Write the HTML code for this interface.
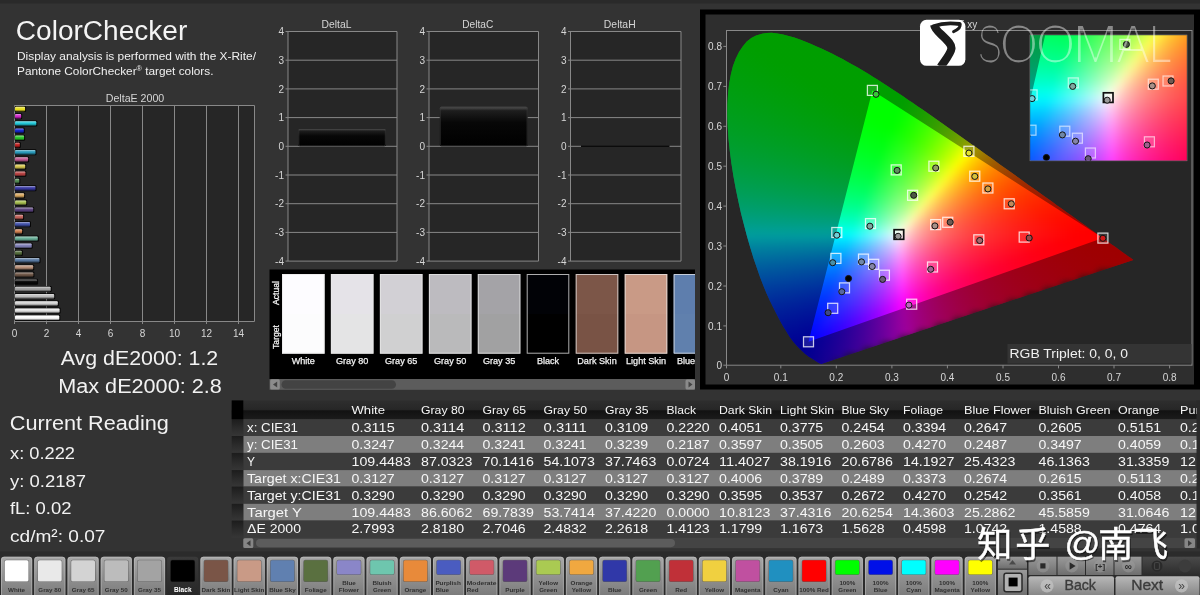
<!DOCTYPE html>
<html lang="en"><head><meta charset="utf-8"><title>ColorChecker</title>
<style>html,body{margin:0;padding:0;background:#333333;overflow:hidden}svg{display:block;font-family:'Liberation Sans', 'Noto Sans CJK SC', sans-serif}</style></head><body>
<svg width="1200" height="595" viewBox="0 0 1200 595">
<defs>
<linearGradient id="gbar" x1="0" y1="0" x2="0" y2="1"><stop offset="0" stop-color="#fff" stop-opacity=".55"/><stop offset=".35" stop-color="#fff" stop-opacity=".1"/><stop offset=".6" stop-color="#000" stop-opacity="0"/><stop offset="1" stop-color="#000" stop-opacity=".55"/></linearGradient>
<linearGradient id="gbtn" x1="0" y1="0" x2="0" y2="1"><stop offset="0" stop-color="#a8a8a8"/><stop offset=".5" stop-color="#909090"/><stop offset="1" stop-color="#787878"/></linearGradient>
<linearGradient id="gbtnsel" x1="0" y1="0" x2="0" y2="1"><stop offset="0" stop-color="#3a3a3a"/><stop offset="1" stop-color="#262626"/></linearGradient>
<linearGradient id="gblk" x1="0" y1="0" x2="0" y2="1"><stop offset="0" stop-color="#565656"/><stop offset=".1" stop-color="#1e1e1e"/><stop offset=".4" stop-color="#070707"/><stop offset="1" stop-color="#000"/></linearGradient>
<linearGradient id="ghead" x1="0" y1="0" x2="0" y2="1"><stop offset="0" stop-color="#2e2e2e"/><stop offset=".48" stop-color="#272727"/><stop offset=".56" stop-color="#121212"/><stop offset="1" stop-color="#1b1b1b"/></linearGradient>
<linearGradient id="gsel" x1="0" y1="0" x2="0" y2="1"><stop offset="0" stop-color="#1c1c1c"/><stop offset=".5" stop-color="#2a2a2a"/><stop offset="1" stop-color="#363636"/></linearGradient>
<linearGradient id="gctl" x1="0" y1="0" x2="0" y2="1"><stop offset="0" stop-color="#b8b8b8"/><stop offset="1" stop-color="#848484"/></linearGradient>
<linearGradient id="gctl2" x1="0" y1="0" x2="0" y2="1"><stop offset="0" stop-color="#9a9a9a"/><stop offset="1" stop-color="#6e6e6e"/></linearGradient>
<linearGradient id="gctld" x1="0" y1="0" x2="0" y2="1"><stop offset="0" stop-color="#4a4a4a"/><stop offset="1" stop-color="#2c2c2c"/></linearGradient>
<clipPath id="cloc"><path d="M821.9 363.8L821.8 363.8L821.8 363.9L821.6 363.9L821.5 363.9L821.3 363.9L821.0 363.9L820.7 363.8L820.4 363.8L820.1 363.6L819.8 363.5L819.5 363.3L819.0 363.0L818.5 362.7L818.0 362.4L817.3 361.9L816.5 361.4L815.6 360.9L814.6 360.3L813.5 359.6L812.2 358.7L810.7 357.8L809.1 356.9L807.3 355.6L805.2 353.9L802.6 351.6L799.7 348.8L796.8 345.7L794.1 342.7L792.0 340.0L790.1 337.4L788.2 334.5L786.1 331.1L783.7 327.2L781.3 323.0L778.7 318.2L775.9 312.8L773.0 306.9L769.8 300.5L766.6 293.4L763.4 285.7L760.1 277.2L756.9 268.1L753.6 258.4L750.4 248.0L747.2 237.0L744.1 225.3L741.0 213.2L738.3 201.1L735.7 188.6L733.4 175.9L731.4 163.2L729.8 150.9L728.5 138.8L727.7 126.9L727.3 115.3L727.4 104.4L728.0 94.0L729.1 84.0L730.8 74.7L732.9 66.3L735.7 58.8L739.0 52.1L742.7 46.4L746.8 41.6L751.3 38.1L756.1 35.6L761.2 33.9L766.5 32.9L771.8 32.8L777.4 33.4L783.0 34.6L788.6 36.0L794.3 37.6L799.9 39.6L805.6 41.8L811.1 44.1L816.6 46.4L821.9 48.8L827.1 51.2L832.4 53.8L837.5 56.4L842.6 59.1L847.7 61.9L852.7 64.7L857.8 67.6L862.8 70.6L867.8 73.6L872.9 76.7L877.8 79.8L882.8 83.0L887.8 86.2L892.7 89.4L897.7 92.7L902.7 96.0L907.6 99.4L912.6 102.8L917.5 106.2L922.5 109.6L927.5 113.0L932.5 116.5L937.4 120.0L942.4 123.5L947.3 126.9L952.2 130.4L957.2 133.9L962.1 137.4L967.0 140.9L971.9 144.4L976.8 147.8L981.6 151.3L986.4 154.7L991.2 158.1L995.9 161.5L1000.6 164.9L1005.3 168.2L1009.9 171.5L1014.5 174.8L1019.0 178.1L1023.4 181.3L1027.8 184.4L1032.2 187.5L1036.4 190.5L1040.6 193.5L1044.7 196.5L1048.7 199.3L1052.6 202.1L1056.4 204.9L1060.1 207.5L1063.6 210.0L1067.0 212.5L1070.3 214.8L1073.5 217.1L1076.6 219.3L1079.6 221.5L1082.5 223.5L1085.3 225.5L1087.8 227.3L1090.0 228.9L1092.3 230.5L1095.1 232.5L1098.4 234.9L1102.2 237.6L1106.0 240.3L1109.3 242.7L1112.0 244.7L1114.4 246.3L1116.5 247.8L1118.4 249.2L1120.2 250.5L1121.8 251.7L1123.3 252.7L1124.6 253.7L1125.8 254.5L1126.8 255.2L1127.7 255.9L1128.5 256.4L1129.2 256.9L1129.7 257.3L1130.2 257.6L1130.7 258.0L1131.4 258.5L1132.2 259.1L1132.8 259.5L1133.3 259.9Z"/></clipPath>
<clipPath id="cins"><rect x="1030.2" y="35.2" width="156.6" height="125.4"/></clipPath>
<filter id="fb" x="-5%" y="-5%" width="110%" height="110%" color-interpolation-filters="sRGB"><feGaussianBlur stdDeviation="3.2"/></filter>
<filter id="fthin" x="-2%" y="-10%" width="104%" height="120%"><feMorphology operator="erode" radius="1.1"/></filter>
<clipPath id="clogo"><rect x="0" y="0" width="45.4" height="46" rx="6.5"/></clipPath>
<radialGradient id="gdark" gradientUnits="userSpaceOnUse" cx="790" cy="400" r="120"><stop offset="0" stop-color="#000" stop-opacity=".5"/><stop offset=".5" stop-color="#000" stop-opacity=".42"/><stop offset="1" stop-color="#000" stop-opacity=".38"/></radialGradient>
<g id="ciem">
<g filter="url(#fb)">
<rect x="755" y="18" width="36.6" height="6.6" fill="#00ff00"/>
<rect x="743" y="24" width="72.6" height="6.6" fill="#00ff00"/>
<rect x="731" y="30" width="96.6" height="6.6" fill="#00ff00"/>
<rect x="725" y="36" width="6.6" height="6.6" fill="#00ff02"/>
<rect x="731" y="36" width="6.6" height="6.6" fill="#00ff01"/>
<rect x="737" y="36" width="96.6" height="6.6" fill="#00ff00"/>
<rect x="725" y="42" width="6.6" height="6.6" fill="#00ff04"/>
<rect x="731" y="42" width="6.6" height="6.6" fill="#00ff03"/>
<rect x="737" y="42" width="6.6" height="6.6" fill="#00ff01"/>
<rect x="743" y="42" width="102.6" height="6.6" fill="#00ff00"/>
<rect x="725" y="48" width="6.6" height="6.6" fill="#00ff06"/>
<rect x="731" y="48" width="6.6" height="6.6" fill="#00ff05"/>
<rect x="737" y="48" width="6.6" height="6.6" fill="#00ff04"/>
<rect x="743" y="48" width="6.6" height="6.6" fill="#00ff02"/>
<rect x="749" y="48" width="6.6" height="6.6" fill="#00ff01"/>
<rect x="755" y="48" width="114.6" height="6.6" fill="#00ff00"/>
<rect x="719" y="54" width="6.6" height="6.6" fill="#00ff0a"/>
<rect x="725" y="54" width="6.6" height="6.6" fill="#00ff09"/>
<rect x="731" y="54" width="6.6" height="6.6" fill="#00ff07"/>
<rect x="737" y="54" width="6.6" height="6.6" fill="#00ff06"/>
<rect x="743" y="54" width="6.6" height="6.6" fill="#00ff05"/>
<rect x="749" y="54" width="6.6" height="6.6" fill="#00ff03"/>
<rect x="755" y="54" width="6.6" height="6.6" fill="#00ff02"/>
<rect x="761" y="54" width="6.6" height="6.6" fill="#00ff01"/>
<rect x="767" y="54" width="108.6" height="6.6" fill="#00ff00"/>
<rect x="719" y="60" width="6.6" height="6.6" fill="#00ff0d"/>
<rect x="725" y="60" width="6.6" height="6.6" fill="#00ff0b"/>
<rect x="731" y="60" width="6.6" height="6.6" fill="#00ff0a"/>
<rect x="737" y="60" width="6.6" height="6.6" fill="#00ff09"/>
<rect x="743" y="60" width="6.6" height="6.6" fill="#00ff07"/>
<rect x="749" y="60" width="6.6" height="6.6" fill="#00ff06"/>
<rect x="755" y="60" width="6.6" height="6.6" fill="#00ff05"/>
<rect x="761" y="60" width="6.6" height="6.6" fill="#00ff03"/>
<rect x="767" y="60" width="6.6" height="6.6" fill="#00ff02"/>
<rect x="773" y="60" width="6.6" height="6.6" fill="#00ff01"/>
<rect x="779" y="60" width="108.6" height="6.6" fill="#00ff00"/>
<rect x="719" y="66" width="6.6" height="6.6" fill="#00ff10"/>
<rect x="725" y="66" width="6.6" height="6.6" fill="#00ff0e"/>
<rect x="731" y="66" width="6.6" height="6.6" fill="#00ff0d"/>
<rect x="737" y="66" width="6.6" height="6.6" fill="#00ff0b"/>
<rect x="743" y="66" width="6.6" height="6.6" fill="#00ff0a"/>
<rect x="749" y="66" width="6.6" height="6.6" fill="#00ff09"/>
<rect x="755" y="66" width="6.6" height="6.6" fill="#00ff07"/>
<rect x="761" y="66" width="6.6" height="6.6" fill="#00ff06"/>
<rect x="767" y="66" width="6.6" height="6.6" fill="#00ff04"/>
<rect x="773" y="66" width="6.6" height="6.6" fill="#00ff03"/>
<rect x="779" y="66" width="6.6" height="6.6" fill="#00ff02"/>
<rect x="785" y="66" width="6.6" height="6.6" fill="#00ff01"/>
<rect x="791" y="66" width="108.6" height="6.6" fill="#00ff00"/>
<rect x="713" y="72" width="6.6" height="6.6" fill="#00ff14"/>
<rect x="719" y="72" width="6.6" height="6.6" fill="#00ff13"/>
<rect x="725" y="72" width="6.6" height="6.6" fill="#00ff11"/>
<rect x="731" y="72" width="6.6" height="6.6" fill="#00ff10"/>
<rect x="737" y="72" width="6.6" height="6.6" fill="#00ff0f"/>
<rect x="743" y="72" width="6.6" height="6.6" fill="#00ff0d"/>
<rect x="749" y="72" width="6.6" height="6.6" fill="#00ff0c"/>
<rect x="755" y="72" width="6.6" height="6.6" fill="#00ff0a"/>
<rect x="761" y="72" width="6.6" height="6.6" fill="#00ff09"/>
<rect x="767" y="72" width="6.6" height="6.6" fill="#00ff07"/>
<rect x="773" y="72" width="6.6" height="6.6" fill="#00ff06"/>
<rect x="779" y="72" width="6.6" height="6.6" fill="#00ff04"/>
<rect x="785" y="72" width="6.6" height="6.6" fill="#00ff03"/>
<rect x="791" y="72" width="6.6" height="6.6" fill="#00ff02"/>
<rect x="797" y="72" width="102.6" height="6.6" fill="#00ff00"/>
<rect x="713" y="78" width="6.6" height="6.6" fill="#00ff18"/>
<rect x="719" y="78" width="6.6" height="6.6" fill="#00ff16"/>
<rect x="725" y="78" width="6.6" height="6.6" fill="#00ff15"/>
<rect x="731" y="78" width="6.6" height="6.6" fill="#00ff13"/>
<rect x="737" y="78" width="6.6" height="6.6" fill="#00ff12"/>
<rect x="743" y="78" width="6.6" height="6.6" fill="#00ff10"/>
<rect x="749" y="78" width="6.6" height="6.6" fill="#00ff0f"/>
<rect x="755" y="78" width="6.6" height="6.6" fill="#00ff0d"/>
<rect x="761" y="78" width="6.6" height="6.6" fill="#00ff0c"/>
<rect x="767" y="78" width="6.6" height="6.6" fill="#00ff0a"/>
<rect x="773" y="78" width="6.6" height="6.6" fill="#00ff09"/>
<rect x="779" y="78" width="6.6" height="6.6" fill="#00ff07"/>
<rect x="785" y="78" width="6.6" height="6.6" fill="#00ff06"/>
<rect x="791" y="78" width="6.6" height="6.6" fill="#00ff04"/>
<rect x="797" y="78" width="6.6" height="6.6" fill="#00ff03"/>
<rect x="803" y="78" width="6.6" height="6.6" fill="#00ff01"/>
<rect x="809" y="78" width="96.6" height="6.6" fill="#00ff00"/>
<rect x="713" y="84" width="6.6" height="6.6" fill="#00ff1b"/>
<rect x="719" y="84" width="6.6" height="6.6" fill="#00ff1a"/>
<rect x="725" y="84" width="6.6" height="6.6" fill="#00ff18"/>
<rect x="731" y="84" width="6.6" height="6.6" fill="#00ff17"/>
<rect x="737" y="84" width="6.6" height="6.6" fill="#00ff15"/>
<rect x="743" y="84" width="6.6" height="6.6" fill="#00ff14"/>
<rect x="749" y="84" width="6.6" height="6.6" fill="#00ff12"/>
<rect x="755" y="84" width="6.6" height="6.6" fill="#00ff11"/>
<rect x="761" y="84" width="6.6" height="6.6" fill="#00ff0f"/>
<rect x="767" y="84" width="6.6" height="6.6" fill="#00ff0d"/>
<rect x="773" y="84" width="6.6" height="6.6" fill="#00ff0c"/>
<rect x="779" y="84" width="6.6" height="6.6" fill="#00ff0a"/>
<rect x="785" y="84" width="6.6" height="6.6" fill="#00ff09"/>
<rect x="791" y="84" width="6.6" height="6.6" fill="#00ff07"/>
<rect x="797" y="84" width="6.6" height="6.6" fill="#00ff05"/>
<rect x="803" y="84" width="6.6" height="6.6" fill="#00ff04"/>
<rect x="809" y="84" width="6.6" height="6.6" fill="#00ff02"/>
<rect x="815" y="84" width="6.6" height="6.6" fill="#00ff01"/>
<rect x="821" y="84" width="84.6" height="6.6" fill="#00ff00"/>
<rect x="905" y="84" width="6.6" height="6.6" fill="#01ff00"/>
<rect x="911" y="84" width="6.6" height="6.6" fill="#08ff00"/>
<rect x="713" y="90" width="6.6" height="6.6" fill="#00ff1f"/>
<rect x="719" y="90" width="6.6" height="6.6" fill="#00ff1e"/>
<rect x="725" y="90" width="6.6" height="6.6" fill="#00ff1c"/>
<rect x="731" y="90" width="6.6" height="6.6" fill="#00ff1b"/>
<rect x="737" y="90" width="6.6" height="6.6" fill="#00ff19"/>
<rect x="743" y="90" width="6.6" height="6.6" fill="#00ff17"/>
<rect x="749" y="90" width="6.6" height="6.6" fill="#00ff16"/>
<rect x="755" y="90" width="6.6" height="6.6" fill="#00ff14"/>
<rect x="761" y="90" width="6.6" height="6.6" fill="#00ff13"/>
<rect x="767" y="90" width="6.6" height="6.6" fill="#00ff11"/>
<rect x="773" y="90" width="6.6" height="6.6" fill="#00ff0f"/>
<rect x="779" y="90" width="6.6" height="6.6" fill="#00ff0e"/>
<rect x="785" y="90" width="6.6" height="6.6" fill="#00ff0c"/>
<rect x="791" y="90" width="6.6" height="6.6" fill="#00ff0a"/>
<rect x="797" y="90" width="6.6" height="6.6" fill="#00ff09"/>
<rect x="803" y="90" width="6.6" height="6.6" fill="#00ff07"/>
<rect x="809" y="90" width="6.6" height="6.6" fill="#00ff05"/>
<rect x="815" y="90" width="6.6" height="6.6" fill="#00ff04"/>
<rect x="821" y="90" width="6.6" height="6.6" fill="#00ff02"/>
<rect x="827" y="90" width="6.6" height="6.6" fill="#00ff01"/>
<rect x="833" y="90" width="72.6" height="6.6" fill="#00ff00"/>
<rect x="905" y="90" width="6.6" height="6.6" fill="#03ff00"/>
<rect x="911" y="90" width="6.6" height="6.6" fill="#0bff00"/>
<rect x="917" y="90" width="6.6" height="6.6" fill="#14ff00"/>
<rect x="923" y="90" width="6.6" height="6.6" fill="#1eff00"/>
<rect x="713" y="96" width="6.6" height="6.6" fill="#00ff23"/>
<rect x="719" y="96" width="6.6" height="6.6" fill="#00ff22"/>
<rect x="725" y="96" width="6.6" height="6.6" fill="#00ff20"/>
<rect x="731" y="96" width="6.6" height="6.6" fill="#00ff1f"/>
<rect x="737" y="96" width="6.6" height="6.6" fill="#00ff1d"/>
<rect x="743" y="96" width="6.6" height="6.6" fill="#00ff1b"/>
<rect x="749" y="96" width="6.6" height="6.6" fill="#00ff1a"/>
<rect x="755" y="96" width="6.6" height="6.6" fill="#00ff18"/>
<rect x="761" y="96" width="6.6" height="6.6" fill="#00ff16"/>
<rect x="767" y="96" width="6.6" height="6.6" fill="#00ff15"/>
<rect x="773" y="96" width="6.6" height="6.6" fill="#00ff13"/>
<rect x="779" y="96" width="6.6" height="6.6" fill="#00ff11"/>
<rect x="785" y="96" width="6.6" height="6.6" fill="#00ff10"/>
<rect x="791" y="96" width="6.6" height="6.6" fill="#00ff0e"/>
<rect x="797" y="96" width="6.6" height="6.6" fill="#00ff0c"/>
<rect x="803" y="96" width="6.6" height="6.6" fill="#00ff0a"/>
<rect x="809" y="96" width="6.6" height="6.6" fill="#00ff09"/>
<rect x="815" y="96" width="6.6" height="6.6" fill="#00ff07"/>
<rect x="821" y="96" width="6.6" height="6.6" fill="#00ff05"/>
<rect x="827" y="96" width="6.6" height="6.6" fill="#00ff03"/>
<rect x="833" y="96" width="6.6" height="6.6" fill="#00ff02"/>
<rect x="839" y="96" width="66.6" height="6.6" fill="#00ff00"/>
<rect x="905" y="96" width="6.6" height="6.6" fill="#06ff00"/>
<rect x="911" y="96" width="6.6" height="6.6" fill="#0fff00"/>
<rect x="917" y="96" width="6.6" height="6.6" fill="#18ff00"/>
<rect x="923" y="96" width="6.6" height="6.6" fill="#23ff00"/>
<rect x="929" y="96" width="6.6" height="6.6" fill="#2eff00"/>
<rect x="713" y="102" width="6.6" height="6.6" fill="#00ff28"/>
<rect x="719" y="102" width="6.6" height="6.6" fill="#00ff26"/>
<rect x="725" y="102" width="6.6" height="6.6" fill="#00ff25"/>
<rect x="731" y="102" width="6.6" height="6.6" fill="#00ff23"/>
<rect x="737" y="102" width="6.6" height="6.6" fill="#00ff21"/>
<rect x="743" y="102" width="6.6" height="6.6" fill="#00ff20"/>
<rect x="749" y="102" width="6.6" height="6.6" fill="#00ff1e"/>
<rect x="755" y="102" width="6.6" height="6.6" fill="#00ff1c"/>
<rect x="761" y="102" width="6.6" height="6.6" fill="#00ff1a"/>
<rect x="767" y="102" width="6.6" height="6.6" fill="#00ff19"/>
<rect x="773" y="102" width="6.6" height="6.6" fill="#00ff17"/>
<rect x="779" y="102" width="6.6" height="6.6" fill="#00ff15"/>
<rect x="785" y="102" width="6.6" height="6.6" fill="#00ff13"/>
<rect x="791" y="102" width="6.6" height="6.6" fill="#00ff12"/>
<rect x="797" y="102" width="6.6" height="6.6" fill="#00ff10"/>
<rect x="803" y="102" width="6.6" height="6.6" fill="#00ff0e"/>
<rect x="809" y="102" width="6.6" height="6.6" fill="#00ff0c"/>
<rect x="815" y="102" width="6.6" height="6.6" fill="#00ff0a"/>
<rect x="821" y="102" width="6.6" height="6.6" fill="#00ff09"/>
<rect x="827" y="102" width="6.6" height="6.6" fill="#00ff07"/>
<rect x="833" y="102" width="6.6" height="6.6" fill="#00ff05"/>
<rect x="839" y="102" width="6.6" height="6.6" fill="#00ff03"/>
<rect x="845" y="102" width="6.6" height="6.6" fill="#00ff02"/>
<rect x="851" y="102" width="48.6" height="6.6" fill="#00ff00"/>
<rect x="899" y="102" width="6.6" height="6.6" fill="#02ff00"/>
<rect x="905" y="102" width="6.6" height="6.6" fill="#0aff00"/>
<rect x="911" y="102" width="6.6" height="6.6" fill="#13ff00"/>
<rect x="917" y="102" width="6.6" height="6.6" fill="#1dff00"/>
<rect x="923" y="102" width="6.6" height="6.6" fill="#28ff00"/>
<rect x="929" y="102" width="6.6" height="6.6" fill="#34ff00"/>
<rect x="935" y="102" width="6.6" height="6.6" fill="#40ff00"/>
<rect x="941" y="102" width="6.6" height="6.6" fill="#4dff00"/>
<rect x="713" y="108" width="6.6" height="6.6" fill="#00ff2c"/>
<rect x="719" y="108" width="6.6" height="6.6" fill="#00ff2b"/>
<rect x="725" y="108" width="6.6" height="6.6" fill="#00ff29"/>
<rect x="731" y="108" width="6.6" height="6.6" fill="#00ff27"/>
<rect x="737" y="108" width="6.6" height="6.6" fill="#00ff26"/>
<rect x="743" y="108" width="6.6" height="6.6" fill="#00ff24"/>
<rect x="749" y="108" width="6.6" height="6.6" fill="#00ff22"/>
<rect x="755" y="108" width="6.6" height="6.6" fill="#00ff21"/>
<rect x="761" y="108" width="6.6" height="6.6" fill="#00ff1f"/>
<rect x="767" y="108" width="6.6" height="6.6" fill="#00ff1d"/>
<rect x="773" y="108" width="6.6" height="6.6" fill="#00ff1b"/>
<rect x="779" y="108" width="6.6" height="6.6" fill="#00ff19"/>
<rect x="785" y="108" width="6.6" height="6.6" fill="#00ff18"/>
<rect x="791" y="108" width="6.6" height="6.6" fill="#00ff16"/>
<rect x="797" y="108" width="6.6" height="6.6" fill="#00ff14"/>
<rect x="803" y="108" width="6.6" height="6.6" fill="#00ff12"/>
<rect x="809" y="108" width="6.6" height="6.6" fill="#00ff10"/>
<rect x="815" y="108" width="6.6" height="6.6" fill="#00ff0e"/>
<rect x="821" y="108" width="6.6" height="6.6" fill="#00ff0c"/>
<rect x="827" y="108" width="6.6" height="6.6" fill="#00ff0a"/>
<rect x="833" y="108" width="6.6" height="6.6" fill="#00ff08"/>
<rect x="839" y="108" width="6.6" height="6.6" fill="#00ff07"/>
<rect x="845" y="108" width="6.6" height="6.6" fill="#00ff05"/>
<rect x="851" y="108" width="6.6" height="6.6" fill="#00ff03"/>
<rect x="857" y="108" width="6.6" height="6.6" fill="#00ff01"/>
<rect x="863" y="108" width="36.6" height="6.6" fill="#00ff00"/>
<rect x="899" y="108" width="6.6" height="6.6" fill="#05ff00"/>
<rect x="905" y="108" width="6.6" height="6.6" fill="#0eff00"/>
<rect x="911" y="108" width="6.6" height="6.6" fill="#18ff00"/>
<rect x="917" y="108" width="6.6" height="6.6" fill="#22ff00"/>
<rect x="923" y="108" width="6.6" height="6.6" fill="#2eff00"/>
<rect x="929" y="108" width="6.6" height="6.6" fill="#3aff00"/>
<rect x="935" y="108" width="6.6" height="6.6" fill="#47ff00"/>
<rect x="941" y="108" width="6.6" height="6.6" fill="#54ff00"/>
<rect x="947" y="108" width="6.6" height="6.6" fill="#63ff00"/>
<rect x="953" y="108" width="6.6" height="6.6" fill="#72ff00"/>
<rect x="713" y="114" width="6.6" height="6.6" fill="#00ff31"/>
<rect x="719" y="114" width="6.6" height="6.6" fill="#00ff30"/>
<rect x="725" y="114" width="6.6" height="6.6" fill="#00ff2e"/>
<rect x="731" y="114" width="6.6" height="6.6" fill="#00ff2c"/>
<rect x="737" y="114" width="6.6" height="6.6" fill="#00ff2b"/>
<rect x="743" y="114" width="6.6" height="6.6" fill="#00ff29"/>
<rect x="749" y="114" width="6.6" height="6.6" fill="#00ff27"/>
<rect x="755" y="114" width="6.6" height="6.6" fill="#00ff25"/>
<rect x="761" y="114" width="6.6" height="6.6" fill="#00ff24"/>
<rect x="767" y="114" width="6.6" height="6.6" fill="#00ff22"/>
<rect x="773" y="114" width="6.6" height="6.6" fill="#00ff20"/>
<rect x="779" y="114" width="6.6" height="6.6" fill="#00ff1e"/>
<rect x="785" y="114" width="6.6" height="6.6" fill="#00ff1c"/>
<rect x="791" y="114" width="6.6" height="6.6" fill="#00ff1a"/>
<rect x="797" y="114" width="6.6" height="6.6" fill="#00ff18"/>
<rect x="803" y="114" width="6.6" height="6.6" fill="#00ff16"/>
<rect x="809" y="114" width="6.6" height="6.6" fill="#00ff14"/>
<rect x="815" y="114" width="6.6" height="6.6" fill="#00ff13"/>
<rect x="821" y="114" width="6.6" height="6.6" fill="#00ff11"/>
<rect x="827" y="114" width="6.6" height="6.6" fill="#00ff0f"/>
<rect x="833" y="114" width="6.6" height="6.6" fill="#00ff0c"/>
<rect x="839" y="114" width="6.6" height="6.6" fill="#00ff0a"/>
<rect x="845" y="114" width="6.6" height="6.6" fill="#00ff08"/>
<rect x="851" y="114" width="6.6" height="6.6" fill="#00ff06"/>
<rect x="857" y="114" width="6.6" height="6.6" fill="#00ff05"/>
<rect x="863" y="114" width="6.6" height="6.6" fill="#00ff03"/>
<rect x="869" y="114" width="6.6" height="6.6" fill="#00ff01"/>
<rect x="875" y="114" width="24.6" height="6.6" fill="#00ff00"/>
<rect x="899" y="114" width="6.6" height="6.6" fill="#08ff00"/>
<rect x="905" y="114" width="6.6" height="6.6" fill="#12ff00"/>
<rect x="911" y="114" width="6.6" height="6.6" fill="#1cff00"/>
<rect x="917" y="114" width="6.6" height="6.6" fill="#28ff00"/>
<rect x="923" y="114" width="6.6" height="6.6" fill="#34ff00"/>
<rect x="929" y="114" width="6.6" height="6.6" fill="#41ff00"/>
<rect x="935" y="114" width="6.6" height="6.6" fill="#4fff00"/>
<rect x="941" y="114" width="6.6" height="6.6" fill="#5dff00"/>
<rect x="947" y="114" width="6.6" height="6.6" fill="#6cff00"/>
<rect x="953" y="114" width="6.6" height="6.6" fill="#7cff00"/>
<rect x="959" y="114" width="6.6" height="6.6" fill="#8cff00"/>
<rect x="713" y="120" width="6.6" height="6.6" fill="#00ff36"/>
<rect x="719" y="120" width="6.6" height="6.6" fill="#00ff35"/>
<rect x="725" y="120" width="6.6" height="6.6" fill="#00ff33"/>
<rect x="731" y="120" width="6.6" height="6.6" fill="#00ff31"/>
<rect x="737" y="120" width="6.6" height="6.6" fill="#00ff30"/>
<rect x="743" y="120" width="6.6" height="6.6" fill="#00ff2e"/>
<rect x="749" y="120" width="6.6" height="6.6" fill="#00ff2c"/>
<rect x="755" y="120" width="6.6" height="6.6" fill="#00ff2a"/>
<rect x="761" y="120" width="6.6" height="6.6" fill="#00ff29"/>
<rect x="767" y="120" width="6.6" height="6.6" fill="#00ff27"/>
<rect x="773" y="120" width="6.6" height="6.6" fill="#00ff25"/>
<rect x="779" y="120" width="6.6" height="6.6" fill="#00ff23"/>
<rect x="785" y="120" width="6.6" height="6.6" fill="#00ff21"/>
<rect x="791" y="120" width="6.6" height="6.6" fill="#00ff1f"/>
<rect x="797" y="120" width="6.6" height="6.6" fill="#00ff1d"/>
<rect x="803" y="120" width="6.6" height="6.6" fill="#00ff1b"/>
<rect x="809" y="120" width="6.6" height="6.6" fill="#00ff19"/>
<rect x="815" y="120" width="6.6" height="6.6" fill="#00ff17"/>
<rect x="821" y="120" width="6.6" height="6.6" fill="#00ff15"/>
<rect x="827" y="120" width="6.6" height="6.6" fill="#00ff13"/>
<rect x="833" y="120" width="6.6" height="6.6" fill="#00ff11"/>
<rect x="839" y="120" width="6.6" height="6.6" fill="#00ff0f"/>
<rect x="845" y="120" width="6.6" height="6.6" fill="#00ff0d"/>
<rect x="851" y="120" width="6.6" height="6.6" fill="#00ff0b"/>
<rect x="857" y="120" width="6.6" height="6.6" fill="#00ff08"/>
<rect x="863" y="120" width="6.6" height="6.6" fill="#00ff06"/>
<rect x="869" y="120" width="6.6" height="6.6" fill="#00ff04"/>
<rect x="875" y="120" width="6.6" height="6.6" fill="#00ff02"/>
<rect x="881" y="120" width="12.6" height="6.6" fill="#00ff00"/>
<rect x="893" y="120" width="6.6" height="6.6" fill="#03ff00"/>
<rect x="899" y="120" width="6.6" height="6.6" fill="#0cff00"/>
<rect x="905" y="120" width="6.6" height="6.6" fill="#17ff00"/>
<rect x="911" y="120" width="6.6" height="6.6" fill="#22ff00"/>
<rect x="917" y="120" width="6.6" height="6.6" fill="#2eff00"/>
<rect x="923" y="120" width="6.6" height="6.6" fill="#3bff00"/>
<rect x="929" y="120" width="6.6" height="6.6" fill="#49ff00"/>
<rect x="935" y="120" width="6.6" height="6.6" fill="#57ff00"/>
<rect x="941" y="120" width="6.6" height="6.6" fill="#66ff00"/>
<rect x="947" y="120" width="6.6" height="6.6" fill="#76ff00"/>
<rect x="953" y="120" width="6.6" height="6.6" fill="#87ff00"/>
<rect x="959" y="120" width="6.6" height="6.6" fill="#98ff00"/>
<rect x="713" y="126" width="6.6" height="6.6" fill="#00ff3c"/>
<rect x="719" y="126" width="6.6" height="6.6" fill="#00ff3a"/>
<rect x="725" y="126" width="6.6" height="6.6" fill="#00ff39"/>
<rect x="731" y="126" width="6.6" height="6.6" fill="#00ff37"/>
<rect x="737" y="126" width="6.6" height="6.6" fill="#00ff35"/>
<rect x="743" y="126" width="6.6" height="6.6" fill="#00ff33"/>
<rect x="749" y="126" width="6.6" height="6.6" fill="#00ff32"/>
<rect x="755" y="126" width="6.6" height="6.6" fill="#00ff30"/>
<rect x="761" y="126" width="6.6" height="6.6" fill="#00ff2e"/>
<rect x="767" y="126" width="6.6" height="6.6" fill="#00ff2c"/>
<rect x="773" y="126" width="6.6" height="6.6" fill="#00ff2a"/>
<rect x="779" y="126" width="6.6" height="6.6" fill="#00ff28"/>
<rect x="785" y="126" width="6.6" height="6.6" fill="#00ff26"/>
<rect x="791" y="126" width="6.6" height="6.6" fill="#00ff24"/>
<rect x="797" y="126" width="6.6" height="6.6" fill="#00ff22"/>
<rect x="803" y="126" width="6.6" height="6.6" fill="#00ff20"/>
<rect x="809" y="126" width="6.6" height="6.6" fill="#00ff1e"/>
<rect x="815" y="126" width="6.6" height="6.6" fill="#00ff1c"/>
<rect x="821" y="126" width="6.6" height="6.6" fill="#00ff1a"/>
<rect x="827" y="126" width="6.6" height="6.6" fill="#00ff18"/>
<rect x="833" y="126" width="6.6" height="6.6" fill="#00ff16"/>
<rect x="839" y="126" width="6.6" height="6.6" fill="#00ff14"/>
<rect x="845" y="126" width="6.6" height="6.6" fill="#00ff11"/>
<rect x="851" y="126" width="6.6" height="6.6" fill="#00ff0f"/>
<rect x="857" y="126" width="6.6" height="6.6" fill="#00ff0d"/>
<rect x="863" y="126" width="6.6" height="6.6" fill="#00ff0b"/>
<rect x="869" y="126" width="6.6" height="6.6" fill="#00ff08"/>
<rect x="875" y="126" width="6.6" height="6.6" fill="#00ff06"/>
<rect x="881" y="126" width="6.6" height="6.6" fill="#00ff04"/>
<rect x="887" y="126" width="6.6" height="6.6" fill="#00ff02"/>
<rect x="893" y="126" width="6.6" height="6.6" fill="#07ff00"/>
<rect x="899" y="126" width="6.6" height="6.6" fill="#11ff00"/>
<rect x="905" y="126" width="6.6" height="6.6" fill="#1cff00"/>
<rect x="911" y="126" width="6.6" height="6.6" fill="#28ff00"/>
<rect x="917" y="126" width="6.6" height="6.6" fill="#35ff00"/>
<rect x="923" y="126" width="6.6" height="6.6" fill="#42ff00"/>
<rect x="929" y="126" width="6.6" height="6.6" fill="#51ff00"/>
<rect x="935" y="126" width="6.6" height="6.6" fill="#60ff00"/>
<rect x="941" y="126" width="6.6" height="6.6" fill="#70ff00"/>
<rect x="947" y="126" width="6.6" height="6.6" fill="#81ff00"/>
<rect x="953" y="126" width="6.6" height="6.6" fill="#93ff00"/>
<rect x="959" y="126" width="6.6" height="6.6" fill="#a5ff00"/>
<rect x="965" y="126" width="6.6" height="6.6" fill="#b9ff00"/>
<rect x="971" y="126" width="6.6" height="6.6" fill="#cdff00"/>
<rect x="713" y="132" width="6.6" height="6.6" fill="#00ff42"/>
<rect x="719" y="132" width="6.6" height="6.6" fill="#00ff40"/>
<rect x="725" y="132" width="6.6" height="6.6" fill="#00ff3e"/>
<rect x="731" y="132" width="6.6" height="6.6" fill="#00ff3d"/>
<rect x="737" y="132" width="6.6" height="6.6" fill="#00ff3b"/>
<rect x="743" y="132" width="6.6" height="6.6" fill="#00ff39"/>
<rect x="749" y="132" width="6.6" height="6.6" fill="#00ff37"/>
<rect x="755" y="132" width="6.6" height="6.6" fill="#00ff36"/>
<rect x="761" y="132" width="6.6" height="6.6" fill="#00ff34"/>
<rect x="767" y="132" width="6.6" height="6.6" fill="#00ff32"/>
<rect x="773" y="132" width="6.6" height="6.6" fill="#00ff30"/>
<rect x="779" y="132" width="6.6" height="6.6" fill="#00ff2e"/>
<rect x="785" y="132" width="6.6" height="6.6" fill="#00ff2c"/>
<rect x="791" y="132" width="6.6" height="6.6" fill="#00ff2a"/>
<rect x="797" y="132" width="6.6" height="6.6" fill="#00ff28"/>
<rect x="803" y="132" width="6.6" height="6.6" fill="#00ff26"/>
<rect x="809" y="132" width="6.6" height="6.6" fill="#00ff24"/>
<rect x="815" y="132" width="6.6" height="6.6" fill="#00ff22"/>
<rect x="821" y="132" width="6.6" height="6.6" fill="#00ff20"/>
<rect x="827" y="132" width="6.6" height="6.6" fill="#00ff1d"/>
<rect x="833" y="132" width="6.6" height="6.6" fill="#00ff1b"/>
<rect x="839" y="132" width="6.6" height="6.6" fill="#00ff19"/>
<rect x="845" y="132" width="6.6" height="6.6" fill="#00ff17"/>
<rect x="851" y="132" width="6.6" height="6.6" fill="#00ff14"/>
<rect x="857" y="132" width="6.6" height="6.6" fill="#00ff12"/>
<rect x="863" y="132" width="6.6" height="6.6" fill="#00ff10"/>
<rect x="869" y="132" width="6.6" height="6.6" fill="#00ff0d"/>
<rect x="875" y="132" width="6.6" height="6.6" fill="#00ff0b"/>
<rect x="881" y="132" width="6.6" height="6.6" fill="#00ff08"/>
<rect x="887" y="132" width="6.6" height="6.6" fill="#04ff08"/>
<rect x="893" y="132" width="6.6" height="6.6" fill="#0eff08"/>
<rect x="899" y="132" width="6.6" height="6.6" fill="#17ff04"/>
<rect x="905" y="132" width="6.6" height="6.6" fill="#21ff00"/>
<rect x="911" y="132" width="6.6" height="6.6" fill="#2eff00"/>
<rect x="917" y="132" width="6.6" height="6.6" fill="#3cff00"/>
<rect x="923" y="132" width="6.6" height="6.6" fill="#4aff00"/>
<rect x="929" y="132" width="6.6" height="6.6" fill="#5aff00"/>
<rect x="935" y="132" width="6.6" height="6.6" fill="#6aff00"/>
<rect x="941" y="132" width="6.6" height="6.6" fill="#7bff00"/>
<rect x="947" y="132" width="6.6" height="6.6" fill="#8dff00"/>
<rect x="953" y="132" width="6.6" height="6.6" fill="#a0ff00"/>
<rect x="959" y="132" width="6.6" height="6.6" fill="#b4ff00"/>
<rect x="965" y="132" width="6.6" height="6.6" fill="#c8ff00"/>
<rect x="971" y="132" width="6.6" height="6.6" fill="#deff00"/>
<rect x="977" y="132" width="6.6" height="6.6" fill="#f5ff00"/>
<rect x="713" y="138" width="6.6" height="6.6" fill="#00ff48"/>
<rect x="719" y="138" width="6.6" height="6.6" fill="#00ff46"/>
<rect x="725" y="138" width="6.6" height="6.6" fill="#00ff45"/>
<rect x="731" y="138" width="6.6" height="6.6" fill="#00ff43"/>
<rect x="737" y="138" width="6.6" height="6.6" fill="#00ff41"/>
<rect x="743" y="138" width="6.6" height="6.6" fill="#00ff3f"/>
<rect x="749" y="138" width="6.6" height="6.6" fill="#00ff3e"/>
<rect x="755" y="138" width="6.6" height="6.6" fill="#00ff3c"/>
<rect x="761" y="138" width="6.6" height="6.6" fill="#00ff3a"/>
<rect x="767" y="138" width="6.6" height="6.6" fill="#00ff38"/>
<rect x="773" y="138" width="6.6" height="6.6" fill="#00ff36"/>
<rect x="779" y="138" width="6.6" height="6.6" fill="#00ff34"/>
<rect x="785" y="138" width="6.6" height="6.6" fill="#00ff32"/>
<rect x="791" y="138" width="6.6" height="6.6" fill="#00ff30"/>
<rect x="797" y="138" width="6.6" height="6.6" fill="#00ff2e"/>
<rect x="803" y="138" width="6.6" height="6.6" fill="#00ff2c"/>
<rect x="809" y="138" width="6.6" height="6.6" fill="#00ff2a"/>
<rect x="815" y="138" width="6.6" height="6.6" fill="#00ff28"/>
<rect x="821" y="138" width="6.6" height="6.6" fill="#00ff25"/>
<rect x="827" y="138" width="6.6" height="6.6" fill="#00ff23"/>
<rect x="833" y="138" width="6.6" height="6.6" fill="#00ff21"/>
<rect x="839" y="138" width="6.6" height="6.6" fill="#00ff1f"/>
<rect x="845" y="138" width="6.6" height="6.6" fill="#00ff1c"/>
<rect x="851" y="138" width="6.6" height="6.6" fill="#00ff1a"/>
<rect x="857" y="138" width="6.6" height="6.6" fill="#00ff17"/>
<rect x="863" y="138" width="6.6" height="6.6" fill="#00ff15"/>
<rect x="869" y="138" width="6.6" height="6.6" fill="#00ff12"/>
<rect x="875" y="138" width="6.6" height="6.6" fill="#00ff10"/>
<rect x="881" y="138" width="6.6" height="6.6" fill="#00ff0d"/>
<rect x="887" y="138" width="6.6" height="6.6" fill="#0aff0f"/>
<rect x="893" y="138" width="6.6" height="6.6" fill="#15ff0f"/>
<rect x="899" y="138" width="6.6" height="6.6" fill="#1eff0b"/>
<rect x="905" y="138" width="6.6" height="6.6" fill="#29ff07"/>
<rect x="911" y="138" width="6.6" height="6.6" fill="#36ff03"/>
<rect x="917" y="138" width="6.6" height="6.6" fill="#44ff00"/>
<rect x="923" y="138" width="6.6" height="6.6" fill="#53ff00"/>
<rect x="929" y="138" width="6.6" height="6.6" fill="#64ff00"/>
<rect x="935" y="138" width="6.6" height="6.6" fill="#75ff00"/>
<rect x="941" y="138" width="6.6" height="6.6" fill="#87ff00"/>
<rect x="947" y="138" width="6.6" height="6.6" fill="#9aff00"/>
<rect x="953" y="138" width="6.6" height="6.6" fill="#aeff00"/>
<rect x="959" y="138" width="6.6" height="6.6" fill="#c3ff00"/>
<rect x="965" y="138" width="6.6" height="6.6" fill="#d9ff00"/>
<rect x="971" y="138" width="6.6" height="6.6" fill="#f1ff00"/>
<rect x="977" y="138" width="6.6" height="6.6" fill="#fff500"/>
<rect x="983" y="138" width="6.6" height="6.6" fill="#ffe000"/>
<rect x="989" y="138" width="6.6" height="6.6" fill="#ffcd00"/>
<rect x="713" y="144" width="6.6" height="6.6" fill="#00ff4f"/>
<rect x="719" y="144" width="6.6" height="6.6" fill="#00ff4d"/>
<rect x="725" y="144" width="6.6" height="6.6" fill="#00ff4b"/>
<rect x="731" y="144" width="6.6" height="6.6" fill="#00ff4a"/>
<rect x="737" y="144" width="6.6" height="6.6" fill="#00ff48"/>
<rect x="743" y="144" width="6.6" height="6.6" fill="#00ff46"/>
<rect x="749" y="144" width="6.6" height="6.6" fill="#00ff44"/>
<rect x="755" y="144" width="6.6" height="6.6" fill="#00ff42"/>
<rect x="761" y="144" width="6.6" height="6.6" fill="#00ff41"/>
<rect x="767" y="144" width="6.6" height="6.6" fill="#00ff3f"/>
<rect x="773" y="144" width="6.6" height="6.6" fill="#00ff3d"/>
<rect x="779" y="144" width="6.6" height="6.6" fill="#00ff3b"/>
<rect x="785" y="144" width="6.6" height="6.6" fill="#00ff39"/>
<rect x="791" y="144" width="6.6" height="6.6" fill="#00ff37"/>
<rect x="797" y="144" width="6.6" height="6.6" fill="#00ff35"/>
<rect x="803" y="144" width="6.6" height="6.6" fill="#00ff33"/>
<rect x="809" y="144" width="6.6" height="6.6" fill="#00ff30"/>
<rect x="815" y="144" width="6.6" height="6.6" fill="#00ff2e"/>
<rect x="821" y="144" width="6.6" height="6.6" fill="#00ff2c"/>
<rect x="827" y="144" width="6.6" height="6.6" fill="#00ff2a"/>
<rect x="833" y="144" width="6.6" height="6.6" fill="#00ff27"/>
<rect x="839" y="144" width="6.6" height="6.6" fill="#00ff25"/>
<rect x="845" y="144" width="6.6" height="6.6" fill="#00ff22"/>
<rect x="851" y="144" width="6.6" height="6.6" fill="#00ff20"/>
<rect x="857" y="144" width="6.6" height="6.6" fill="#00ff1d"/>
<rect x="863" y="144" width="6.6" height="6.6" fill="#00ff1b"/>
<rect x="869" y="144" width="6.6" height="6.6" fill="#00ff18"/>
<rect x="875" y="144" width="6.6" height="6.6" fill="#00ff16"/>
<rect x="881" y="144" width="6.6" height="6.6" fill="#01ff13"/>
<rect x="887" y="144" width="6.6" height="6.6" fill="#10ff16"/>
<rect x="893" y="144" width="6.6" height="6.6" fill="#1cff17"/>
<rect x="899" y="144" width="6.6" height="6.6" fill="#26ff13"/>
<rect x="905" y="144" width="6.6" height="6.6" fill="#32ff0f"/>
<rect x="911" y="144" width="6.6" height="6.6" fill="#3fff0b"/>
<rect x="917" y="144" width="6.6" height="6.6" fill="#4eff07"/>
<rect x="923" y="144" width="6.6" height="6.6" fill="#5dff02"/>
<rect x="929" y="144" width="6.6" height="6.6" fill="#6fff00"/>
<rect x="935" y="144" width="6.6" height="6.6" fill="#81ff00"/>
<rect x="941" y="144" width="6.6" height="6.6" fill="#94ff00"/>
<rect x="947" y="144" width="6.6" height="6.6" fill="#a9ff00"/>
<rect x="953" y="144" width="6.6" height="6.6" fill="#beff00"/>
<rect x="959" y="144" width="6.6" height="6.6" fill="#d5ff00"/>
<rect x="965" y="144" width="6.6" height="6.6" fill="#ecff00"/>
<rect x="971" y="144" width="6.6" height="6.6" fill="#fff900"/>
<rect x="977" y="144" width="6.6" height="6.6" fill="#ffe200"/>
<rect x="983" y="144" width="6.6" height="6.6" fill="#ffce00"/>
<rect x="989" y="144" width="6.6" height="6.6" fill="#ffbd00"/>
<rect x="995" y="144" width="6.6" height="6.6" fill="#ffae00"/>
<rect x="1001" y="144" width="6.6" height="6.6" fill="#ffa000"/>
<rect x="713" y="150" width="6.6" height="6.6" fill="#00ff56"/>
<rect x="719" y="150" width="6.6" height="6.6" fill="#00ff54"/>
<rect x="725" y="150" width="6.6" height="6.6" fill="#00ff52"/>
<rect x="731" y="150" width="6.6" height="6.6" fill="#00ff51"/>
<rect x="737" y="150" width="6.6" height="6.6" fill="#00ff4f"/>
<rect x="743" y="150" width="6.6" height="6.6" fill="#00ff4d"/>
<rect x="749" y="150" width="6.6" height="6.6" fill="#00ff4b"/>
<rect x="755" y="150" width="6.6" height="6.6" fill="#00ff4a"/>
<rect x="761" y="150" width="6.6" height="6.6" fill="#00ff48"/>
<rect x="767" y="150" width="6.6" height="6.6" fill="#00ff46"/>
<rect x="773" y="150" width="6.6" height="6.6" fill="#00ff44"/>
<rect x="779" y="150" width="6.6" height="6.6" fill="#00ff42"/>
<rect x="785" y="150" width="6.6" height="6.6" fill="#00ff40"/>
<rect x="791" y="150" width="6.6" height="6.6" fill="#00ff3e"/>
<rect x="797" y="150" width="6.6" height="6.6" fill="#00ff3c"/>
<rect x="803" y="150" width="6.6" height="6.6" fill="#00ff3a"/>
<rect x="809" y="150" width="6.6" height="6.6" fill="#00ff37"/>
<rect x="815" y="150" width="6.6" height="6.6" fill="#00ff35"/>
<rect x="821" y="150" width="6.6" height="6.6" fill="#00ff33"/>
<rect x="827" y="150" width="6.6" height="6.6" fill="#00ff31"/>
<rect x="833" y="150" width="6.6" height="6.6" fill="#00ff2e"/>
<rect x="839" y="150" width="6.6" height="6.6" fill="#00ff2c"/>
<rect x="845" y="150" width="6.6" height="6.6" fill="#00ff29"/>
<rect x="851" y="150" width="6.6" height="6.6" fill="#00ff27"/>
<rect x="857" y="150" width="6.6" height="6.6" fill="#00ff24"/>
<rect x="863" y="150" width="6.6" height="6.6" fill="#00ff22"/>
<rect x="869" y="150" width="6.6" height="6.6" fill="#00ff1f"/>
<rect x="875" y="150" width="6.6" height="6.6" fill="#00ff1c"/>
<rect x="881" y="150" width="6.6" height="6.6" fill="#07ff1c"/>
<rect x="887" y="150" width="6.6" height="6.6" fill="#17ff1e"/>
<rect x="893" y="150" width="6.6" height="6.6" fill="#23ff1f"/>
<rect x="899" y="150" width="6.6" height="6.6" fill="#2eff1b"/>
<rect x="905" y="150" width="6.6" height="6.6" fill="#3bff17"/>
<rect x="911" y="150" width="6.6" height="6.6" fill="#49ff13"/>
<rect x="917" y="150" width="6.6" height="6.6" fill="#58ff0f"/>
<rect x="923" y="150" width="6.6" height="6.6" fill="#69ff0b"/>
<rect x="929" y="150" width="6.6" height="6.6" fill="#7bff06"/>
<rect x="935" y="150" width="6.6" height="6.6" fill="#8eff01"/>
<rect x="941" y="150" width="6.6" height="6.6" fill="#a3ff00"/>
<rect x="947" y="150" width="6.6" height="6.6" fill="#b9ff00"/>
<rect x="953" y="150" width="6.6" height="6.6" fill="#d0ff00"/>
<rect x="959" y="150" width="6.6" height="6.6" fill="#e8ff00"/>
<rect x="965" y="150" width="6.6" height="6.6" fill="#fffd00"/>
<rect x="971" y="150" width="6.6" height="6.6" fill="#ffe500"/>
<rect x="977" y="150" width="6.6" height="6.6" fill="#ffd000"/>
<rect x="983" y="150" width="6.6" height="6.6" fill="#ffbe00"/>
<rect x="989" y="150" width="6.6" height="6.6" fill="#ffae00"/>
<rect x="995" y="150" width="6.6" height="6.6" fill="#ffa000"/>
<rect x="1001" y="150" width="6.6" height="6.6" fill="#ff9300"/>
<rect x="1007" y="150" width="6.6" height="6.6" fill="#ff8800"/>
<rect x="713" y="156" width="6.6" height="6.6" fill="#00ff5d"/>
<rect x="719" y="156" width="6.6" height="6.6" fill="#00ff5c"/>
<rect x="725" y="156" width="6.6" height="6.6" fill="#00ff5a"/>
<rect x="731" y="156" width="6.6" height="6.6" fill="#00ff58"/>
<rect x="737" y="156" width="6.6" height="6.6" fill="#00ff57"/>
<rect x="743" y="156" width="6.6" height="6.6" fill="#00ff55"/>
<rect x="749" y="156" width="6.6" height="6.6" fill="#00ff53"/>
<rect x="755" y="156" width="6.6" height="6.6" fill="#00ff51"/>
<rect x="761" y="156" width="6.6" height="6.6" fill="#00ff4f"/>
<rect x="767" y="156" width="6.6" height="6.6" fill="#00ff4d"/>
<rect x="773" y="156" width="6.6" height="6.6" fill="#00ff4c"/>
<rect x="779" y="156" width="6.6" height="6.6" fill="#00ff4a"/>
<rect x="785" y="156" width="6.6" height="6.6" fill="#00ff48"/>
<rect x="791" y="156" width="6.6" height="6.6" fill="#00ff45"/>
<rect x="797" y="156" width="6.6" height="6.6" fill="#00ff43"/>
<rect x="803" y="156" width="6.6" height="6.6" fill="#00ff41"/>
<rect x="809" y="156" width="6.6" height="6.6" fill="#00ff3f"/>
<rect x="815" y="156" width="6.6" height="6.6" fill="#00ff3d"/>
<rect x="821" y="156" width="6.6" height="6.6" fill="#00ff3a"/>
<rect x="827" y="156" width="6.6" height="6.6" fill="#00ff38"/>
<rect x="833" y="156" width="6.6" height="6.6" fill="#00ff36"/>
<rect x="839" y="156" width="6.6" height="6.6" fill="#00ff33"/>
<rect x="845" y="156" width="6.6" height="6.6" fill="#00ff31"/>
<rect x="851" y="156" width="6.6" height="6.6" fill="#00ff2e"/>
<rect x="857" y="156" width="6.6" height="6.6" fill="#00ff2c"/>
<rect x="863" y="156" width="6.6" height="6.6" fill="#00ff29"/>
<rect x="869" y="156" width="6.6" height="6.6" fill="#00ff26"/>
<rect x="875" y="156" width="6.6" height="6.6" fill="#00ff23"/>
<rect x="881" y="156" width="6.6" height="6.6" fill="#0eff24"/>
<rect x="887" y="156" width="6.6" height="6.6" fill="#1eff26"/>
<rect x="893" y="156" width="6.6" height="6.6" fill="#2bff28"/>
<rect x="899" y="156" width="6.6" height="6.6" fill="#36ff24"/>
<rect x="905" y="156" width="6.6" height="6.6" fill="#44ff20"/>
<rect x="911" y="156" width="6.6" height="6.6" fill="#53ff1c"/>
<rect x="917" y="156" width="6.6" height="6.6" fill="#64ff18"/>
<rect x="923" y="156" width="6.6" height="6.6" fill="#76ff13"/>
<rect x="929" y="156" width="6.6" height="6.6" fill="#89ff0f"/>
<rect x="935" y="156" width="6.6" height="6.6" fill="#9dff0a"/>
<rect x="941" y="156" width="6.6" height="6.6" fill="#b3ff05"/>
<rect x="947" y="156" width="6.6" height="6.6" fill="#caff00"/>
<rect x="953" y="156" width="6.6" height="6.6" fill="#e3ff00"/>
<rect x="959" y="156" width="6.6" height="6.6" fill="#fdff00"/>
<rect x="965" y="156" width="6.6" height="6.6" fill="#ffe800"/>
<rect x="971" y="156" width="6.6" height="6.6" fill="#ffd200"/>
<rect x="977" y="156" width="6.6" height="6.6" fill="#ffbf00"/>
<rect x="983" y="156" width="6.6" height="6.6" fill="#ffaf00"/>
<rect x="989" y="156" width="6.6" height="6.6" fill="#ffa000"/>
<rect x="995" y="156" width="6.6" height="6.6" fill="#ff9300"/>
<rect x="1001" y="156" width="6.6" height="6.6" fill="#ff8700"/>
<rect x="1007" y="156" width="6.6" height="6.6" fill="#ff7d00"/>
<rect x="1013" y="156" width="6.6" height="6.6" fill="#ff7400"/>
<rect x="1019" y="156" width="6.6" height="6.6" fill="#ff6b00"/>
<rect x="719" y="162" width="6.6" height="6.6" fill="#00ff64"/>
<rect x="725" y="162" width="6.6" height="6.6" fill="#00ff62"/>
<rect x="731" y="162" width="6.6" height="6.6" fill="#00ff60"/>
<rect x="737" y="162" width="6.6" height="6.6" fill="#00ff5f"/>
<rect x="743" y="162" width="6.6" height="6.6" fill="#00ff5d"/>
<rect x="749" y="162" width="6.6" height="6.6" fill="#00ff5b"/>
<rect x="755" y="162" width="6.6" height="6.6" fill="#00ff59"/>
<rect x="761" y="162" width="6.6" height="6.6" fill="#00ff58"/>
<rect x="767" y="162" width="6.6" height="6.6" fill="#00ff56"/>
<rect x="773" y="162" width="6.6" height="6.6" fill="#00ff54"/>
<rect x="779" y="162" width="6.6" height="6.6" fill="#00ff52"/>
<rect x="785" y="162" width="6.6" height="6.6" fill="#00ff50"/>
<rect x="791" y="162" width="6.6" height="6.6" fill="#00ff4e"/>
<rect x="797" y="162" width="6.6" height="6.6" fill="#00ff4c"/>
<rect x="803" y="162" width="6.6" height="6.6" fill="#00ff49"/>
<rect x="809" y="162" width="6.6" height="6.6" fill="#00ff47"/>
<rect x="815" y="162" width="6.6" height="6.6" fill="#00ff45"/>
<rect x="821" y="162" width="6.6" height="6.6" fill="#00ff43"/>
<rect x="827" y="162" width="6.6" height="6.6" fill="#00ff40"/>
<rect x="833" y="162" width="6.6" height="6.6" fill="#00ff3e"/>
<rect x="839" y="162" width="6.6" height="6.6" fill="#00ff3c"/>
<rect x="845" y="162" width="6.6" height="6.6" fill="#00ff39"/>
<rect x="851" y="162" width="6.6" height="6.6" fill="#00ff36"/>
<rect x="857" y="162" width="6.6" height="6.6" fill="#00ff34"/>
<rect x="863" y="162" width="6.6" height="6.6" fill="#00ff31"/>
<rect x="869" y="162" width="6.6" height="6.6" fill="#00ff2e"/>
<rect x="875" y="162" width="6.6" height="6.6" fill="#04ff2c"/>
<rect x="881" y="162" width="6.6" height="6.6" fill="#15ff2d"/>
<rect x="887" y="162" width="6.6" height="6.6" fill="#25ff2f"/>
<rect x="893" y="162" width="6.6" height="6.6" fill="#34ff31"/>
<rect x="899" y="162" width="6.6" height="6.6" fill="#40ff2d"/>
<rect x="905" y="162" width="6.6" height="6.6" fill="#4eff29"/>
<rect x="911" y="162" width="6.6" height="6.6" fill="#5eff25"/>
<rect x="917" y="162" width="6.6" height="6.6" fill="#70ff21"/>
<rect x="923" y="162" width="6.6" height="6.6" fill="#83ff1d"/>
<rect x="929" y="162" width="6.6" height="6.6" fill="#98ff18"/>
<rect x="935" y="162" width="6.6" height="6.6" fill="#aeff14"/>
<rect x="941" y="162" width="6.6" height="6.6" fill="#c5ff0f"/>
<rect x="947" y="162" width="6.6" height="6.6" fill="#deff0a"/>
<rect x="953" y="162" width="6.6" height="6.6" fill="#f9ff04"/>
<rect x="959" y="162" width="6.6" height="6.6" fill="#ffeb00"/>
<rect x="965" y="162" width="6.6" height="6.6" fill="#ffd400"/>
<rect x="971" y="162" width="6.6" height="6.6" fill="#ffc000"/>
<rect x="977" y="162" width="6.6" height="6.6" fill="#ffaf00"/>
<rect x="983" y="162" width="6.6" height="6.6" fill="#ffa000"/>
<rect x="989" y="162" width="6.6" height="6.6" fill="#ff9300"/>
<rect x="995" y="162" width="6.6" height="6.6" fill="#ff8700"/>
<rect x="1001" y="162" width="6.6" height="6.6" fill="#ff7c00"/>
<rect x="1007" y="162" width="6.6" height="6.6" fill="#ff7200"/>
<rect x="1013" y="162" width="6.6" height="6.6" fill="#ff6a00"/>
<rect x="1019" y="162" width="6.6" height="6.6" fill="#ff6200"/>
<rect x="1025" y="162" width="6.6" height="6.6" fill="#ff5b00"/>
<rect x="719" y="168" width="6.6" height="6.6" fill="#00ff6c"/>
<rect x="725" y="168" width="6.6" height="6.6" fill="#00ff6b"/>
<rect x="731" y="168" width="6.6" height="6.6" fill="#00ff69"/>
<rect x="737" y="168" width="6.6" height="6.6" fill="#00ff67"/>
<rect x="743" y="168" width="6.6" height="6.6" fill="#00ff66"/>
<rect x="749" y="168" width="6.6" height="6.6" fill="#00ff64"/>
<rect x="755" y="168" width="6.6" height="6.6" fill="#00ff62"/>
<rect x="761" y="168" width="6.6" height="6.6" fill="#00ff60"/>
<rect x="767" y="168" width="6.6" height="6.6" fill="#00ff5f"/>
<rect x="773" y="168" width="6.6" height="6.6" fill="#00ff5d"/>
<rect x="779" y="168" width="6.6" height="6.6" fill="#00ff5b"/>
<rect x="785" y="168" width="6.6" height="6.6" fill="#00ff59"/>
<rect x="791" y="168" width="6.6" height="6.6" fill="#00ff57"/>
<rect x="797" y="168" width="6.6" height="6.6" fill="#00ff55"/>
<rect x="803" y="168" width="6.6" height="6.6" fill="#00ff53"/>
<rect x="809" y="168" width="6.6" height="6.6" fill="#00ff50"/>
<rect x="815" y="168" width="6.6" height="6.6" fill="#00ff4e"/>
<rect x="821" y="168" width="6.6" height="6.6" fill="#00ff4c"/>
<rect x="827" y="168" width="6.6" height="6.6" fill="#00ff49"/>
<rect x="833" y="168" width="6.6" height="6.6" fill="#00ff47"/>
<rect x="839" y="168" width="6.6" height="6.6" fill="#00ff45"/>
<rect x="845" y="168" width="6.6" height="6.6" fill="#00ff42"/>
<rect x="851" y="168" width="6.6" height="6.6" fill="#00ff3f"/>
<rect x="857" y="168" width="6.6" height="6.6" fill="#00ff3d"/>
<rect x="863" y="168" width="6.6" height="6.6" fill="#00ff3a"/>
<rect x="869" y="168" width="6.6" height="6.6" fill="#00ff37"/>
<rect x="875" y="168" width="6.6" height="6.6" fill="#0bff37"/>
<rect x="881" y="168" width="6.6" height="6.6" fill="#1cff37"/>
<rect x="887" y="168" width="6.6" height="6.6" fill="#2eff38"/>
<rect x="893" y="168" width="6.6" height="6.6" fill="#3dff3b"/>
<rect x="899" y="168" width="6.6" height="6.6" fill="#4aff37"/>
<rect x="905" y="168" width="6.6" height="6.6" fill="#59ff33"/>
<rect x="911" y="168" width="6.6" height="6.6" fill="#6aff30"/>
<rect x="917" y="168" width="6.6" height="6.6" fill="#7dff2c"/>
<rect x="923" y="168" width="6.6" height="6.6" fill="#92ff27"/>
<rect x="929" y="168" width="6.6" height="6.6" fill="#a8ff23"/>
<rect x="935" y="168" width="6.6" height="6.6" fill="#c0ff1e"/>
<rect x="941" y="168" width="6.6" height="6.6" fill="#d9ff19"/>
<rect x="947" y="168" width="6.6" height="6.6" fill="#f4ff14"/>
<rect x="953" y="168" width="6.6" height="6.6" fill="#ffee0e"/>
<rect x="959" y="168" width="6.6" height="6.6" fill="#ffd608"/>
<rect x="965" y="168" width="6.6" height="6.6" fill="#ffc202"/>
<rect x="971" y="168" width="6.6" height="6.6" fill="#ffb000"/>
<rect x="977" y="168" width="6.6" height="6.6" fill="#ffa000"/>
<rect x="983" y="168" width="6.6" height="6.6" fill="#ff9200"/>
<rect x="989" y="168" width="6.6" height="6.6" fill="#ff8600"/>
<rect x="995" y="168" width="6.6" height="6.6" fill="#ff7b00"/>
<rect x="1001" y="168" width="6.6" height="6.6" fill="#ff7100"/>
<rect x="1007" y="168" width="6.6" height="6.6" fill="#ff6800"/>
<rect x="1013" y="168" width="6.6" height="6.6" fill="#ff6000"/>
<rect x="1019" y="168" width="6.6" height="6.6" fill="#ff5900"/>
<rect x="1025" y="168" width="6.6" height="6.6" fill="#ff5200"/>
<rect x="1031" y="168" width="6.6" height="6.6" fill="#ff4c00"/>
<rect x="1037" y="168" width="6.6" height="6.6" fill="#ff4600"/>
<rect x="719" y="174" width="6.6" height="6.6" fill="#00ff75"/>
<rect x="725" y="174" width="6.6" height="6.6" fill="#00ff74"/>
<rect x="731" y="174" width="6.6" height="6.6" fill="#00ff72"/>
<rect x="737" y="174" width="6.6" height="6.6" fill="#00ff71"/>
<rect x="743" y="174" width="6.6" height="6.6" fill="#00ff6f"/>
<rect x="749" y="174" width="6.6" height="6.6" fill="#00ff6d"/>
<rect x="755" y="174" width="6.6" height="6.6" fill="#00ff6c"/>
<rect x="761" y="174" width="6.6" height="6.6" fill="#00ff6a"/>
<rect x="767" y="174" width="6.6" height="6.6" fill="#00ff68"/>
<rect x="773" y="174" width="6.6" height="6.6" fill="#00ff66"/>
<rect x="779" y="174" width="6.6" height="6.6" fill="#00ff64"/>
<rect x="785" y="174" width="6.6" height="6.6" fill="#00ff62"/>
<rect x="791" y="174" width="6.6" height="6.6" fill="#00ff60"/>
<rect x="797" y="174" width="6.6" height="6.6" fill="#00ff5e"/>
<rect x="803" y="174" width="6.6" height="6.6" fill="#00ff5c"/>
<rect x="809" y="174" width="6.6" height="6.6" fill="#00ff5a"/>
<rect x="815" y="174" width="6.6" height="6.6" fill="#00ff58"/>
<rect x="821" y="174" width="6.6" height="6.6" fill="#00ff56"/>
<rect x="827" y="174" width="6.6" height="6.6" fill="#00ff53"/>
<rect x="833" y="174" width="6.6" height="6.6" fill="#00ff51"/>
<rect x="839" y="174" width="6.6" height="6.6" fill="#00ff4f"/>
<rect x="845" y="174" width="6.6" height="6.6" fill="#00ff4c"/>
<rect x="851" y="174" width="6.6" height="6.6" fill="#00ff49"/>
<rect x="857" y="174" width="6.6" height="6.6" fill="#00ff47"/>
<rect x="863" y="174" width="6.6" height="6.6" fill="#00ff44"/>
<rect x="869" y="174" width="6.6" height="6.6" fill="#00ff41"/>
<rect x="875" y="174" width="6.6" height="6.6" fill="#12ff42"/>
<rect x="881" y="174" width="6.6" height="6.6" fill="#24ff42"/>
<rect x="887" y="174" width="6.6" height="6.6" fill="#36ff43"/>
<rect x="893" y="174" width="6.6" height="6.6" fill="#47ff46"/>
<rect x="899" y="174" width="6.6" height="6.6" fill="#54ff42"/>
<rect x="905" y="174" width="6.6" height="6.6" fill="#65ff3e"/>
<rect x="911" y="174" width="6.6" height="6.6" fill="#77ff3b"/>
<rect x="917" y="174" width="6.6" height="6.6" fill="#8cff37"/>
<rect x="923" y="174" width="6.6" height="6.6" fill="#a2ff32"/>
<rect x="929" y="174" width="6.6" height="6.6" fill="#baff2e"/>
<rect x="935" y="174" width="6.6" height="6.6" fill="#d4ff29"/>
<rect x="941" y="174" width="6.6" height="6.6" fill="#efff25"/>
<rect x="947" y="174" width="6.6" height="6.6" fill="#fff21e"/>
<rect x="953" y="174" width="6.6" height="6.6" fill="#ffd917"/>
<rect x="959" y="174" width="6.6" height="6.6" fill="#ffc310"/>
<rect x="965" y="174" width="6.6" height="6.6" fill="#ffb10b"/>
<rect x="971" y="174" width="6.6" height="6.6" fill="#ffa006"/>
<rect x="977" y="174" width="6.6" height="6.6" fill="#ff9201"/>
<rect x="983" y="174" width="6.6" height="6.6" fill="#ff8500"/>
<rect x="989" y="174" width="6.6" height="6.6" fill="#ff7a00"/>
<rect x="995" y="174" width="6.6" height="6.6" fill="#ff7000"/>
<rect x="1001" y="174" width="6.6" height="6.6" fill="#ff6700"/>
<rect x="1007" y="174" width="6.6" height="6.6" fill="#ff5e00"/>
<rect x="1013" y="174" width="6.6" height="6.6" fill="#ff5700"/>
<rect x="1019" y="174" width="6.6" height="6.6" fill="#ff5000"/>
<rect x="1025" y="174" width="6.6" height="6.6" fill="#ff4a00"/>
<rect x="1031" y="174" width="6.6" height="6.6" fill="#ff4500"/>
<rect x="1037" y="174" width="6.6" height="6.6" fill="#ff3f00"/>
<rect x="1043" y="174" width="6.6" height="6.6" fill="#ff3b00"/>
<rect x="719" y="180" width="6.6" height="6.6" fill="#00ff7f"/>
<rect x="725" y="180" width="6.6" height="6.6" fill="#00ff7e"/>
<rect x="731" y="180" width="6.6" height="6.6" fill="#00ff7c"/>
<rect x="737" y="180" width="6.6" height="6.6" fill="#00ff7b"/>
<rect x="743" y="180" width="6.6" height="6.6" fill="#00ff79"/>
<rect x="749" y="180" width="6.6" height="6.6" fill="#00ff78"/>
<rect x="755" y="180" width="6.6" height="6.6" fill="#00ff76"/>
<rect x="761" y="180" width="6.6" height="6.6" fill="#00ff74"/>
<rect x="767" y="180" width="6.6" height="6.6" fill="#00ff73"/>
<rect x="773" y="180" width="6.6" height="6.6" fill="#00ff71"/>
<rect x="779" y="180" width="6.6" height="6.6" fill="#00ff6f"/>
<rect x="785" y="180" width="6.6" height="6.6" fill="#00ff6d"/>
<rect x="791" y="180" width="6.6" height="6.6" fill="#00ff6b"/>
<rect x="797" y="180" width="6.6" height="6.6" fill="#00ff69"/>
<rect x="803" y="180" width="6.6" height="6.6" fill="#00ff67"/>
<rect x="809" y="180" width="6.6" height="6.6" fill="#00ff65"/>
<rect x="815" y="180" width="6.6" height="6.6" fill="#00ff63"/>
<rect x="821" y="180" width="6.6" height="6.6" fill="#00ff61"/>
<rect x="827" y="180" width="6.6" height="6.6" fill="#00ff5e"/>
<rect x="833" y="180" width="6.6" height="6.6" fill="#00ff5c"/>
<rect x="839" y="180" width="6.6" height="6.6" fill="#00ff59"/>
<rect x="845" y="180" width="6.6" height="6.6" fill="#00ff57"/>
<rect x="851" y="180" width="6.6" height="6.6" fill="#00ff54"/>
<rect x="857" y="180" width="6.6" height="6.6" fill="#00ff52"/>
<rect x="863" y="180" width="6.6" height="6.6" fill="#00ff4f"/>
<rect x="869" y="180" width="6.6" height="6.6" fill="#07ff4d"/>
<rect x="875" y="180" width="6.6" height="6.6" fill="#1aff4d"/>
<rect x="881" y="180" width="6.6" height="6.6" fill="#2dff4d"/>
<rect x="887" y="180" width="6.6" height="6.6" fill="#40ff4e"/>
<rect x="893" y="180" width="6.6" height="6.6" fill="#52ff51"/>
<rect x="899" y="180" width="6.6" height="6.6" fill="#60ff4e"/>
<rect x="905" y="180" width="6.6" height="6.6" fill="#72ff4a"/>
<rect x="911" y="180" width="6.6" height="6.6" fill="#86ff47"/>
<rect x="917" y="180" width="6.6" height="6.6" fill="#9cff43"/>
<rect x="923" y="180" width="6.6" height="6.6" fill="#b4ff3f"/>
<rect x="929" y="180" width="6.6" height="6.6" fill="#ceff3a"/>
<rect x="935" y="180" width="6.6" height="6.6" fill="#eaff36"/>
<rect x="941" y="180" width="6.6" height="6.6" fill="#fff630"/>
<rect x="947" y="180" width="6.6" height="6.6" fill="#ffdc27"/>
<rect x="953" y="180" width="6.6" height="6.6" fill="#ffc51f"/>
<rect x="959" y="180" width="6.6" height="6.6" fill="#ffb219"/>
<rect x="965" y="180" width="6.6" height="6.6" fill="#ffa113"/>
<rect x="971" y="180" width="6.6" height="6.6" fill="#ff920d"/>
<rect x="977" y="180" width="6.6" height="6.6" fill="#ff8508"/>
<rect x="983" y="180" width="6.6" height="6.6" fill="#ff7904"/>
<rect x="989" y="180" width="6.6" height="6.6" fill="#ff6e00"/>
<rect x="995" y="180" width="6.6" height="6.6" fill="#ff6500"/>
<rect x="1001" y="180" width="6.6" height="6.6" fill="#ff5d00"/>
<rect x="1007" y="180" width="6.6" height="6.6" fill="#ff5500"/>
<rect x="1013" y="180" width="6.6" height="6.6" fill="#ff4e00"/>
<rect x="1019" y="180" width="6.6" height="6.6" fill="#ff4800"/>
<rect x="1025" y="180" width="6.6" height="6.6" fill="#ff4200"/>
<rect x="1031" y="180" width="6.6" height="6.6" fill="#ff3d00"/>
<rect x="1037" y="180" width="6.6" height="6.6" fill="#ff3800"/>
<rect x="1043" y="180" width="6.6" height="6.6" fill="#ff3400"/>
<rect x="1049" y="180" width="6.6" height="6.6" fill="#ff3000"/>
<rect x="1055" y="180" width="6.6" height="6.6" fill="#ff2c00"/>
<rect x="719" y="186" width="6.6" height="6.6" fill="#00ff8a"/>
<rect x="725" y="186" width="6.6" height="6.6" fill="#00ff89"/>
<rect x="731" y="186" width="6.6" height="6.6" fill="#00ff87"/>
<rect x="737" y="186" width="6.6" height="6.6" fill="#00ff86"/>
<rect x="743" y="186" width="6.6" height="6.6" fill="#00ff84"/>
<rect x="749" y="186" width="6.6" height="6.6" fill="#00ff83"/>
<rect x="755" y="186" width="6.6" height="6.6" fill="#00ff81"/>
<rect x="761" y="186" width="6.6" height="6.6" fill="#00ff7f"/>
<rect x="767" y="186" width="6.6" height="6.6" fill="#00ff7e"/>
<rect x="773" y="186" width="6.6" height="6.6" fill="#00ff7c"/>
<rect x="779" y="186" width="6.6" height="6.6" fill="#00ff7a"/>
<rect x="785" y="186" width="6.6" height="6.6" fill="#00ff78"/>
<rect x="791" y="186" width="6.6" height="6.6" fill="#00ff77"/>
<rect x="797" y="186" width="6.6" height="6.6" fill="#00ff75"/>
<rect x="803" y="186" width="6.6" height="6.6" fill="#00ff73"/>
<rect x="809" y="186" width="6.6" height="6.6" fill="#00ff71"/>
<rect x="815" y="186" width="6.6" height="6.6" fill="#00ff6f"/>
<rect x="821" y="186" width="6.6" height="6.6" fill="#00ff6c"/>
<rect x="827" y="186" width="6.6" height="6.6" fill="#00ff6a"/>
<rect x="833" y="186" width="6.6" height="6.6" fill="#00ff68"/>
<rect x="839" y="186" width="6.6" height="6.6" fill="#00ff66"/>
<rect x="845" y="186" width="6.6" height="6.6" fill="#00ff63"/>
<rect x="851" y="186" width="6.6" height="6.6" fill="#00ff61"/>
<rect x="857" y="186" width="6.6" height="6.6" fill="#00ff5e"/>
<rect x="863" y="186" width="6.6" height="6.6" fill="#00ff5b"/>
<rect x="869" y="186" width="6.6" height="6.6" fill="#0fff5b"/>
<rect x="875" y="186" width="6.6" height="6.6" fill="#22ff5a"/>
<rect x="881" y="186" width="6.6" height="6.6" fill="#36ff5a"/>
<rect x="887" y="186" width="6.6" height="6.6" fill="#4aff5b"/>
<rect x="893" y="186" width="6.6" height="6.6" fill="#5eff5e"/>
<rect x="899" y="186" width="6.6" height="6.6" fill="#6dff5b"/>
<rect x="905" y="186" width="6.6" height="6.6" fill="#80ff57"/>
<rect x="911" y="186" width="6.6" height="6.6" fill="#96ff54"/>
<rect x="917" y="186" width="6.6" height="6.6" fill="#aeff50"/>
<rect x="923" y="186" width="6.6" height="6.6" fill="#c8ff4c"/>
<rect x="929" y="186" width="6.6" height="6.6" fill="#e5ff48"/>
<rect x="935" y="186" width="6.6" height="6.6" fill="#fffb42"/>
<rect x="941" y="186" width="6.6" height="6.6" fill="#ffdf38"/>
<rect x="947" y="186" width="6.6" height="6.6" fill="#ffc72f"/>
<rect x="953" y="186" width="6.6" height="6.6" fill="#ffb327"/>
<rect x="959" y="186" width="6.6" height="6.6" fill="#ffa220"/>
<rect x="965" y="186" width="6.6" height="6.6" fill="#ff921a"/>
<rect x="971" y="186" width="6.6" height="6.6" fill="#ff8514"/>
<rect x="977" y="186" width="6.6" height="6.6" fill="#ff790f"/>
<rect x="983" y="186" width="6.6" height="6.6" fill="#ff6e0b"/>
<rect x="989" y="186" width="6.6" height="6.6" fill="#ff6406"/>
<rect x="995" y="186" width="6.6" height="6.6" fill="#ff5b03"/>
<rect x="1001" y="186" width="6.6" height="6.6" fill="#ff5300"/>
<rect x="1007" y="186" width="6.6" height="6.6" fill="#ff4c00"/>
<rect x="1013" y="186" width="6.6" height="6.6" fill="#ff4600"/>
<rect x="1019" y="186" width="6.6" height="6.6" fill="#ff4000"/>
<rect x="1025" y="186" width="6.6" height="6.6" fill="#ff3b00"/>
<rect x="1031" y="186" width="6.6" height="6.6" fill="#ff3600"/>
<rect x="1037" y="186" width="6.6" height="6.6" fill="#ff3200"/>
<rect x="1043" y="186" width="6.6" height="6.6" fill="#ff2e00"/>
<rect x="1049" y="186" width="6.6" height="6.6" fill="#ff2a00"/>
<rect x="1055" y="186" width="6.6" height="6.6" fill="#ff2700"/>
<rect x="1061" y="186" width="6.6" height="6.6" fill="#ff2300"/>
<rect x="725" y="192" width="6.6" height="6.6" fill="#00ff94"/>
<rect x="731" y="192" width="6.6" height="6.6" fill="#00ff93"/>
<rect x="737" y="192" width="6.6" height="6.6" fill="#00ff91"/>
<rect x="743" y="192" width="6.6" height="6.6" fill="#00ff90"/>
<rect x="749" y="192" width="6.6" height="6.6" fill="#00ff8f"/>
<rect x="755" y="192" width="6.6" height="6.6" fill="#00ff8d"/>
<rect x="761" y="192" width="6.6" height="6.6" fill="#00ff8c"/>
<rect x="767" y="192" width="6.6" height="6.6" fill="#00ff8a"/>
<rect x="773" y="192" width="6.6" height="6.6" fill="#00ff88"/>
<rect x="779" y="192" width="6.6" height="6.6" fill="#00ff87"/>
<rect x="785" y="192" width="6.6" height="6.6" fill="#00ff85"/>
<rect x="791" y="192" width="6.6" height="6.6" fill="#00ff83"/>
<rect x="797" y="192" width="6.6" height="6.6" fill="#00ff81"/>
<rect x="803" y="192" width="6.6" height="6.6" fill="#00ff7f"/>
<rect x="809" y="192" width="6.6" height="6.6" fill="#00ff7e"/>
<rect x="815" y="192" width="6.6" height="6.6" fill="#00ff7c"/>
<rect x="821" y="192" width="6.6" height="6.6" fill="#00ff79"/>
<rect x="827" y="192" width="6.6" height="6.6" fill="#00ff77"/>
<rect x="833" y="192" width="6.6" height="6.6" fill="#00ff75"/>
<rect x="839" y="192" width="6.6" height="6.6" fill="#00ff73"/>
<rect x="845" y="192" width="6.6" height="6.6" fill="#00ff71"/>
<rect x="851" y="192" width="6.6" height="6.6" fill="#00ff6e"/>
<rect x="857" y="192" width="6.6" height="6.6" fill="#00ff6c"/>
<rect x="863" y="192" width="6.6" height="6.6" fill="#03ff69"/>
<rect x="869" y="192" width="6.6" height="6.6" fill="#17ff69"/>
<rect x="875" y="192" width="6.6" height="6.6" fill="#2cff68"/>
<rect x="881" y="192" width="6.6" height="6.6" fill="#40ff68"/>
<rect x="887" y="192" width="6.6" height="6.6" fill="#55ff68"/>
<rect x="893" y="192" width="6.6" height="6.6" fill="#6bff6c"/>
<rect x="899" y="192" width="6.6" height="6.6" fill="#7bff69"/>
<rect x="905" y="192" width="6.6" height="6.6" fill="#90ff66"/>
<rect x="911" y="192" width="6.6" height="6.6" fill="#a8ff62"/>
<rect x="917" y="192" width="6.6" height="6.6" fill="#c2ff5f"/>
<rect x="923" y="192" width="6.6" height="6.6" fill="#dfff5b"/>
<rect x="929" y="192" width="6.6" height="6.6" fill="#feff57"/>
<rect x="935" y="192" width="6.6" height="6.6" fill="#ffe24a"/>
<rect x="941" y="192" width="6.6" height="6.6" fill="#ffc940"/>
<rect x="947" y="192" width="6.6" height="6.6" fill="#ffb436"/>
<rect x="953" y="192" width="6.6" height="6.6" fill="#ffa22e"/>
<rect x="959" y="192" width="6.6" height="6.6" fill="#ff9227"/>
<rect x="965" y="192" width="6.6" height="6.6" fill="#ff8521"/>
<rect x="971" y="192" width="6.6" height="6.6" fill="#ff781b"/>
<rect x="977" y="192" width="6.6" height="6.6" fill="#ff6d16"/>
<rect x="983" y="192" width="6.6" height="6.6" fill="#ff6411"/>
<rect x="989" y="192" width="6.6" height="6.6" fill="#ff5b0d"/>
<rect x="995" y="192" width="6.6" height="6.6" fill="#ff5309"/>
<rect x="1001" y="192" width="6.6" height="6.6" fill="#ff4b05"/>
<rect x="1007" y="192" width="6.6" height="6.6" fill="#ff4401"/>
<rect x="1013" y="192" width="6.6" height="6.6" fill="#ff3e00"/>
<rect x="1019" y="192" width="6.6" height="6.6" fill="#ff3900"/>
<rect x="1025" y="192" width="6.6" height="6.6" fill="#ff3400"/>
<rect x="1031" y="192" width="6.6" height="6.6" fill="#ff3000"/>
<rect x="1037" y="192" width="6.6" height="6.6" fill="#ff2c00"/>
<rect x="1043" y="192" width="6.6" height="6.6" fill="#ff2800"/>
<rect x="1049" y="192" width="6.6" height="6.6" fill="#ff2400"/>
<rect x="1055" y="192" width="6.6" height="6.6" fill="#ff2100"/>
<rect x="1061" y="192" width="6.6" height="6.6" fill="#ff1e00"/>
<rect x="1067" y="192" width="6.6" height="6.6" fill="#ff1c00"/>
<rect x="725" y="198" width="6.6" height="6.6" fill="#00ffa1"/>
<rect x="731" y="198" width="6.6" height="6.6" fill="#00ff9f"/>
<rect x="737" y="198" width="6.6" height="6.6" fill="#00ff9e"/>
<rect x="743" y="198" width="6.6" height="6.6" fill="#00ff9d"/>
<rect x="749" y="198" width="6.6" height="6.6" fill="#00ff9c"/>
<rect x="755" y="198" width="6.6" height="6.6" fill="#00ff9a"/>
<rect x="761" y="198" width="6.6" height="6.6" fill="#00ff99"/>
<rect x="767" y="198" width="6.6" height="6.6" fill="#00ff97"/>
<rect x="773" y="198" width="6.6" height="6.6" fill="#00ff96"/>
<rect x="779" y="198" width="6.6" height="6.6" fill="#00ff94"/>
<rect x="785" y="198" width="6.6" height="6.6" fill="#00ff93"/>
<rect x="791" y="198" width="6.6" height="6.6" fill="#00ff91"/>
<rect x="797" y="198" width="6.6" height="6.6" fill="#00ff8f"/>
<rect x="803" y="198" width="6.6" height="6.6" fill="#00ff8e"/>
<rect x="809" y="198" width="6.6" height="6.6" fill="#00ff8c"/>
<rect x="815" y="198" width="6.6" height="6.6" fill="#00ff8a"/>
<rect x="821" y="198" width="6.6" height="6.6" fill="#00ff88"/>
<rect x="827" y="198" width="6.6" height="6.6" fill="#00ff86"/>
<rect x="833" y="198" width="6.6" height="6.6" fill="#00ff84"/>
<rect x="839" y="198" width="6.6" height="6.6" fill="#00ff82"/>
<rect x="845" y="198" width="6.6" height="6.6" fill="#00ff80"/>
<rect x="851" y="198" width="6.6" height="6.6" fill="#00ff7d"/>
<rect x="857" y="198" width="6.6" height="6.6" fill="#00ff7b"/>
<rect x="863" y="198" width="6.6" height="6.6" fill="#0bff7a"/>
<rect x="869" y="198" width="6.6" height="6.6" fill="#20ff79"/>
<rect x="875" y="198" width="6.6" height="6.6" fill="#36ff78"/>
<rect x="881" y="198" width="6.6" height="6.6" fill="#4bff78"/>
<rect x="887" y="198" width="6.6" height="6.6" fill="#62ff78"/>
<rect x="893" y="198" width="6.6" height="6.6" fill="#79ff7b"/>
<rect x="899" y="198" width="6.6" height="6.6" fill="#8bff79"/>
<rect x="905" y="198" width="6.6" height="6.6" fill="#a2ff76"/>
<rect x="911" y="198" width="6.6" height="6.6" fill="#bcff73"/>
<rect x="917" y="198" width="6.6" height="6.6" fill="#d9ff6f"/>
<rect x="923" y="198" width="6.6" height="6.6" fill="#f9ff6b"/>
<rect x="929" y="198" width="6.6" height="6.6" fill="#ffe55f"/>
<rect x="935" y="198" width="6.6" height="6.6" fill="#ffcb52"/>
<rect x="941" y="198" width="6.6" height="6.6" fill="#ffb547"/>
<rect x="947" y="198" width="6.6" height="6.6" fill="#ffa33e"/>
<rect x="953" y="198" width="6.6" height="6.6" fill="#ff9235"/>
<rect x="959" y="198" width="6.6" height="6.6" fill="#ff842e"/>
<rect x="965" y="198" width="6.6" height="6.6" fill="#ff7827"/>
<rect x="971" y="198" width="6.6" height="6.6" fill="#ff6d21"/>
<rect x="977" y="198" width="6.6" height="6.6" fill="#ff631c"/>
<rect x="983" y="198" width="6.6" height="6.6" fill="#ff5a17"/>
<rect x="989" y="198" width="6.6" height="6.6" fill="#ff5213"/>
<rect x="995" y="198" width="6.6" height="6.6" fill="#ff4a0f"/>
<rect x="1001" y="198" width="6.6" height="6.6" fill="#ff440b"/>
<rect x="1007" y="198" width="6.6" height="6.6" fill="#ff3d07"/>
<rect x="1013" y="198" width="6.6" height="6.6" fill="#ff3704"/>
<rect x="1019" y="198" width="6.6" height="6.6" fill="#ff3200"/>
<rect x="1025" y="198" width="6.6" height="6.6" fill="#ff2d00"/>
<rect x="1031" y="198" width="6.6" height="6.6" fill="#ff2900"/>
<rect x="1037" y="198" width="6.6" height="6.6" fill="#ff2600"/>
<rect x="1043" y="198" width="6.6" height="6.6" fill="#ff2200"/>
<rect x="1049" y="198" width="6.6" height="6.6" fill="#ff1f00"/>
<rect x="1055" y="198" width="6.6" height="6.6" fill="#ff1c00"/>
<rect x="1061" y="198" width="6.6" height="6.6" fill="#ff1900"/>
<rect x="1067" y="198" width="6.6" height="6.6" fill="#ff1700"/>
<rect x="1073" y="198" width="6.6" height="6.6" fill="#ff1500"/>
<rect x="725" y="204" width="6.6" height="6.6" fill="#00ffae"/>
<rect x="731" y="204" width="6.6" height="6.6" fill="#00ffad"/>
<rect x="737" y="204" width="6.6" height="6.6" fill="#00ffac"/>
<rect x="743" y="204" width="6.6" height="6.6" fill="#00ffab"/>
<rect x="749" y="204" width="6.6" height="6.6" fill="#00ffaa"/>
<rect x="755" y="204" width="6.6" height="6.6" fill="#00ffa8"/>
<rect x="761" y="204" width="6.6" height="6.6" fill="#00ffa7"/>
<rect x="767" y="204" width="6.6" height="6.6" fill="#00ffa6"/>
<rect x="773" y="204" width="6.6" height="6.6" fill="#00ffa5"/>
<rect x="779" y="204" width="6.6" height="6.6" fill="#00ffa3"/>
<rect x="785" y="204" width="6.6" height="6.6" fill="#00ffa2"/>
<rect x="791" y="204" width="6.6" height="6.6" fill="#00ffa0"/>
<rect x="797" y="204" width="6.6" height="6.6" fill="#00ff9f"/>
<rect x="803" y="204" width="6.6" height="6.6" fill="#00ff9d"/>
<rect x="809" y="204" width="6.6" height="6.6" fill="#00ff9b"/>
<rect x="815" y="204" width="6.6" height="6.6" fill="#00ff9a"/>
<rect x="821" y="204" width="6.6" height="6.6" fill="#00ff98"/>
<rect x="827" y="204" width="6.6" height="6.6" fill="#00ff96"/>
<rect x="833" y="204" width="6.6" height="6.6" fill="#00ff94"/>
<rect x="839" y="204" width="6.6" height="6.6" fill="#00ff92"/>
<rect x="845" y="204" width="6.6" height="6.6" fill="#00ff90"/>
<rect x="851" y="204" width="6.6" height="6.6" fill="#00ff8e"/>
<rect x="857" y="204" width="6.6" height="6.6" fill="#00ff8c"/>
<rect x="863" y="204" width="6.6" height="6.6" fill="#14ff8b"/>
<rect x="869" y="204" width="6.6" height="6.6" fill="#2aff8a"/>
<rect x="875" y="204" width="6.6" height="6.6" fill="#41ff8a"/>
<rect x="881" y="204" width="6.6" height="6.6" fill="#58ff89"/>
<rect x="887" y="204" width="6.6" height="6.6" fill="#70ff89"/>
<rect x="893" y="204" width="6.6" height="6.6" fill="#88ff8b"/>
<rect x="899" y="204" width="6.6" height="6.6" fill="#9cff8b"/>
<rect x="905" y="204" width="6.6" height="6.6" fill="#b6ff88"/>
<rect x="911" y="204" width="6.6" height="6.6" fill="#d3ff85"/>
<rect x="917" y="204" width="6.6" height="6.6" fill="#f3ff81"/>
<rect x="923" y="204" width="6.6" height="6.6" fill="#ffe975"/>
<rect x="929" y="204" width="6.6" height="6.6" fill="#ffce66"/>
<rect x="935" y="204" width="6.6" height="6.6" fill="#ffb759"/>
<rect x="941" y="204" width="6.6" height="6.6" fill="#ffa34e"/>
<rect x="947" y="204" width="6.6" height="6.6" fill="#ff9344"/>
<rect x="953" y="204" width="6.6" height="6.6" fill="#ff843c"/>
<rect x="959" y="204" width="6.6" height="6.6" fill="#ff7734"/>
<rect x="965" y="204" width="6.6" height="6.6" fill="#ff6c2d"/>
<rect x="971" y="204" width="6.6" height="6.6" fill="#ff6227"/>
<rect x="977" y="204" width="6.6" height="6.6" fill="#ff5922"/>
<rect x="983" y="204" width="6.6" height="6.6" fill="#ff511d"/>
<rect x="989" y="204" width="6.6" height="6.6" fill="#ff4a18"/>
<rect x="995" y="204" width="6.6" height="6.6" fill="#ff4314"/>
<rect x="1001" y="204" width="6.6" height="6.6" fill="#ff3d10"/>
<rect x="1007" y="204" width="6.6" height="6.6" fill="#ff370c"/>
<rect x="1013" y="204" width="6.6" height="6.6" fill="#ff3109"/>
<rect x="1019" y="204" width="6.6" height="6.6" fill="#ff2c06"/>
<rect x="1025" y="204" width="6.6" height="6.6" fill="#ff2803"/>
<rect x="1031" y="204" width="6.6" height="6.6" fill="#ff2300"/>
<rect x="1037" y="204" width="6.6" height="6.6" fill="#ff2000"/>
<rect x="1043" y="204" width="6.6" height="6.6" fill="#ff1d00"/>
<rect x="1049" y="204" width="6.6" height="6.6" fill="#ff1a00"/>
<rect x="1055" y="204" width="6.6" height="6.6" fill="#ff1700"/>
<rect x="1061" y="204" width="6.6" height="6.6" fill="#ff1500"/>
<rect x="1067" y="204" width="6.6" height="6.6" fill="#ff1200"/>
<rect x="1073" y="204" width="6.6" height="6.6" fill="#ff1000"/>
<rect x="1079" y="204" width="6.6" height="6.6" fill="#ff0e00"/>
<rect x="725" y="210" width="6.6" height="6.6" fill="#00ffbd"/>
<rect x="731" y="210" width="6.6" height="6.6" fill="#00ffbc"/>
<rect x="737" y="210" width="6.6" height="6.6" fill="#00ffbb"/>
<rect x="743" y="210" width="6.6" height="6.6" fill="#00ffba"/>
<rect x="749" y="210" width="6.6" height="6.6" fill="#00ffb9"/>
<rect x="755" y="210" width="6.6" height="6.6" fill="#00ffb8"/>
<rect x="761" y="210" width="6.6" height="6.6" fill="#00ffb7"/>
<rect x="767" y="210" width="6.6" height="6.6" fill="#00ffb6"/>
<rect x="773" y="210" width="6.6" height="6.6" fill="#00ffb5"/>
<rect x="779" y="210" width="6.6" height="6.6" fill="#00ffb4"/>
<rect x="785" y="210" width="6.6" height="6.6" fill="#00ffb2"/>
<rect x="791" y="210" width="6.6" height="6.6" fill="#00ffb1"/>
<rect x="797" y="210" width="6.6" height="6.6" fill="#00ffb0"/>
<rect x="803" y="210" width="6.6" height="6.6" fill="#00ffae"/>
<rect x="809" y="210" width="6.6" height="6.6" fill="#00ffad"/>
<rect x="815" y="210" width="6.6" height="6.6" fill="#00ffab"/>
<rect x="821" y="210" width="6.6" height="6.6" fill="#00ffaa"/>
<rect x="827" y="210" width="6.6" height="6.6" fill="#00ffa8"/>
<rect x="833" y="210" width="6.6" height="6.6" fill="#00ffa7"/>
<rect x="839" y="210" width="6.6" height="6.6" fill="#00ffa5"/>
<rect x="845" y="210" width="6.6" height="6.6" fill="#00ffa3"/>
<rect x="851" y="210" width="6.6" height="6.6" fill="#00ffa1"/>
<rect x="857" y="210" width="6.6" height="6.6" fill="#07ffa0"/>
<rect x="863" y="210" width="6.6" height="6.6" fill="#1eff9f"/>
<rect x="869" y="210" width="6.6" height="6.6" fill="#35ff9e"/>
<rect x="875" y="210" width="6.6" height="6.6" fill="#4dff9d"/>
<rect x="881" y="210" width="6.6" height="6.6" fill="#66ff9d"/>
<rect x="887" y="210" width="6.6" height="6.6" fill="#7fff9c"/>
<rect x="893" y="210" width="6.6" height="6.6" fill="#99ff9e"/>
<rect x="899" y="210" width="6.6" height="6.6" fill="#b0ff9e"/>
<rect x="905" y="210" width="6.6" height="6.6" fill="#cdff9c"/>
<rect x="911" y="210" width="6.6" height="6.6" fill="#edff99"/>
<rect x="917" y="210" width="6.6" height="6.6" fill="#ffee8d"/>
<rect x="923" y="210" width="6.6" height="6.6" fill="#ffd07b"/>
<rect x="929" y="210" width="6.6" height="6.6" fill="#ffb86c"/>
<rect x="935" y="210" width="6.6" height="6.6" fill="#ffa45f"/>
<rect x="941" y="210" width="6.6" height="6.6" fill="#ff9354"/>
<rect x="947" y="210" width="6.6" height="6.6" fill="#ff844b"/>
<rect x="953" y="210" width="6.6" height="6.6" fill="#ff7742"/>
<rect x="959" y="210" width="6.6" height="6.6" fill="#ff6c3a"/>
<rect x="965" y="210" width="6.6" height="6.6" fill="#ff6133"/>
<rect x="971" y="210" width="6.6" height="6.6" fill="#ff582d"/>
<rect x="977" y="210" width="6.6" height="6.6" fill="#ff5028"/>
<rect x="983" y="210" width="6.6" height="6.6" fill="#ff4922"/>
<rect x="989" y="210" width="6.6" height="6.6" fill="#ff421e"/>
<rect x="995" y="210" width="6.6" height="6.6" fill="#ff3c19"/>
<rect x="1001" y="210" width="6.6" height="6.6" fill="#ff3615"/>
<rect x="1007" y="210" width="6.6" height="6.6" fill="#ff3112"/>
<rect x="1013" y="210" width="6.6" height="6.6" fill="#ff2c0e"/>
<rect x="1019" y="210" width="6.6" height="6.6" fill="#ff270b"/>
<rect x="1025" y="210" width="6.6" height="6.6" fill="#ff2308"/>
<rect x="1031" y="210" width="6.6" height="6.6" fill="#ff1f05"/>
<rect x="1037" y="210" width="6.6" height="6.6" fill="#ff1b02"/>
<rect x="1043" y="210" width="6.6" height="6.6" fill="#ff1800"/>
<rect x="1049" y="210" width="6.6" height="6.6" fill="#ff1500"/>
<rect x="1055" y="210" width="6.6" height="6.6" fill="#ff1300"/>
<rect x="1061" y="210" width="6.6" height="6.6" fill="#ff1000"/>
<rect x="1067" y="210" width="6.6" height="6.6" fill="#ff0e00"/>
<rect x="1073" y="210" width="6.6" height="6.6" fill="#ff0c00"/>
<rect x="1079" y="210" width="6.6" height="6.6" fill="#ff0b00"/>
<rect x="1085" y="210" width="6.6" height="6.6" fill="#ff0900"/>
<rect x="1091" y="210" width="6.6" height="6.6" fill="#ff0700"/>
<rect x="731" y="216" width="12.6" height="6.6" fill="#00ffcc"/>
<rect x="743" y="216" width="6.6" height="6.6" fill="#00ffcb"/>
<rect x="749" y="216" width="6.6" height="6.6" fill="#00ffca"/>
<rect x="755" y="216" width="6.6" height="6.6" fill="#00ffc9"/>
<rect x="761" y="216" width="6.6" height="6.6" fill="#00ffc8"/>
<rect x="767" y="216" width="12.6" height="6.6" fill="#00ffc7"/>
<rect x="779" y="216" width="6.6" height="6.6" fill="#00ffc6"/>
<rect x="785" y="216" width="6.6" height="6.6" fill="#00ffc5"/>
<rect x="791" y="216" width="6.6" height="6.6" fill="#00ffc4"/>
<rect x="797" y="216" width="6.6" height="6.6" fill="#00ffc3"/>
<rect x="803" y="216" width="6.6" height="6.6" fill="#00ffc1"/>
<rect x="809" y="216" width="6.6" height="6.6" fill="#00ffc0"/>
<rect x="815" y="216" width="6.6" height="6.6" fill="#00ffbf"/>
<rect x="821" y="216" width="6.6" height="6.6" fill="#00ffbe"/>
<rect x="827" y="216" width="6.6" height="6.6" fill="#00ffbd"/>
<rect x="833" y="216" width="6.6" height="6.6" fill="#00ffbb"/>
<rect x="839" y="216" width="6.6" height="6.6" fill="#00ffba"/>
<rect x="845" y="216" width="6.6" height="6.6" fill="#00ffb9"/>
<rect x="851" y="216" width="6.6" height="6.6" fill="#00ffb7"/>
<rect x="857" y="216" width="6.6" height="6.6" fill="#11ffb6"/>
<rect x="863" y="216" width="6.6" height="6.6" fill="#29ffb5"/>
<rect x="869" y="216" width="6.6" height="6.6" fill="#42ffb5"/>
<rect x="875" y="216" width="6.6" height="6.6" fill="#5bffb4"/>
<rect x="881" y="216" width="6.6" height="6.6" fill="#75ffb3"/>
<rect x="887" y="216" width="6.6" height="6.6" fill="#90ffb3"/>
<rect x="893" y="216" width="6.6" height="6.6" fill="#adffb4"/>
<rect x="899" y="216" width="6.6" height="6.6" fill="#c7ffb5"/>
<rect x="905" y="216" width="6.6" height="6.6" fill="#e7ffb3"/>
<rect x="911" y="216" width="6.6" height="6.6" fill="#fff2a9"/>
<rect x="917" y="216" width="6.6" height="6.6" fill="#ffd394"/>
<rect x="923" y="216" width="6.6" height="6.6" fill="#ffba82"/>
<rect x="929" y="216" width="6.6" height="6.6" fill="#ffa573"/>
<rect x="935" y="216" width="6.6" height="6.6" fill="#ff9366"/>
<rect x="941" y="216" width="6.6" height="6.6" fill="#ff845a"/>
<rect x="947" y="216" width="6.6" height="6.6" fill="#ff7751"/>
<rect x="953" y="216" width="6.6" height="6.6" fill="#ff6b48"/>
<rect x="959" y="216" width="6.6" height="6.6" fill="#ff6140"/>
<rect x="965" y="216" width="6.6" height="6.6" fill="#ff5839"/>
<rect x="971" y="216" width="6.6" height="6.6" fill="#ff5033"/>
<rect x="977" y="216" width="6.6" height="6.6" fill="#ff482d"/>
<rect x="983" y="216" width="6.6" height="6.6" fill="#ff4128"/>
<rect x="989" y="216" width="6.6" height="6.6" fill="#ff3b23"/>
<rect x="995" y="216" width="6.6" height="6.6" fill="#ff351e"/>
<rect x="1001" y="216" width="6.6" height="6.6" fill="#ff301a"/>
<rect x="1007" y="216" width="6.6" height="6.6" fill="#ff2b16"/>
<rect x="1013" y="216" width="6.6" height="6.6" fill="#ff2713"/>
<rect x="1019" y="216" width="6.6" height="6.6" fill="#ff230f"/>
<rect x="1025" y="216" width="6.6" height="6.6" fill="#ff1f0c"/>
<rect x="1031" y="216" width="6.6" height="6.6" fill="#ff1b09"/>
<rect x="1037" y="216" width="6.6" height="6.6" fill="#ff1706"/>
<rect x="1043" y="216" width="6.6" height="6.6" fill="#ff1404"/>
<rect x="1049" y="216" width="6.6" height="6.6" fill="#ff1101"/>
<rect x="1055" y="216" width="6.6" height="6.6" fill="#ff0e00"/>
<rect x="1061" y="216" width="6.6" height="6.6" fill="#ff0c00"/>
<rect x="1067" y="216" width="6.6" height="6.6" fill="#ff0a00"/>
<rect x="1073" y="216" width="6.6" height="6.6" fill="#ff0900"/>
<rect x="1079" y="216" width="6.6" height="6.6" fill="#ff0700"/>
<rect x="1085" y="216" width="6.6" height="6.6" fill="#ff0600"/>
<rect x="1091" y="216" width="6.6" height="6.6" fill="#ff0400"/>
<rect x="1097" y="216" width="6.6" height="6.6" fill="#ff0300"/>
<rect x="1103" y="216" width="6.6" height="6.6" fill="#ff0200"/>
<rect x="731" y="222" width="12.6" height="6.6" fill="#00ffde"/>
<rect x="743" y="222" width="12.6" height="6.6" fill="#00ffdd"/>
<rect x="755" y="222" width="6.6" height="6.6" fill="#00ffdc"/>
<rect x="761" y="222" width="12.6" height="6.6" fill="#00ffdb"/>
<rect x="773" y="222" width="12.6" height="6.6" fill="#00ffda"/>
<rect x="785" y="222" width="6.6" height="6.6" fill="#00ffd9"/>
<rect x="791" y="222" width="12.6" height="6.6" fill="#00ffd8"/>
<rect x="803" y="222" width="6.6" height="6.6" fill="#00ffd7"/>
<rect x="809" y="222" width="6.6" height="6.6" fill="#00ffd6"/>
<rect x="815" y="222" width="6.6" height="6.6" fill="#00ffd5"/>
<rect x="821" y="222" width="12.6" height="6.6" fill="#00ffd4"/>
<rect x="833" y="222" width="6.6" height="6.6" fill="#00ffd3"/>
<rect x="839" y="222" width="6.6" height="6.6" fill="#00ffd2"/>
<rect x="845" y="222" width="6.6" height="6.6" fill="#00ffd1"/>
<rect x="851" y="222" width="6.6" height="6.6" fill="#02ffd0"/>
<rect x="857" y="222" width="6.6" height="6.6" fill="#1bffcf"/>
<rect x="863" y="222" width="6.6" height="6.6" fill="#35ffcf"/>
<rect x="869" y="222" width="6.6" height="6.6" fill="#4fffce"/>
<rect x="875" y="222" width="6.6" height="6.6" fill="#6affcd"/>
<rect x="881" y="222" width="6.6" height="6.6" fill="#87ffcd"/>
<rect x="887" y="222" width="6.6" height="6.6" fill="#a4ffcc"/>
<rect x="893" y="222" width="6.6" height="6.6" fill="#c3ffcd"/>
<rect x="899" y="222" width="6.6" height="6.6" fill="#e1ffce"/>
<rect x="905" y="222" width="6.6" height="6.6" fill="#fff8c8"/>
<rect x="911" y="222" width="6.6" height="6.6" fill="#ffd6ae"/>
<rect x="917" y="222" width="6.6" height="6.6" fill="#ffbc99"/>
<rect x="923" y="222" width="6.6" height="6.6" fill="#ffa688"/>
<rect x="929" y="222" width="6.6" height="6.6" fill="#ff9478"/>
<rect x="935" y="222" width="6.6" height="6.6" fill="#ff856c"/>
<rect x="941" y="222" width="6.6" height="6.6" fill="#ff7760"/>
<rect x="947" y="222" width="6.6" height="6.6" fill="#ff6b56"/>
<rect x="953" y="222" width="6.6" height="6.6" fill="#ff614d"/>
<rect x="959" y="222" width="6.6" height="6.6" fill="#ff5845"/>
<rect x="965" y="222" width="6.6" height="6.6" fill="#ff4f3e"/>
<rect x="971" y="222" width="6.6" height="6.6" fill="#ff4838"/>
<rect x="977" y="222" width="6.6" height="6.6" fill="#ff4132"/>
<rect x="983" y="222" width="6.6" height="6.6" fill="#ff3b2d"/>
<rect x="989" y="222" width="6.6" height="6.6" fill="#ff3528"/>
<rect x="995" y="222" width="6.6" height="6.6" fill="#ff3023"/>
<rect x="1001" y="222" width="6.6" height="6.6" fill="#ff2b1f"/>
<rect x="1007" y="222" width="6.6" height="6.6" fill="#ff271b"/>
<rect x="1013" y="222" width="6.6" height="6.6" fill="#ff2217"/>
<rect x="1019" y="222" width="6.6" height="6.6" fill="#ff1e14"/>
<rect x="1025" y="222" width="6.6" height="6.6" fill="#ff1b11"/>
<rect x="1031" y="222" width="6.6" height="6.6" fill="#ff170e"/>
<rect x="1037" y="222" width="6.6" height="6.6" fill="#ff140b"/>
<rect x="1043" y="222" width="6.6" height="6.6" fill="#ff1108"/>
<rect x="1049" y="222" width="6.6" height="6.6" fill="#ff0e05"/>
<rect x="1055" y="222" width="6.6" height="6.6" fill="#ff0b03"/>
<rect x="1061" y="222" width="6.6" height="6.6" fill="#ff0800"/>
<rect x="1067" y="222" width="6.6" height="6.6" fill="#ff0700"/>
<rect x="1073" y="222" width="6.6" height="6.6" fill="#ff0500"/>
<rect x="1079" y="222" width="6.6" height="6.6" fill="#ff0400"/>
<rect x="1085" y="222" width="6.6" height="6.6" fill="#ff0300"/>
<rect x="1091" y="222" width="6.6" height="6.6" fill="#ff0100"/>
<rect x="1097" y="222" width="18.6" height="6.6" fill="#ff0000"/>
<rect x="731" y="228" width="6.6" height="6.6" fill="#00fff2"/>
<rect x="737" y="228" width="30.6" height="6.6" fill="#00fff1"/>
<rect x="767" y="228" width="24.6" height="6.6" fill="#00fff0"/>
<rect x="791" y="228" width="24.6" height="6.6" fill="#00ffef"/>
<rect x="815" y="228" width="18.6" height="6.6" fill="#00ffee"/>
<rect x="833" y="228" width="18.6" height="6.6" fill="#00ffed"/>
<rect x="851" y="228" width="6.6" height="6.6" fill="#0cffec"/>
<rect x="857" y="228" width="6.6" height="6.6" fill="#27ffec"/>
<rect x="863" y="228" width="6.6" height="6.6" fill="#43ffec"/>
<rect x="869" y="228" width="6.6" height="6.6" fill="#5fffeb"/>
<rect x="875" y="228" width="6.6" height="6.6" fill="#7cffeb"/>
<rect x="881" y="228" width="6.6" height="6.6" fill="#9bffeb"/>
<rect x="887" y="228" width="6.6" height="6.6" fill="#bbffea"/>
<rect x="893" y="228" width="6.6" height="6.6" fill="#dcffeb"/>
<rect x="899" y="228" width="6.6" height="6.6" fill="#fffeeb"/>
<rect x="905" y="228" width="6.6" height="6.6" fill="#ffdbcc"/>
<rect x="911" y="228" width="6.6" height="6.6" fill="#ffbfb3"/>
<rect x="917" y="228" width="6.6" height="6.6" fill="#ffa99e"/>
<rect x="923" y="228" width="6.6" height="6.6" fill="#ff968d"/>
<rect x="929" y="228" width="6.6" height="6.6" fill="#ff867e"/>
<rect x="935" y="228" width="6.6" height="6.6" fill="#ff7971"/>
<rect x="941" y="228" width="6.6" height="6.6" fill="#ff6d66"/>
<rect x="947" y="228" width="6.6" height="6.6" fill="#ff625c"/>
<rect x="953" y="228" width="6.6" height="6.6" fill="#ff5953"/>
<rect x="959" y="228" width="6.6" height="6.6" fill="#ff504b"/>
<rect x="965" y="228" width="6.6" height="6.6" fill="#ff4843"/>
<rect x="971" y="228" width="6.6" height="6.6" fill="#ff423d"/>
<rect x="977" y="228" width="6.6" height="6.6" fill="#ff3b37"/>
<rect x="983" y="228" width="6.6" height="6.6" fill="#ff3631"/>
<rect x="989" y="228" width="6.6" height="6.6" fill="#ff302c"/>
<rect x="995" y="228" width="6.6" height="6.6" fill="#ff2b28"/>
<rect x="1001" y="228" width="6.6" height="6.6" fill="#ff2723"/>
<rect x="1007" y="228" width="6.6" height="6.6" fill="#ff231f"/>
<rect x="1013" y="228" width="6.6" height="6.6" fill="#ff1f1c"/>
<rect x="1019" y="228" width="6.6" height="6.6" fill="#ff1b18"/>
<rect x="1025" y="228" width="6.6" height="6.6" fill="#ff1815"/>
<rect x="1031" y="228" width="6.6" height="6.6" fill="#ff1512"/>
<rect x="1037" y="228" width="6.6" height="6.6" fill="#ff120f"/>
<rect x="1043" y="228" width="6.6" height="6.6" fill="#ff0f0c"/>
<rect x="1049" y="228" width="6.6" height="6.6" fill="#ff0c09"/>
<rect x="1055" y="228" width="6.6" height="6.6" fill="#ff0907"/>
<rect x="1061" y="228" width="6.6" height="6.6" fill="#ff0705"/>
<rect x="1067" y="228" width="6.6" height="6.6" fill="#ff0402"/>
<rect x="1073" y="228" width="6.6" height="6.6" fill="#ff0200"/>
<rect x="1079" y="228" width="6.6" height="6.6" fill="#ff0100"/>
<rect x="1085" y="228" width="36.6" height="6.6" fill="#ff0000"/>
<rect x="731" y="234" width="24.6" height="6.6" fill="#00f7ff"/>
<rect x="755" y="234" width="30.6" height="6.6" fill="#00f6ff"/>
<rect x="785" y="234" width="24.6" height="6.6" fill="#00f5ff"/>
<rect x="809" y="234" width="18.6" height="6.6" fill="#00f4ff"/>
<rect x="827" y="234" width="18.6" height="6.6" fill="#00f3ff"/>
<rect x="845" y="234" width="6.6" height="6.6" fill="#00f2ff"/>
<rect x="851" y="234" width="6.6" height="6.6" fill="#17f2ff"/>
<rect x="857" y="234" width="6.6" height="6.6" fill="#32f2ff"/>
<rect x="863" y="234" width="6.6" height="6.6" fill="#4ef1ff"/>
<rect x="869" y="234" width="6.6" height="6.6" fill="#6bf1ff"/>
<rect x="875" y="234" width="6.6" height="6.6" fill="#89f1ff"/>
<rect x="881" y="234" width="6.6" height="6.6" fill="#a9f0ff"/>
<rect x="887" y="234" width="6.6" height="6.6" fill="#caf0ff"/>
<rect x="893" y="234" width="6.6" height="6.6" fill="#ecf0ff"/>
<rect x="899" y="234" width="6.6" height="6.6" fill="#ffe1ec"/>
<rect x="905" y="234" width="6.6" height="6.6" fill="#ffc4ce"/>
<rect x="911" y="234" width="6.6" height="6.6" fill="#ffadb5"/>
<rect x="917" y="234" width="6.6" height="6.6" fill="#ff99a0"/>
<rect x="923" y="234" width="6.6" height="6.6" fill="#ff888f"/>
<rect x="929" y="234" width="6.6" height="6.6" fill="#ff7a80"/>
<rect x="935" y="234" width="6.6" height="6.6" fill="#ff6e73"/>
<rect x="941" y="234" width="6.6" height="6.6" fill="#ff6368"/>
<rect x="947" y="234" width="6.6" height="6.6" fill="#ff595e"/>
<rect x="953" y="234" width="6.6" height="6.6" fill="#ff5055"/>
<rect x="959" y="234" width="6.6" height="6.6" fill="#ff494d"/>
<rect x="965" y="234" width="6.6" height="6.6" fill="#ff4245"/>
<rect x="971" y="234" width="6.6" height="6.6" fill="#ff3b3f"/>
<rect x="977" y="234" width="6.6" height="6.6" fill="#ff3539"/>
<rect x="983" y="234" width="6.6" height="6.6" fill="#ff3033"/>
<rect x="989" y="234" width="6.6" height="6.6" fill="#ff2b2e"/>
<rect x="995" y="234" width="6.6" height="6.6" fill="#ff262a"/>
<rect x="1001" y="234" width="6.6" height="6.6" fill="#ff2225"/>
<rect x="1007" y="234" width="6.6" height="6.6" fill="#ff1e21"/>
<rect x="1013" y="234" width="6.6" height="6.6" fill="#ff1b1d"/>
<rect x="1019" y="234" width="6.6" height="6.6" fill="#ff171a"/>
<rect x="1025" y="234" width="6.6" height="6.6" fill="#ff1416"/>
<rect x="1031" y="234" width="6.6" height="6.6" fill="#ff1113"/>
<rect x="1037" y="234" width="6.6" height="6.6" fill="#ff0e10"/>
<rect x="1043" y="234" width="6.6" height="6.6" fill="#ff0b0e"/>
<rect x="1049" y="234" width="6.6" height="6.6" fill="#ff090b"/>
<rect x="1055" y="234" width="6.6" height="6.6" fill="#ff0608"/>
<rect x="1061" y="234" width="6.6" height="6.6" fill="#ff0406"/>
<rect x="1067" y="234" width="6.6" height="6.6" fill="#ff0103"/>
<rect x="1073" y="234" width="6.6" height="6.6" fill="#ff0002"/>
<rect x="1079" y="234" width="6.6" height="6.6" fill="#ff0001"/>
<rect x="1085" y="234" width="48.6" height="6.6" fill="#ff0000"/>
<rect x="737" y="240" width="12.6" height="6.6" fill="#00e2ff"/>
<rect x="749" y="240" width="12.6" height="6.6" fill="#00e1ff"/>
<rect x="761" y="240" width="6.6" height="6.6" fill="#00e0ff"/>
<rect x="767" y="240" width="12.6" height="6.6" fill="#00dfff"/>
<rect x="779" y="240" width="6.6" height="6.6" fill="#00deff"/>
<rect x="785" y="240" width="12.6" height="6.6" fill="#00ddff"/>
<rect x="797" y="240" width="6.6" height="6.6" fill="#00dcff"/>
<rect x="803" y="240" width="6.6" height="6.6" fill="#00dbff"/>
<rect x="809" y="240" width="12.6" height="6.6" fill="#00daff"/>
<rect x="821" y="240" width="6.6" height="6.6" fill="#00d9ff"/>
<rect x="827" y="240" width="6.6" height="6.6" fill="#00d8ff"/>
<rect x="833" y="240" width="6.6" height="6.6" fill="#00d7ff"/>
<rect x="839" y="240" width="6.6" height="6.6" fill="#00d6ff"/>
<rect x="845" y="240" width="6.6" height="6.6" fill="#06d5ff"/>
<rect x="851" y="240" width="6.6" height="6.6" fill="#20d4ff"/>
<rect x="857" y="240" width="6.6" height="6.6" fill="#3ad4ff"/>
<rect x="863" y="240" width="6.6" height="6.6" fill="#54d3ff"/>
<rect x="869" y="240" width="6.6" height="6.6" fill="#70d2ff"/>
<rect x="875" y="240" width="6.6" height="6.6" fill="#8dd1ff"/>
<rect x="881" y="240" width="6.6" height="6.6" fill="#abd1ff"/>
<rect x="887" y="240" width="6.6" height="6.6" fill="#cad2ff"/>
<rect x="893" y="240" width="6.6" height="6.6" fill="#e9d2ff"/>
<rect x="899" y="240" width="6.6" height="6.6" fill="#ffc5ef"/>
<rect x="905" y="240" width="6.6" height="6.6" fill="#ffacd0"/>
<rect x="911" y="240" width="6.6" height="6.6" fill="#ff98b7"/>
<rect x="917" y="240" width="6.6" height="6.6" fill="#ff86a2"/>
<rect x="923" y="240" width="6.6" height="6.6" fill="#ff7890"/>
<rect x="929" y="240" width="6.6" height="6.6" fill="#ff6b81"/>
<rect x="935" y="240" width="6.6" height="6.6" fill="#ff6074"/>
<rect x="941" y="240" width="6.6" height="6.6" fill="#ff5669"/>
<rect x="947" y="240" width="6.6" height="6.6" fill="#ff4d5f"/>
<rect x="953" y="240" width="6.6" height="6.6" fill="#ff4556"/>
<rect x="959" y="240" width="6.6" height="6.6" fill="#ff3e4e"/>
<rect x="965" y="240" width="6.6" height="6.6" fill="#ff3846"/>
<rect x="971" y="240" width="6.6" height="6.6" fill="#ff3240"/>
<rect x="977" y="240" width="6.6" height="6.6" fill="#ff2c39"/>
<rect x="983" y="240" width="6.6" height="6.6" fill="#ff2734"/>
<rect x="989" y="240" width="6.6" height="6.6" fill="#ff232f"/>
<rect x="995" y="240" width="6.6" height="6.6" fill="#ff1f2a"/>
<rect x="1001" y="240" width="6.6" height="6.6" fill="#ff1b26"/>
<rect x="1007" y="240" width="6.6" height="6.6" fill="#ff1721"/>
<rect x="1013" y="240" width="6.6" height="6.6" fill="#ff141e"/>
<rect x="1019" y="240" width="6.6" height="6.6" fill="#ff101a"/>
<rect x="1025" y="240" width="6.6" height="6.6" fill="#ff0d17"/>
<rect x="1031" y="240" width="6.6" height="6.6" fill="#ff0b13"/>
<rect x="1037" y="240" width="6.6" height="6.6" fill="#ff0810"/>
<rect x="1043" y="240" width="6.6" height="6.6" fill="#ff050e"/>
<rect x="1049" y="240" width="6.6" height="6.6" fill="#ff030b"/>
<rect x="1055" y="240" width="6.6" height="6.6" fill="#ff0008"/>
<rect x="1061" y="240" width="6.6" height="6.6" fill="#ff0006"/>
<rect x="1067" y="240" width="6.6" height="6.6" fill="#ff0005"/>
<rect x="1073" y="240" width="6.6" height="6.6" fill="#ff0003"/>
<rect x="1079" y="240" width="6.6" height="6.6" fill="#ff0002"/>
<rect x="1085" y="240" width="6.6" height="6.6" fill="#ff0001"/>
<rect x="1091" y="240" width="54.6" height="6.6" fill="#ff0000"/>
<rect x="737" y="246" width="6.6" height="6.6" fill="#00cfff"/>
<rect x="743" y="246" width="6.6" height="6.6" fill="#00ceff"/>
<rect x="749" y="246" width="6.6" height="6.6" fill="#00cdff"/>
<rect x="755" y="246" width="6.6" height="6.6" fill="#00ccff"/>
<rect x="761" y="246" width="6.6" height="6.6" fill="#00cbff"/>
<rect x="767" y="246" width="6.6" height="6.6" fill="#00caff"/>
<rect x="773" y="246" width="6.6" height="6.6" fill="#00c9ff"/>
<rect x="779" y="246" width="6.6" height="6.6" fill="#00c8ff"/>
<rect x="785" y="246" width="6.6" height="6.6" fill="#00c7ff"/>
<rect x="791" y="246" width="6.6" height="6.6" fill="#00c6ff"/>
<rect x="797" y="246" width="6.6" height="6.6" fill="#00c5ff"/>
<rect x="803" y="246" width="6.6" height="6.6" fill="#00c4ff"/>
<rect x="809" y="246" width="6.6" height="6.6" fill="#00c3ff"/>
<rect x="815" y="246" width="6.6" height="6.6" fill="#00c1ff"/>
<rect x="821" y="246" width="6.6" height="6.6" fill="#00c0ff"/>
<rect x="827" y="246" width="6.6" height="6.6" fill="#00bfff"/>
<rect x="833" y="246" width="6.6" height="6.6" fill="#00bdff"/>
<rect x="839" y="246" width="6.6" height="6.6" fill="#00bcff"/>
<rect x="845" y="246" width="6.6" height="6.6" fill="#0fbbff"/>
<rect x="851" y="246" width="6.6" height="6.6" fill="#28baff"/>
<rect x="857" y="246" width="6.6" height="6.6" fill="#41b9ff"/>
<rect x="863" y="246" width="6.6" height="6.6" fill="#5ab8ff"/>
<rect x="869" y="246" width="6.6" height="6.6" fill="#75b7ff"/>
<rect x="875" y="246" width="6.6" height="6.6" fill="#90b6ff"/>
<rect x="881" y="246" width="6.6" height="6.6" fill="#adb7ff"/>
<rect x="887" y="246" width="6.6" height="6.6" fill="#c7b9ff"/>
<rect x="893" y="246" width="6.6" height="6.6" fill="#e7b7ff"/>
<rect x="899" y="246" width="6.6" height="6.6" fill="#ffacf2"/>
<rect x="905" y="246" width="6.6" height="6.6" fill="#ff96d3"/>
<rect x="911" y="246" width="6.6" height="6.6" fill="#ff84b9"/>
<rect x="917" y="246" width="6.6" height="6.6" fill="#ff75a5"/>
<rect x="923" y="246" width="6.6" height="6.6" fill="#ff6893"/>
<rect x="929" y="246" width="6.6" height="6.6" fill="#ff5c84"/>
<rect x="935" y="246" width="6.6" height="6.6" fill="#ff5277"/>
<rect x="941" y="246" width="6.6" height="6.6" fill="#ff496b"/>
<rect x="947" y="246" width="6.6" height="6.6" fill="#ff4161"/>
<rect x="953" y="246" width="6.6" height="6.6" fill="#ff3a58"/>
<rect x="959" y="246" width="6.6" height="6.6" fill="#ff344f"/>
<rect x="965" y="246" width="6.6" height="6.6" fill="#ff2e48"/>
<rect x="971" y="246" width="6.6" height="6.6" fill="#ff2841"/>
<rect x="977" y="246" width="6.6" height="6.6" fill="#ff243b"/>
<rect x="983" y="246" width="6.6" height="6.6" fill="#ff1f35"/>
<rect x="989" y="246" width="6.6" height="6.6" fill="#ff1b30"/>
<rect x="995" y="246" width="6.6" height="6.6" fill="#ff172b"/>
<rect x="1001" y="246" width="6.6" height="6.6" fill="#ff1327"/>
<rect x="1007" y="246" width="6.6" height="6.6" fill="#ff1023"/>
<rect x="1013" y="246" width="6.6" height="6.6" fill="#ff0d1f"/>
<rect x="1019" y="246" width="6.6" height="6.6" fill="#ff0a1b"/>
<rect x="1025" y="246" width="6.6" height="6.6" fill="#ff0717"/>
<rect x="1031" y="246" width="6.6" height="6.6" fill="#ff0414"/>
<rect x="1037" y="246" width="6.6" height="6.6" fill="#ff0111"/>
<rect x="1043" y="246" width="6.6" height="6.6" fill="#ff000e"/>
<rect x="1049" y="246" width="6.6" height="6.6" fill="#ff000c"/>
<rect x="1055" y="246" width="6.6" height="6.6" fill="#ff000a"/>
<rect x="1061" y="246" width="6.6" height="6.6" fill="#ff0009"/>
<rect x="1067" y="246" width="6.6" height="6.6" fill="#ff0007"/>
<rect x="1073" y="246" width="6.6" height="6.6" fill="#ff0006"/>
<rect x="1079" y="246" width="6.6" height="6.6" fill="#ff0004"/>
<rect x="1085" y="246" width="6.6" height="6.6" fill="#ff0003"/>
<rect x="1091" y="246" width="6.6" height="6.6" fill="#ff0002"/>
<rect x="1097" y="246" width="6.6" height="6.6" fill="#ff0001"/>
<rect x="1103" y="246" width="42.6" height="6.6" fill="#ff0000"/>
<rect x="737" y="252" width="6.6" height="6.6" fill="#00bdff"/>
<rect x="743" y="252" width="6.6" height="6.6" fill="#00bcff"/>
<rect x="749" y="252" width="6.6" height="6.6" fill="#00bbff"/>
<rect x="755" y="252" width="6.6" height="6.6" fill="#00b9ff"/>
<rect x="761" y="252" width="6.6" height="6.6" fill="#00b8ff"/>
<rect x="767" y="252" width="6.6" height="6.6" fill="#00b7ff"/>
<rect x="773" y="252" width="6.6" height="6.6" fill="#00b6ff"/>
<rect x="779" y="252" width="6.6" height="6.6" fill="#00b4ff"/>
<rect x="785" y="252" width="6.6" height="6.6" fill="#00b3ff"/>
<rect x="791" y="252" width="6.6" height="6.6" fill="#00b2ff"/>
<rect x="797" y="252" width="6.6" height="6.6" fill="#00b0ff"/>
<rect x="803" y="252" width="6.6" height="6.6" fill="#00afff"/>
<rect x="809" y="252" width="6.6" height="6.6" fill="#00adff"/>
<rect x="815" y="252" width="6.6" height="6.6" fill="#00abff"/>
<rect x="821" y="252" width="6.6" height="6.6" fill="#00aaff"/>
<rect x="827" y="252" width="6.6" height="6.6" fill="#00a8ff"/>
<rect x="833" y="252" width="6.6" height="6.6" fill="#00a6ff"/>
<rect x="839" y="252" width="6.6" height="6.6" fill="#00a4ff"/>
<rect x="845" y="252" width="6.6" height="6.6" fill="#18a3ff"/>
<rect x="851" y="252" width="6.6" height="6.6" fill="#2fa2ff"/>
<rect x="857" y="252" width="6.6" height="6.6" fill="#47a1ff"/>
<rect x="863" y="252" width="6.6" height="6.6" fill="#5fa0ff"/>
<rect x="869" y="252" width="6.6" height="6.6" fill="#79a0ff"/>
<rect x="875" y="252" width="6.6" height="6.6" fill="#93a0ff"/>
<rect x="881" y="252" width="6.6" height="6.6" fill="#aba2ff"/>
<rect x="887" y="252" width="6.6" height="6.6" fill="#c6a0ff"/>
<rect x="893" y="252" width="6.6" height="6.6" fill="#e69dff"/>
<rect x="899" y="252" width="6.6" height="6.6" fill="#ff95f5"/>
<rect x="905" y="252" width="6.6" height="6.6" fill="#ff82d6"/>
<rect x="911" y="252" width="6.6" height="6.6" fill="#ff72bd"/>
<rect x="917" y="252" width="6.6" height="6.6" fill="#ff64a8"/>
<rect x="923" y="252" width="6.6" height="6.6" fill="#ff5896"/>
<rect x="929" y="252" width="6.6" height="6.6" fill="#ff4e87"/>
<rect x="935" y="252" width="6.6" height="6.6" fill="#ff4579"/>
<rect x="941" y="252" width="6.6" height="6.6" fill="#ff3d6e"/>
<rect x="947" y="252" width="6.6" height="6.6" fill="#ff3663"/>
<rect x="953" y="252" width="6.6" height="6.6" fill="#ff2f5a"/>
<rect x="959" y="252" width="6.6" height="6.6" fill="#ff2a52"/>
<rect x="965" y="252" width="6.6" height="6.6" fill="#ff244a"/>
<rect x="971" y="252" width="6.6" height="6.6" fill="#ff1f43"/>
<rect x="977" y="252" width="6.6" height="6.6" fill="#ff1b3d"/>
<rect x="983" y="252" width="6.6" height="6.6" fill="#ff1737"/>
<rect x="989" y="252" width="6.6" height="6.6" fill="#ff1332"/>
<rect x="995" y="252" width="6.6" height="6.6" fill="#ff0f2d"/>
<rect x="1001" y="252" width="6.6" height="6.6" fill="#ff0c28"/>
<rect x="1007" y="252" width="6.6" height="6.6" fill="#ff0924"/>
<rect x="1013" y="252" width="6.6" height="6.6" fill="#ff0620"/>
<rect x="1019" y="252" width="6.6" height="6.6" fill="#ff031c"/>
<rect x="1025" y="252" width="6.6" height="6.6" fill="#ff0018"/>
<rect x="1031" y="252" width="6.6" height="6.6" fill="#ff0015"/>
<rect x="1037" y="252" width="6.6" height="6.6" fill="#ff0013"/>
<rect x="1043" y="252" width="6.6" height="6.6" fill="#ff0011"/>
<rect x="1049" y="252" width="6.6" height="6.6" fill="#ff000f"/>
<rect x="1055" y="252" width="6.6" height="6.6" fill="#ff000d"/>
<rect x="1061" y="252" width="6.6" height="6.6" fill="#ff000b"/>
<rect x="1067" y="252" width="6.6" height="6.6" fill="#ff0009"/>
<rect x="1073" y="252" width="6.6" height="6.6" fill="#ff0008"/>
<rect x="1079" y="252" width="6.6" height="6.6" fill="#ff0006"/>
<rect x="1085" y="252" width="6.6" height="6.6" fill="#ff0005"/>
<rect x="1091" y="252" width="6.6" height="6.6" fill="#ff0004"/>
<rect x="1097" y="252" width="6.6" height="6.6" fill="#ff0003"/>
<rect x="1103" y="252" width="6.6" height="6.6" fill="#ff0002"/>
<rect x="1109" y="252" width="6.6" height="6.6" fill="#ff0001"/>
<rect x="1115" y="252" width="30.6" height="6.6" fill="#ff0000"/>
<rect x="737" y="258" width="6.6" height="6.6" fill="#00acff"/>
<rect x="743" y="258" width="6.6" height="6.6" fill="#00abff"/>
<rect x="749" y="258" width="6.6" height="6.6" fill="#00a9ff"/>
<rect x="755" y="258" width="6.6" height="6.6" fill="#00a8ff"/>
<rect x="761" y="258" width="6.6" height="6.6" fill="#00a6ff"/>
<rect x="767" y="258" width="6.6" height="6.6" fill="#00a5ff"/>
<rect x="773" y="258" width="6.6" height="6.6" fill="#00a3ff"/>
<rect x="779" y="258" width="6.6" height="6.6" fill="#00a2ff"/>
<rect x="785" y="258" width="6.6" height="6.6" fill="#00a0ff"/>
<rect x="791" y="258" width="6.6" height="6.6" fill="#009eff"/>
<rect x="797" y="258" width="6.6" height="6.6" fill="#009dff"/>
<rect x="803" y="258" width="6.6" height="6.6" fill="#009bff"/>
<rect x="809" y="258" width="6.6" height="6.6" fill="#0099ff"/>
<rect x="815" y="258" width="6.6" height="6.6" fill="#0097ff"/>
<rect x="821" y="258" width="6.6" height="6.6" fill="#0095ff"/>
<rect x="827" y="258" width="6.6" height="6.6" fill="#0093ff"/>
<rect x="833" y="258" width="6.6" height="6.6" fill="#0091ff"/>
<rect x="839" y="258" width="6.6" height="6.6" fill="#098fff"/>
<rect x="845" y="258" width="6.6" height="6.6" fill="#1f8eff"/>
<rect x="851" y="258" width="6.6" height="6.6" fill="#368dff"/>
<rect x="857" y="258" width="6.6" height="6.6" fill="#4d8cff"/>
<rect x="863" y="258" width="6.6" height="6.6" fill="#648cff"/>
<rect x="869" y="258" width="6.6" height="6.6" fill="#7d8cff"/>
<rect x="875" y="258" width="6.6" height="6.6" fill="#938fff"/>
<rect x="881" y="258" width="6.6" height="6.6" fill="#aa8cff"/>
<rect x="887" y="258" width="6.6" height="6.6" fill="#c589ff"/>
<rect x="893" y="258" width="6.6" height="6.6" fill="#e586ff"/>
<rect x="899" y="258" width="6.6" height="6.6" fill="#ff7ff7"/>
<rect x="905" y="258" width="6.6" height="6.6" fill="#ff6fd9"/>
<rect x="911" y="258" width="6.6" height="6.6" fill="#ff60c0"/>
<rect x="917" y="258" width="6.6" height="6.6" fill="#ff54ab"/>
<rect x="923" y="258" width="6.6" height="6.6" fill="#ff4a99"/>
<rect x="929" y="258" width="6.6" height="6.6" fill="#ff418a"/>
<rect x="935" y="258" width="6.6" height="6.6" fill="#ff397c"/>
<rect x="941" y="258" width="6.6" height="6.6" fill="#ff3271"/>
<rect x="947" y="258" width="6.6" height="6.6" fill="#ff2b66"/>
<rect x="953" y="258" width="6.6" height="6.6" fill="#ff255d"/>
<rect x="959" y="258" width="6.6" height="6.6" fill="#ff2054"/>
<rect x="965" y="258" width="6.6" height="6.6" fill="#ff1b4c"/>
<rect x="971" y="258" width="6.6" height="6.6" fill="#ff1745"/>
<rect x="977" y="258" width="6.6" height="6.6" fill="#ff123f"/>
<rect x="983" y="258" width="6.6" height="6.6" fill="#ff0f39"/>
<rect x="989" y="258" width="6.6" height="6.6" fill="#ff0b34"/>
<rect x="995" y="258" width="6.6" height="6.6" fill="#ff082e"/>
<rect x="1001" y="258" width="6.6" height="6.6" fill="#ff052a"/>
<rect x="1007" y="258" width="6.6" height="6.6" fill="#ff0125"/>
<rect x="1013" y="258" width="6.6" height="6.6" fill="#ff0021"/>
<rect x="1019" y="258" width="6.6" height="6.6" fill="#ff001e"/>
<rect x="1025" y="258" width="6.6" height="6.6" fill="#ff001b"/>
<rect x="1031" y="258" width="6.6" height="6.6" fill="#ff0018"/>
<rect x="1037" y="258" width="6.6" height="6.6" fill="#ff0016"/>
<rect x="1043" y="258" width="6.6" height="6.6" fill="#ff0013"/>
<rect x="1049" y="258" width="6.6" height="6.6" fill="#ff0011"/>
<rect x="1055" y="258" width="6.6" height="6.6" fill="#ff000f"/>
<rect x="1061" y="258" width="6.6" height="6.6" fill="#ff000d"/>
<rect x="1067" y="258" width="6.6" height="6.6" fill="#ff000b"/>
<rect x="1073" y="258" width="6.6" height="6.6" fill="#ff000a"/>
<rect x="1079" y="258" width="6.6" height="6.6" fill="#ff0008"/>
<rect x="1085" y="258" width="6.6" height="6.6" fill="#ff0007"/>
<rect x="1091" y="258" width="6.6" height="6.6" fill="#ff0006"/>
<rect x="1097" y="258" width="6.6" height="6.6" fill="#ff0004"/>
<rect x="1103" y="258" width="6.6" height="6.6" fill="#ff0003"/>
<rect x="1109" y="258" width="6.6" height="6.6" fill="#ff0002"/>
<rect x="1115" y="258" width="6.6" height="6.6" fill="#ff0001"/>
<rect x="1121" y="258" width="24.6" height="6.6" fill="#ff0000"/>
<rect x="743" y="264" width="6.6" height="6.6" fill="#009bff"/>
<rect x="749" y="264" width="6.6" height="6.6" fill="#0099ff"/>
<rect x="755" y="264" width="6.6" height="6.6" fill="#0097ff"/>
<rect x="761" y="264" width="6.6" height="6.6" fill="#0096ff"/>
<rect x="767" y="264" width="6.6" height="6.6" fill="#0094ff"/>
<rect x="773" y="264" width="6.6" height="6.6" fill="#0092ff"/>
<rect x="779" y="264" width="6.6" height="6.6" fill="#0091ff"/>
<rect x="785" y="264" width="6.6" height="6.6" fill="#008fff"/>
<rect x="791" y="264" width="6.6" height="6.6" fill="#008dff"/>
<rect x="797" y="264" width="6.6" height="6.6" fill="#008bff"/>
<rect x="803" y="264" width="6.6" height="6.6" fill="#0089ff"/>
<rect x="809" y="264" width="6.6" height="6.6" fill="#0087ff"/>
<rect x="815" y="264" width="6.6" height="6.6" fill="#0084ff"/>
<rect x="821" y="264" width="6.6" height="6.6" fill="#0082ff"/>
<rect x="827" y="264" width="6.6" height="6.6" fill="#0080ff"/>
<rect x="833" y="264" width="6.6" height="6.6" fill="#007dff"/>
<rect x="839" y="264" width="6.6" height="6.6" fill="#117cff"/>
<rect x="845" y="264" width="6.6" height="6.6" fill="#267cff"/>
<rect x="851" y="264" width="6.6" height="6.6" fill="#3c7bff"/>
<rect x="857" y="264" width="6.6" height="6.6" fill="#527aff"/>
<rect x="863" y="264" width="6.6" height="6.6" fill="#697bff"/>
<rect x="869" y="264" width="6.6" height="6.6" fill="#7f7eff"/>
<rect x="875" y="264" width="6.6" height="6.6" fill="#927bff"/>
<rect x="881" y="264" width="6.6" height="6.6" fill="#aa78ff"/>
<rect x="887" y="264" width="6.6" height="6.6" fill="#c574ff"/>
<rect x="893" y="264" width="6.6" height="6.6" fill="#e471ff"/>
<rect x="899" y="264" width="6.6" height="6.6" fill="#ff6bfa"/>
<rect x="905" y="264" width="6.6" height="6.6" fill="#ff5cdc"/>
<rect x="911" y="264" width="6.6" height="6.6" fill="#ff50c3"/>
<rect x="917" y="264" width="6.6" height="6.6" fill="#ff45ae"/>
<rect x="923" y="264" width="6.6" height="6.6" fill="#ff3c9d"/>
<rect x="929" y="264" width="6.6" height="6.6" fill="#ff348d"/>
<rect x="935" y="264" width="6.6" height="6.6" fill="#ff2d80"/>
<rect x="941" y="264" width="6.6" height="6.6" fill="#ff2674"/>
<rect x="947" y="264" width="6.6" height="6.6" fill="#ff2069"/>
<rect x="953" y="264" width="6.6" height="6.6" fill="#ff1b5f"/>
<rect x="959" y="264" width="6.6" height="6.6" fill="#ff1657"/>
<rect x="965" y="264" width="6.6" height="6.6" fill="#ff124f"/>
<rect x="971" y="264" width="6.6" height="6.6" fill="#ff0e48"/>
<rect x="977" y="264" width="6.6" height="6.6" fill="#ff0a41"/>
<rect x="983" y="264" width="6.6" height="6.6" fill="#ff063b"/>
<rect x="989" y="264" width="6.6" height="6.6" fill="#ff0335"/>
<rect x="995" y="264" width="6.6" height="6.6" fill="#ff0030"/>
<rect x="1001" y="264" width="6.6" height="6.6" fill="#ff002c"/>
<rect x="1007" y="264" width="6.6" height="6.6" fill="#ff0028"/>
<rect x="1013" y="264" width="6.6" height="6.6" fill="#ff0024"/>
<rect x="1019" y="264" width="6.6" height="6.6" fill="#ff0021"/>
<rect x="1025" y="264" width="6.6" height="6.6" fill="#ff001e"/>
<rect x="1031" y="264" width="6.6" height="6.6" fill="#ff001b"/>
<rect x="1037" y="264" width="6.6" height="6.6" fill="#ff0018"/>
<rect x="1043" y="264" width="6.6" height="6.6" fill="#ff0016"/>
<rect x="1049" y="264" width="6.6" height="6.6" fill="#ff0014"/>
<rect x="1055" y="264" width="6.6" height="6.6" fill="#ff0012"/>
<rect x="1061" y="264" width="6.6" height="6.6" fill="#ff0010"/>
<rect x="1067" y="264" width="6.6" height="6.6" fill="#ff000e"/>
<rect x="1073" y="264" width="6.6" height="6.6" fill="#ff000c"/>
<rect x="1079" y="264" width="6.6" height="6.6" fill="#ff000a"/>
<rect x="1085" y="264" width="6.6" height="6.6" fill="#ff0009"/>
<rect x="1091" y="264" width="6.6" height="6.6" fill="#ff0007"/>
<rect x="1097" y="264" width="6.6" height="6.6" fill="#ff0006"/>
<rect x="1103" y="264" width="6.6" height="6.6" fill="#ff0005"/>
<rect x="1109" y="264" width="6.6" height="6.6" fill="#ff0004"/>
<rect x="1115" y="264" width="6.6" height="6.6" fill="#ff0003"/>
<rect x="1121" y="264" width="6.6" height="6.6" fill="#ff0002"/>
<rect x="1127" y="264" width="6.6" height="6.6" fill="#ff0001"/>
<rect x="1133" y="264" width="12.6" height="6.6" fill="#ff0000"/>
<rect x="743" y="270" width="6.6" height="6.6" fill="#008cff"/>
<rect x="749" y="270" width="6.6" height="6.6" fill="#008aff"/>
<rect x="755" y="270" width="6.6" height="6.6" fill="#0088ff"/>
<rect x="761" y="270" width="6.6" height="6.6" fill="#0086ff"/>
<rect x="767" y="270" width="6.6" height="6.6" fill="#0084ff"/>
<rect x="773" y="270" width="6.6" height="6.6" fill="#0083ff"/>
<rect x="779" y="270" width="6.6" height="6.6" fill="#0081ff"/>
<rect x="785" y="270" width="6.6" height="6.6" fill="#007fff"/>
<rect x="791" y="270" width="6.6" height="6.6" fill="#007cff"/>
<rect x="797" y="270" width="6.6" height="6.6" fill="#007aff"/>
<rect x="803" y="270" width="6.6" height="6.6" fill="#0078ff"/>
<rect x="809" y="270" width="6.6" height="6.6" fill="#0076ff"/>
<rect x="815" y="270" width="6.6" height="6.6" fill="#0073ff"/>
<rect x="821" y="270" width="6.6" height="6.6" fill="#0071ff"/>
<rect x="827" y="270" width="6.6" height="6.6" fill="#006eff"/>
<rect x="833" y="270" width="6.6" height="6.6" fill="#036cff"/>
<rect x="839" y="270" width="6.6" height="6.6" fill="#186cff"/>
<rect x="845" y="270" width="6.6" height="6.6" fill="#2d6bff"/>
<rect x="851" y="270" width="6.6" height="6.6" fill="#416aff"/>
<rect x="857" y="270" width="6.6" height="6.6" fill="#576bff"/>
<rect x="863" y="270" width="6.6" height="6.6" fill="#6d6eff"/>
<rect x="869" y="270" width="6.6" height="6.6" fill="#7d6bff"/>
<rect x="875" y="270" width="6.6" height="6.6" fill="#9268ff"/>
<rect x="881" y="270" width="6.6" height="6.6" fill="#aa64ff"/>
<rect x="887" y="270" width="6.6" height="6.6" fill="#c561ff"/>
<rect x="893" y="270" width="6.6" height="6.6" fill="#e25dff"/>
<rect x="899" y="270" width="6.6" height="6.6" fill="#ff58fc"/>
<rect x="905" y="270" width="6.6" height="6.6" fill="#ff4bdf"/>
<rect x="911" y="270" width="6.6" height="6.6" fill="#ff40c6"/>
<rect x="917" y="270" width="6.6" height="6.6" fill="#ff37b2"/>
<rect x="923" y="270" width="6.6" height="6.6" fill="#ff2fa0"/>
<rect x="929" y="270" width="6.6" height="6.6" fill="#ff2890"/>
<rect x="935" y="270" width="6.6" height="6.6" fill="#ff2183"/>
<rect x="941" y="270" width="6.6" height="6.6" fill="#ff1b77"/>
<rect x="947" y="270" width="6.6" height="6.6" fill="#ff166c"/>
<rect x="953" y="270" width="6.6" height="6.6" fill="#ff1162"/>
<rect x="959" y="270" width="6.6" height="6.6" fill="#ff0d59"/>
<rect x="965" y="270" width="6.6" height="6.6" fill="#ff0951"/>
<rect x="971" y="270" width="6.6" height="6.6" fill="#ff054a"/>
<rect x="977" y="270" width="6.6" height="6.6" fill="#ff0143"/>
<rect x="983" y="270" width="6.6" height="6.6" fill="#ff003d"/>
<rect x="989" y="270" width="6.6" height="6.6" fill="#ff0038"/>
<rect x="995" y="270" width="6.6" height="6.6" fill="#ff0033"/>
<rect x="1001" y="270" width="6.6" height="6.6" fill="#ff002f"/>
<rect x="1007" y="270" width="6.6" height="6.6" fill="#ff002b"/>
<rect x="1013" y="270" width="6.6" height="6.6" fill="#ff0027"/>
<rect x="1019" y="270" width="6.6" height="6.6" fill="#ff0024"/>
<rect x="1025" y="270" width="6.6" height="6.6" fill="#ff0021"/>
<rect x="1031" y="270" width="6.6" height="6.6" fill="#ff001e"/>
<rect x="1037" y="270" width="6.6" height="6.6" fill="#ff001b"/>
<rect x="1043" y="270" width="6.6" height="6.6" fill="#ff0019"/>
<rect x="1049" y="270" width="6.6" height="6.6" fill="#ff0016"/>
<rect x="1055" y="270" width="6.6" height="6.6" fill="#ff0014"/>
<rect x="1061" y="270" width="6.6" height="6.6" fill="#ff0012"/>
<rect x="1067" y="270" width="6.6" height="6.6" fill="#ff0010"/>
<rect x="1073" y="270" width="6.6" height="6.6" fill="#ff000e"/>
<rect x="1079" y="270" width="6.6" height="6.6" fill="#ff000c"/>
<rect x="1085" y="270" width="6.6" height="6.6" fill="#ff000b"/>
<rect x="1091" y="270" width="6.6" height="6.6" fill="#ff0009"/>
<rect x="1121" y="270" width="6.6" height="6.6" fill="#ff0003"/>
<rect x="1127" y="270" width="12.6" height="6.6" fill="#ff0002"/>
<rect x="1139" y="270" width="6.6" height="6.6" fill="#ff0001"/>
<rect x="743" y="276" width="6.6" height="6.6" fill="#007eff"/>
<rect x="749" y="276" width="6.6" height="6.6" fill="#007cff"/>
<rect x="755" y="276" width="6.6" height="6.6" fill="#007aff"/>
<rect x="761" y="276" width="6.6" height="6.6" fill="#0078ff"/>
<rect x="767" y="276" width="6.6" height="6.6" fill="#0076ff"/>
<rect x="773" y="276" width="6.6" height="6.6" fill="#0074ff"/>
<rect x="779" y="276" width="6.6" height="6.6" fill="#0072ff"/>
<rect x="785" y="276" width="6.6" height="6.6" fill="#0070ff"/>
<rect x="791" y="276" width="6.6" height="6.6" fill="#006dff"/>
<rect x="797" y="276" width="6.6" height="6.6" fill="#006bff"/>
<rect x="803" y="276" width="6.6" height="6.6" fill="#0069ff"/>
<rect x="809" y="276" width="6.6" height="6.6" fill="#0066ff"/>
<rect x="815" y="276" width="6.6" height="6.6" fill="#0064ff"/>
<rect x="821" y="276" width="6.6" height="6.6" fill="#0061ff"/>
<rect x="827" y="276" width="6.6" height="6.6" fill="#005eff"/>
<rect x="833" y="276" width="6.6" height="6.6" fill="#0b5dff"/>
<rect x="839" y="276" width="6.6" height="6.6" fill="#1f5cff"/>
<rect x="845" y="276" width="6.6" height="6.6" fill="#335cff"/>
<rect x="851" y="276" width="6.6" height="6.6" fill="#475cff"/>
<rect x="857" y="276" width="6.6" height="6.6" fill="#5b5fff"/>
<rect x="863" y="276" width="6.6" height="6.6" fill="#6b5eff"/>
<rect x="869" y="276" width="6.6" height="6.6" fill="#7d5aff"/>
<rect x="875" y="276" width="6.6" height="6.6" fill="#9356ff"/>
<rect x="881" y="276" width="6.6" height="6.6" fill="#ab53ff"/>
<rect x="887" y="276" width="6.6" height="6.6" fill="#c54fff"/>
<rect x="893" y="276" width="6.6" height="6.6" fill="#e14aff"/>
<rect x="899" y="276" width="6.6" height="6.6" fill="#ff46fe"/>
<rect x="905" y="276" width="6.6" height="6.6" fill="#ff3be1"/>
<rect x="911" y="276" width="6.6" height="6.6" fill="#ff31c9"/>
<rect x="917" y="276" width="6.6" height="6.6" fill="#ff29b5"/>
<rect x="923" y="276" width="6.6" height="6.6" fill="#ff22a3"/>
<rect x="929" y="276" width="6.6" height="6.6" fill="#ff1c93"/>
<rect x="935" y="276" width="6.6" height="6.6" fill="#ff1686"/>
<rect x="941" y="276" width="6.6" height="6.6" fill="#ff117a"/>
<rect x="947" y="276" width="6.6" height="6.6" fill="#ff0c6f"/>
<rect x="953" y="276" width="6.6" height="6.6" fill="#ff0865"/>
<rect x="959" y="276" width="6.6" height="6.6" fill="#ff045c"/>
<rect x="965" y="276" width="6.6" height="6.6" fill="#ff0054"/>
<rect x="971" y="276" width="6.6" height="6.6" fill="#ff004d"/>
<rect x="977" y="276" width="6.6" height="6.6" fill="#ff0046"/>
<rect x="983" y="276" width="6.6" height="6.6" fill="#ff0041"/>
<rect x="989" y="276" width="6.6" height="6.6" fill="#ff003b"/>
<rect x="995" y="276" width="6.6" height="6.6" fill="#ff0037"/>
<rect x="1001" y="276" width="6.6" height="6.6" fill="#ff0032"/>
<rect x="1007" y="276" width="6.6" height="6.6" fill="#ff002e"/>
<rect x="1013" y="276" width="6.6" height="6.6" fill="#ff002a"/>
<rect x="1019" y="276" width="6.6" height="6.6" fill="#ff0027"/>
<rect x="1025" y="276" width="6.6" height="6.6" fill="#ff0024"/>
<rect x="1031" y="276" width="6.6" height="6.6" fill="#ff0021"/>
<rect x="1037" y="276" width="6.6" height="6.6" fill="#ff001e"/>
<rect x="1043" y="276" width="6.6" height="6.6" fill="#ff001b"/>
<rect x="1049" y="276" width="6.6" height="6.6" fill="#ff0019"/>
<rect x="1055" y="276" width="6.6" height="6.6" fill="#ff0016"/>
<rect x="1061" y="276" width="6.6" height="6.6" fill="#ff0014"/>
<rect x="1067" y="276" width="6.6" height="6.6" fill="#ff0012"/>
<rect x="1073" y="276" width="6.6" height="6.6" fill="#ff0010"/>
<rect x="749" y="282" width="6.6" height="6.6" fill="#006eff"/>
<rect x="755" y="282" width="6.6" height="6.6" fill="#006cff"/>
<rect x="761" y="282" width="6.6" height="6.6" fill="#006aff"/>
<rect x="767" y="282" width="6.6" height="6.6" fill="#0068ff"/>
<rect x="773" y="282" width="6.6" height="6.6" fill="#0066ff"/>
<rect x="779" y="282" width="6.6" height="6.6" fill="#0064ff"/>
<rect x="785" y="282" width="6.6" height="6.6" fill="#0062ff"/>
<rect x="791" y="282" width="6.6" height="6.6" fill="#005fff"/>
<rect x="797" y="282" width="6.6" height="6.6" fill="#005dff"/>
<rect x="803" y="282" width="6.6" height="6.6" fill="#005aff"/>
<rect x="809" y="282" width="6.6" height="6.6" fill="#0058ff"/>
<rect x="815" y="282" width="6.6" height="6.6" fill="#0055ff"/>
<rect x="821" y="282" width="6.6" height="6.6" fill="#0052ff"/>
<rect x="827" y="282" width="6.6" height="6.6" fill="#004fff"/>
<rect x="833" y="282" width="6.6" height="6.6" fill="#124fff"/>
<rect x="839" y="282" width="6.6" height="6.6" fill="#254fff"/>
<rect x="845" y="282" width="6.6" height="6.6" fill="#384fff"/>
<rect x="851" y="282" width="6.6" height="6.6" fill="#4c51ff"/>
<rect x="857" y="282" width="6.6" height="6.6" fill="#5b51ff"/>
<rect x="863" y="282" width="6.6" height="6.6" fill="#6b4eff"/>
<rect x="869" y="282" width="6.6" height="6.6" fill="#7e4aff"/>
<rect x="875" y="282" width="6.6" height="6.6" fill="#9446ff"/>
<rect x="881" y="282" width="6.6" height="6.6" fill="#ac42ff"/>
<rect x="887" y="282" width="6.6" height="6.6" fill="#c53eff"/>
<rect x="893" y="282" width="6.6" height="6.6" fill="#e139ff"/>
<rect x="899" y="282" width="6.6" height="6.6" fill="#fe34ff"/>
<rect x="905" y="282" width="6.6" height="6.6" fill="#ff2be4"/>
<rect x="911" y="282" width="6.6" height="6.6" fill="#ff23cc"/>
<rect x="917" y="282" width="6.6" height="6.6" fill="#ff1cb8"/>
<rect x="923" y="282" width="6.6" height="6.6" fill="#ff15a6"/>
<rect x="929" y="282" width="6.6" height="6.6" fill="#ff1096"/>
<rect x="935" y="282" width="6.6" height="6.6" fill="#ff0b89"/>
<rect x="941" y="282" width="6.6" height="6.6" fill="#ff067c"/>
<rect x="947" y="282" width="6.6" height="6.6" fill="#ff0271"/>
<rect x="953" y="282" width="6.6" height="6.6" fill="#ff0067"/>
<rect x="959" y="282" width="6.6" height="6.6" fill="#ff005f"/>
<rect x="965" y="282" width="6.6" height="6.6" fill="#ff0057"/>
<rect x="971" y="282" width="6.6" height="6.6" fill="#ff0050"/>
<rect x="977" y="282" width="6.6" height="6.6" fill="#ff004a"/>
<rect x="983" y="282" width="6.6" height="6.6" fill="#ff0044"/>
<rect x="989" y="282" width="6.6" height="6.6" fill="#ff003f"/>
<rect x="995" y="282" width="6.6" height="6.6" fill="#ff003a"/>
<rect x="1001" y="282" width="6.6" height="6.6" fill="#ff0035"/>
<rect x="1007" y="282" width="6.6" height="6.6" fill="#ff0031"/>
<rect x="1013" y="282" width="6.6" height="6.6" fill="#ff002d"/>
<rect x="1019" y="282" width="6.6" height="6.6" fill="#ff002a"/>
<rect x="1025" y="282" width="6.6" height="6.6" fill="#ff0026"/>
<rect x="1031" y="282" width="6.6" height="6.6" fill="#ff0023"/>
<rect x="1037" y="282" width="6.6" height="6.6" fill="#ff0020"/>
<rect x="1043" y="282" width="6.6" height="6.6" fill="#ff001e"/>
<rect x="1049" y="282" width="6.6" height="6.6" fill="#ff001b"/>
<rect x="1055" y="282" width="6.6" height="6.6" fill="#ff0019"/>
<rect x="749" y="288" width="6.6" height="6.6" fill="#0062ff"/>
<rect x="755" y="288" width="6.6" height="6.6" fill="#0060ff"/>
<rect x="761" y="288" width="6.6" height="6.6" fill="#005eff"/>
<rect x="767" y="288" width="6.6" height="6.6" fill="#005cff"/>
<rect x="773" y="288" width="6.6" height="6.6" fill="#0059ff"/>
<rect x="779" y="288" width="6.6" height="6.6" fill="#0057ff"/>
<rect x="785" y="288" width="6.6" height="6.6" fill="#0055ff"/>
<rect x="791" y="288" width="6.6" height="6.6" fill="#0052ff"/>
<rect x="797" y="288" width="6.6" height="6.6" fill="#0050ff"/>
<rect x="803" y="288" width="6.6" height="6.6" fill="#004dff"/>
<rect x="809" y="288" width="6.6" height="6.6" fill="#004aff"/>
<rect x="815" y="288" width="6.6" height="6.6" fill="#0048ff"/>
<rect x="821" y="288" width="6.6" height="6.6" fill="#0045ff"/>
<rect x="827" y="288" width="6.6" height="6.6" fill="#0643ff"/>
<rect x="833" y="288" width="6.6" height="6.6" fill="#1843ff"/>
<rect x="839" y="288" width="6.6" height="6.6" fill="#2b43ff"/>
<rect x="845" y="288" width="6.6" height="6.6" fill="#3d45ff"/>
<rect x="851" y="288" width="6.6" height="6.6" fill="#4c46ff"/>
<rect x="857" y="288" width="6.6" height="6.6" fill="#5b42ff"/>
<rect x="863" y="288" width="6.6" height="6.6" fill="#6c3fff"/>
<rect x="869" y="288" width="6.6" height="6.6" fill="#803bff"/>
<rect x="875" y="288" width="6.6" height="6.6" fill="#9536ff"/>
<rect x="881" y="288" width="6.6" height="6.6" fill="#ac32ff"/>
<rect x="887" y="288" width="6.6" height="6.6" fill="#c52eff"/>
<rect x="893" y="288" width="6.6" height="6.6" fill="#e029ff"/>
<rect x="899" y="288" width="6.6" height="6.6" fill="#fc24ff"/>
<rect x="905" y="288" width="6.6" height="6.6" fill="#ff1ce6"/>
<rect x="911" y="288" width="6.6" height="6.6" fill="#ff15cf"/>
<rect x="917" y="288" width="6.6" height="6.6" fill="#ff0fbb"/>
<rect x="923" y="288" width="6.6" height="6.6" fill="#ff09a9"/>
<rect x="929" y="288" width="6.6" height="6.6" fill="#ff0499"/>
<rect x="935" y="288" width="6.6" height="6.6" fill="#ff008b"/>
<rect x="941" y="288" width="6.6" height="6.6" fill="#ff007f"/>
<rect x="947" y="288" width="6.6" height="6.6" fill="#ff0075"/>
<rect x="953" y="288" width="6.6" height="6.6" fill="#ff006b"/>
<rect x="959" y="288" width="6.6" height="6.6" fill="#ff0062"/>
<rect x="965" y="288" width="6.6" height="6.6" fill="#ff005b"/>
<rect x="971" y="288" width="6.6" height="6.6" fill="#ff0054"/>
<rect x="977" y="288" width="6.6" height="6.6" fill="#ff004d"/>
<rect x="983" y="288" width="6.6" height="6.6" fill="#ff0047"/>
<rect x="989" y="288" width="6.6" height="6.6" fill="#ff0042"/>
<rect x="995" y="288" width="6.6" height="6.6" fill="#ff003d"/>
<rect x="1001" y="288" width="6.6" height="6.6" fill="#ff0038"/>
<rect x="1007" y="288" width="6.6" height="6.6" fill="#ff0034"/>
<rect x="1013" y="288" width="6.6" height="6.6" fill="#ff0030"/>
<rect x="1019" y="288" width="6.6" height="6.6" fill="#ff002c"/>
<rect x="1025" y="288" width="6.6" height="6.6" fill="#ff0029"/>
<rect x="1031" y="288" width="6.6" height="6.6" fill="#ff0026"/>
<rect x="1037" y="288" width="6.6" height="6.6" fill="#ff0023"/>
<rect x="749" y="294" width="6.6" height="6.6" fill="#0056ff"/>
<rect x="755" y="294" width="6.6" height="6.6" fill="#0054ff"/>
<rect x="761" y="294" width="6.6" height="6.6" fill="#0052ff"/>
<rect x="767" y="294" width="6.6" height="6.6" fill="#0050ff"/>
<rect x="773" y="294" width="6.6" height="6.6" fill="#004dff"/>
<rect x="779" y="294" width="6.6" height="6.6" fill="#004bff"/>
<rect x="785" y="294" width="6.6" height="6.6" fill="#0049ff"/>
<rect x="791" y="294" width="6.6" height="6.6" fill="#0046ff"/>
<rect x="797" y="294" width="6.6" height="6.6" fill="#0043ff"/>
<rect x="803" y="294" width="6.6" height="6.6" fill="#0041ff"/>
<rect x="809" y="294" width="6.6" height="6.6" fill="#003eff"/>
<rect x="815" y="294" width="6.6" height="6.6" fill="#003bff"/>
<rect x="821" y="294" width="6.6" height="6.6" fill="#0038ff"/>
<rect x="827" y="294" width="6.6" height="6.6" fill="#0d38ff"/>
<rect x="833" y="294" width="6.6" height="6.6" fill="#1e38ff"/>
<rect x="839" y="294" width="6.6" height="6.6" fill="#303aff"/>
<rect x="845" y="294" width="6.6" height="6.6" fill="#3f3cff"/>
<rect x="851" y="294" width="6.6" height="6.6" fill="#4c38ff"/>
<rect x="857" y="294" width="6.6" height="6.6" fill="#5c34ff"/>
<rect x="863" y="294" width="6.6" height="6.6" fill="#6e30ff"/>
<rect x="869" y="294" width="6.6" height="6.6" fill="#812cff"/>
<rect x="875" y="294" width="6.6" height="6.6" fill="#9628ff"/>
<rect x="881" y="294" width="6.6" height="6.6" fill="#ad23ff"/>
<rect x="887" y="294" width="6.6" height="6.6" fill="#c51eff"/>
<rect x="893" y="294" width="6.6" height="6.6" fill="#df19ff"/>
<rect x="899" y="294" width="6.6" height="6.6" fill="#fa14ff"/>
<rect x="905" y="294" width="6.6" height="6.6" fill="#ff0ee9"/>
<rect x="911" y="294" width="6.6" height="6.6" fill="#ff07d1"/>
<rect x="917" y="294" width="6.6" height="6.6" fill="#ff02bd"/>
<rect x="923" y="294" width="6.6" height="6.6" fill="#ff00ac"/>
<rect x="929" y="294" width="6.6" height="6.6" fill="#ff009c"/>
<rect x="935" y="294" width="6.6" height="6.6" fill="#ff008f"/>
<rect x="941" y="294" width="6.6" height="6.6" fill="#ff0083"/>
<rect x="947" y="294" width="6.6" height="6.6" fill="#ff0078"/>
<rect x="953" y="294" width="6.6" height="6.6" fill="#ff006f"/>
<rect x="959" y="294" width="6.6" height="6.6" fill="#ff0066"/>
<rect x="965" y="294" width="6.6" height="6.6" fill="#ff005e"/>
<rect x="971" y="294" width="6.6" height="6.6" fill="#ff0057"/>
<rect x="977" y="294" width="6.6" height="6.6" fill="#ff0050"/>
<rect x="983" y="294" width="6.6" height="6.6" fill="#ff004a"/>
<rect x="989" y="294" width="6.6" height="6.6" fill="#ff0045"/>
<rect x="995" y="294" width="6.6" height="6.6" fill="#ff0040"/>
<rect x="1001" y="294" width="6.6" height="6.6" fill="#ff003b"/>
<rect x="1007" y="294" width="6.6" height="6.6" fill="#ff0037"/>
<rect x="1013" y="294" width="6.6" height="6.6" fill="#ff0033"/>
<rect x="1019" y="294" width="6.6" height="6.6" fill="#ff002f"/>
<rect x="755" y="300" width="6.6" height="6.6" fill="#0049ff"/>
<rect x="761" y="300" width="6.6" height="6.6" fill="#0047ff"/>
<rect x="767" y="300" width="6.6" height="6.6" fill="#0045ff"/>
<rect x="773" y="300" width="6.6" height="6.6" fill="#0042ff"/>
<rect x="779" y="300" width="6.6" height="6.6" fill="#0040ff"/>
<rect x="785" y="300" width="6.6" height="6.6" fill="#003dff"/>
<rect x="791" y="300" width="6.6" height="6.6" fill="#003bff"/>
<rect x="797" y="300" width="6.6" height="6.6" fill="#0038ff"/>
<rect x="803" y="300" width="6.6" height="6.6" fill="#0035ff"/>
<rect x="809" y="300" width="6.6" height="6.6" fill="#0033ff"/>
<rect x="815" y="300" width="6.6" height="6.6" fill="#0030ff"/>
<rect x="821" y="300" width="6.6" height="6.6" fill="#022dff"/>
<rect x="827" y="300" width="6.6" height="6.6" fill="#132eff"/>
<rect x="833" y="300" width="6.6" height="6.6" fill="#2430ff"/>
<rect x="839" y="300" width="6.6" height="6.6" fill="#3432ff"/>
<rect x="845" y="300" width="6.6" height="6.6" fill="#3f2fff"/>
<rect x="851" y="300" width="6.6" height="6.6" fill="#4d2bff"/>
<rect x="857" y="300" width="6.6" height="6.6" fill="#5d27ff"/>
<rect x="863" y="300" width="6.6" height="6.6" fill="#6f23ff"/>
<rect x="869" y="300" width="6.6" height="6.6" fill="#831eff"/>
<rect x="875" y="300" width="6.6" height="6.6" fill="#971aff"/>
<rect x="881" y="300" width="6.6" height="6.6" fill="#ad15ff"/>
<rect x="887" y="300" width="6.6" height="6.6" fill="#c510ff"/>
<rect x="893" y="300" width="6.6" height="6.6" fill="#de0bff"/>
<rect x="899" y="300" width="6.6" height="6.6" fill="#f905ff"/>
<rect x="905" y="300" width="6.6" height="6.6" fill="#ff00eb"/>
<rect x="911" y="300" width="6.6" height="6.6" fill="#ff00d4"/>
<rect x="917" y="300" width="6.6" height="6.6" fill="#ff00c0"/>
<rect x="923" y="300" width="6.6" height="6.6" fill="#ff00af"/>
<rect x="929" y="300" width="6.6" height="6.6" fill="#ff00a0"/>
<rect x="935" y="300" width="6.6" height="6.6" fill="#ff0092"/>
<rect x="941" y="300" width="6.6" height="6.6" fill="#ff0086"/>
<rect x="947" y="300" width="6.6" height="6.6" fill="#ff007c"/>
<rect x="953" y="300" width="6.6" height="6.6" fill="#ff0072"/>
<rect x="959" y="300" width="6.6" height="6.6" fill="#ff0069"/>
<rect x="965" y="300" width="6.6" height="6.6" fill="#ff0061"/>
<rect x="971" y="300" width="6.6" height="6.6" fill="#ff005a"/>
<rect x="977" y="300" width="6.6" height="6.6" fill="#ff0054"/>
<rect x="983" y="300" width="6.6" height="6.6" fill="#ff004e"/>
<rect x="989" y="300" width="6.6" height="6.6" fill="#ff0048"/>
<rect x="995" y="300" width="6.6" height="6.6" fill="#ff0043"/>
<rect x="1001" y="300" width="6.6" height="6.6" fill="#ff003e"/>
<rect x="755" y="306" width="6.6" height="6.6" fill="#003fff"/>
<rect x="761" y="306" width="6.6" height="6.6" fill="#003dff"/>
<rect x="767" y="306" width="6.6" height="6.6" fill="#003aff"/>
<rect x="773" y="306" width="6.6" height="6.6" fill="#0038ff"/>
<rect x="779" y="306" width="6.6" height="6.6" fill="#0035ff"/>
<rect x="785" y="306" width="6.6" height="6.6" fill="#0033ff"/>
<rect x="791" y="306" width="6.6" height="6.6" fill="#0030ff"/>
<rect x="797" y="306" width="6.6" height="6.6" fill="#002eff"/>
<rect x="803" y="306" width="6.6" height="6.6" fill="#002bff"/>
<rect x="809" y="306" width="6.6" height="6.6" fill="#0028ff"/>
<rect x="815" y="306" width="6.6" height="6.6" fill="#0025ff"/>
<rect x="821" y="306" width="6.6" height="6.6" fill="#0825ff"/>
<rect x="827" y="306" width="6.6" height="6.6" fill="#1926ff"/>
<rect x="833" y="306" width="6.6" height="6.6" fill="#2929ff"/>
<rect x="839" y="306" width="6.6" height="6.6" fill="#3326ff"/>
<rect x="845" y="306" width="6.6" height="6.6" fill="#4022ff"/>
<rect x="851" y="306" width="6.6" height="6.6" fill="#4f1eff"/>
<rect x="857" y="306" width="6.6" height="6.6" fill="#5f1aff"/>
<rect x="863" y="306" width="6.6" height="6.6" fill="#7116ff"/>
<rect x="869" y="306" width="6.6" height="6.6" fill="#8411ff"/>
<rect x="875" y="306" width="6.6" height="6.6" fill="#980cff"/>
<rect x="881" y="306" width="6.6" height="6.6" fill="#ae07ff"/>
<rect x="887" y="306" width="6.6" height="6.6" fill="#c502ff"/>
<rect x="893" y="306" width="6.6" height="6.6" fill="#dd00ff"/>
<rect x="899" y="306" width="6.6" height="6.6" fill="#f700ff"/>
<rect x="905" y="306" width="6.6" height="6.6" fill="#ff00ed"/>
<rect x="911" y="306" width="6.6" height="6.6" fill="#ff00d6"/>
<rect x="917" y="306" width="6.6" height="6.6" fill="#ff00c3"/>
<rect x="923" y="306" width="6.6" height="6.6" fill="#ff00b2"/>
<rect x="929" y="306" width="6.6" height="6.6" fill="#ff00a3"/>
<rect x="935" y="306" width="6.6" height="6.6" fill="#ff0095"/>
<rect x="941" y="306" width="6.6" height="6.6" fill="#ff008a"/>
<rect x="947" y="306" width="6.6" height="6.6" fill="#ff007f"/>
<rect x="953" y="306" width="6.6" height="6.6" fill="#ff0075"/>
<rect x="959" y="306" width="6.6" height="6.6" fill="#ff006c"/>
<rect x="965" y="306" width="6.6" height="6.6" fill="#ff0065"/>
<rect x="971" y="306" width="6.6" height="6.6" fill="#ff005d"/>
<rect x="977" y="306" width="6.6" height="6.6" fill="#ff0057"/>
<rect x="983" y="306" width="6.6" height="6.6" fill="#ff0051"/>
<rect x="761" y="312" width="6.6" height="6.6" fill="#0033ff"/>
<rect x="767" y="312" width="6.6" height="6.6" fill="#0031ff"/>
<rect x="773" y="312" width="6.6" height="6.6" fill="#002eff"/>
<rect x="779" y="312" width="6.6" height="6.6" fill="#002cff"/>
<rect x="785" y="312" width="6.6" height="6.6" fill="#0029ff"/>
<rect x="791" y="312" width="6.6" height="6.6" fill="#0027ff"/>
<rect x="797" y="312" width="6.6" height="6.6" fill="#0024ff"/>
<rect x="803" y="312" width="6.6" height="6.6" fill="#0021ff"/>
<rect x="809" y="312" width="6.6" height="6.6" fill="#001fff"/>
<rect x="815" y="312" width="6.6" height="6.6" fill="#001cff"/>
<rect x="821" y="312" width="6.6" height="6.6" fill="#0e1dff"/>
<rect x="827" y="312" width="6.6" height="6.6" fill="#1e20ff"/>
<rect x="833" y="312" width="6.6" height="6.6" fill="#281eff"/>
<rect x="839" y="312" width="6.6" height="6.6" fill="#341aff"/>
<rect x="845" y="312" width="6.6" height="6.6" fill="#4116ff"/>
<rect x="851" y="312" width="6.6" height="6.6" fill="#5012ff"/>
<rect x="857" y="312" width="6.6" height="6.6" fill="#610eff"/>
<rect x="863" y="312" width="6.6" height="6.6" fill="#7209ff"/>
<rect x="869" y="312" width="6.6" height="6.6" fill="#8504ff"/>
<rect x="875" y="312" width="6.6" height="6.6" fill="#9900ff"/>
<rect x="881" y="312" width="6.6" height="6.6" fill="#ae00ff"/>
<rect x="887" y="312" width="6.6" height="6.6" fill="#c500ff"/>
<rect x="893" y="312" width="6.6" height="6.6" fill="#dd00ff"/>
<rect x="899" y="312" width="6.6" height="6.6" fill="#f600ff"/>
<rect x="905" y="312" width="6.6" height="6.6" fill="#ff00ef"/>
<rect x="911" y="312" width="6.6" height="6.6" fill="#ff00d9"/>
<rect x="917" y="312" width="6.6" height="6.6" fill="#ff00c6"/>
<rect x="923" y="312" width="6.6" height="6.6" fill="#ff00b5"/>
<rect x="929" y="312" width="6.6" height="6.6" fill="#ff00a6"/>
<rect x="935" y="312" width="6.6" height="6.6" fill="#ff0099"/>
<rect x="941" y="312" width="6.6" height="6.6" fill="#ff008d"/>
<rect x="947" y="312" width="6.6" height="6.6" fill="#ff0082"/>
<rect x="953" y="312" width="6.6" height="6.6" fill="#ff0078"/>
<rect x="959" y="312" width="6.6" height="6.6" fill="#ff0070"/>
<rect x="965" y="312" width="6.6" height="6.6" fill="#ff0068"/>
<rect x="761" y="318" width="6.6" height="6.6" fill="#002aff"/>
<rect x="767" y="318" width="6.6" height="6.6" fill="#0028ff"/>
<rect x="773" y="318" width="6.6" height="6.6" fill="#0025ff"/>
<rect x="779" y="318" width="6.6" height="6.6" fill="#0023ff"/>
<rect x="785" y="318" width="6.6" height="6.6" fill="#0020ff"/>
<rect x="791" y="318" width="6.6" height="6.6" fill="#001eff"/>
<rect x="797" y="318" width="6.6" height="6.6" fill="#001bff"/>
<rect x="803" y="318" width="6.6" height="6.6" fill="#0019ff"/>
<rect x="809" y="318" width="6.6" height="6.6" fill="#0016ff"/>
<rect x="815" y="318" width="6.6" height="6.6" fill="#0414ff"/>
<rect x="821" y="318" width="6.6" height="6.6" fill="#1417ff"/>
<rect x="827" y="318" width="6.6" height="6.6" fill="#1e17ff"/>
<rect x="833" y="318" width="6.6" height="6.6" fill="#2913ff"/>
<rect x="839" y="318" width="6.6" height="6.6" fill="#350fff"/>
<rect x="845" y="318" width="6.6" height="6.6" fill="#430aff"/>
<rect x="851" y="318" width="6.6" height="6.6" fill="#5206ff"/>
<rect x="857" y="318" width="6.6" height="6.6" fill="#6201ff"/>
<rect x="863" y="318" width="6.6" height="6.6" fill="#7400ff"/>
<rect x="869" y="318" width="6.6" height="6.6" fill="#8600ff"/>
<rect x="875" y="318" width="6.6" height="6.6" fill="#9a00ff"/>
<rect x="881" y="318" width="6.6" height="6.6" fill="#af00ff"/>
<rect x="887" y="318" width="6.6" height="6.6" fill="#c500ff"/>
<rect x="893" y="318" width="6.6" height="6.6" fill="#dc00ff"/>
<rect x="899" y="318" width="6.6" height="6.6" fill="#f400ff"/>
<rect x="905" y="318" width="6.6" height="6.6" fill="#ff00f1"/>
<rect x="911" y="318" width="6.6" height="6.6" fill="#ff00db"/>
<rect x="917" y="318" width="6.6" height="6.6" fill="#ff00c8"/>
<rect x="923" y="318" width="6.6" height="6.6" fill="#ff00b8"/>
<rect x="929" y="318" width="6.6" height="6.6" fill="#ff00a9"/>
<rect x="935" y="318" width="6.6" height="6.6" fill="#ff009c"/>
<rect x="941" y="318" width="6.6" height="6.6" fill="#ff0090"/>
<rect x="947" y="318" width="6.6" height="6.6" fill="#ff0085"/>
<rect x="767" y="324" width="6.6" height="6.6" fill="#001fff"/>
<rect x="773" y="324" width="6.6" height="6.6" fill="#001dff"/>
<rect x="779" y="324" width="6.6" height="6.6" fill="#001bff"/>
<rect x="785" y="324" width="6.6" height="6.6" fill="#0018ff"/>
<rect x="791" y="324" width="6.6" height="6.6" fill="#0016ff"/>
<rect x="797" y="324" width="6.6" height="6.6" fill="#0013ff"/>
<rect x="803" y="324" width="6.6" height="6.6" fill="#0010ff"/>
<rect x="809" y="324" width="6.6" height="6.6" fill="#000eff"/>
<rect x="815" y="324" width="6.6" height="6.6" fill="#0a0fff"/>
<rect x="821" y="324" width="6.6" height="6.6" fill="#1510ff"/>
<rect x="827" y="324" width="6.6" height="6.6" fill="#1e0cff"/>
<rect x="833" y="324" width="6.6" height="6.6" fill="#2a08ff"/>
<rect x="839" y="324" width="6.6" height="6.6" fill="#3603ff"/>
<rect x="845" y="324" width="6.6" height="6.6" fill="#4400ff"/>
<rect x="851" y="324" width="6.6" height="6.6" fill="#5400ff"/>
<rect x="857" y="324" width="6.6" height="6.6" fill="#6500ff"/>
<rect x="863" y="324" width="6.6" height="6.6" fill="#7600ff"/>
<rect x="869" y="324" width="6.6" height="6.6" fill="#8800ff"/>
<rect x="875" y="324" width="6.6" height="6.6" fill="#9c00ff"/>
<rect x="881" y="324" width="6.6" height="6.6" fill="#b000ff"/>
<rect x="887" y="324" width="6.6" height="6.6" fill="#c500ff"/>
<rect x="893" y="324" width="6.6" height="6.6" fill="#dc00ff"/>
<rect x="899" y="324" width="6.6" height="6.6" fill="#f300ff"/>
<rect x="905" y="324" width="6.6" height="6.6" fill="#ff00f3"/>
<rect x="911" y="324" width="6.6" height="6.6" fill="#ff00de"/>
<rect x="917" y="324" width="6.6" height="6.6" fill="#ff00cb"/>
<rect x="923" y="324" width="6.6" height="6.6" fill="#ff00ba"/>
<rect x="929" y="324" width="6.6" height="6.6" fill="#ff00ac"/>
<rect x="767" y="330" width="6.6" height="6.6" fill="#0018ff"/>
<rect x="773" y="330" width="6.6" height="6.6" fill="#0015ff"/>
<rect x="779" y="330" width="6.6" height="6.6" fill="#0013ff"/>
<rect x="785" y="330" width="6.6" height="6.6" fill="#0011ff"/>
<rect x="791" y="330" width="6.6" height="6.6" fill="#000eff"/>
<rect x="797" y="330" width="6.6" height="6.6" fill="#000cff"/>
<rect x="803" y="330" width="6.6" height="6.6" fill="#0009ff"/>
<rect x="809" y="330" width="6.6" height="6.6" fill="#0007ff"/>
<rect x="815" y="330" width="6.6" height="6.6" fill="#0c09ff"/>
<rect x="821" y="330" width="6.6" height="6.6" fill="#1505ff"/>
<rect x="827" y="330" width="6.6" height="6.6" fill="#1f01ff"/>
<rect x="833" y="330" width="6.6" height="6.6" fill="#2c00ff"/>
<rect x="839" y="330" width="6.6" height="6.6" fill="#3900ff"/>
<rect x="845" y="330" width="6.6" height="6.6" fill="#4800ff"/>
<rect x="851" y="330" width="6.6" height="6.6" fill="#5700ff"/>
<rect x="857" y="330" width="6.6" height="6.6" fill="#6700ff"/>
<rect x="863" y="330" width="6.6" height="6.6" fill="#7800ff"/>
<rect x="869" y="330" width="6.6" height="6.6" fill="#8a00ff"/>
<rect x="875" y="330" width="6.6" height="6.6" fill="#9d00ff"/>
<rect x="881" y="330" width="6.6" height="6.6" fill="#b100ff"/>
<rect x="887" y="330" width="6.6" height="6.6" fill="#c500ff"/>
<rect x="893" y="330" width="6.6" height="6.6" fill="#db00ff"/>
<rect x="899" y="330" width="6.6" height="6.6" fill="#f200ff"/>
<rect x="905" y="330" width="6.6" height="6.6" fill="#ff00f5"/>
<rect x="911" y="330" width="6.6" height="6.6" fill="#ff00e0"/>
<rect x="773" y="336" width="6.6" height="6.6" fill="#000eff"/>
<rect x="779" y="336" width="6.6" height="6.6" fill="#000cff"/>
<rect x="785" y="336" width="6.6" height="6.6" fill="#000aff"/>
<rect x="791" y="336" width="6.6" height="6.6" fill="#0007ff"/>
<rect x="797" y="336" width="6.6" height="6.6" fill="#0005ff"/>
<rect x="803" y="336" width="6.6" height="6.6" fill="#0003ff"/>
<rect x="809" y="336" width="6.6" height="6.6" fill="#0403ff"/>
<rect x="815" y="336" width="6.6" height="6.6" fill="#0c00ff"/>
<rect x="821" y="336" width="6.6" height="6.6" fill="#1700ff"/>
<rect x="827" y="336" width="6.6" height="6.6" fill="#2200ff"/>
<rect x="833" y="336" width="6.6" height="6.6" fill="#2f00ff"/>
<rect x="839" y="336" width="6.6" height="6.6" fill="#3c00ff"/>
<rect x="845" y="336" width="6.6" height="6.6" fill="#4b00ff"/>
<rect x="851" y="336" width="6.6" height="6.6" fill="#5a00ff"/>
<rect x="857" y="336" width="6.6" height="6.6" fill="#6a00ff"/>
<rect x="863" y="336" width="6.6" height="6.6" fill="#7a00ff"/>
<rect x="869" y="336" width="6.6" height="6.6" fill="#8c00ff"/>
<rect x="875" y="336" width="6.6" height="6.6" fill="#9e00ff"/>
<rect x="881" y="336" width="6.6" height="6.6" fill="#b200ff"/>
<rect x="887" y="336" width="6.6" height="6.6" fill="#c600ff"/>
<rect x="893" y="336" width="6.6" height="6.6" fill="#db00ff"/>
<rect x="773" y="342" width="6.6" height="6.6" fill="#0008ff"/>
<rect x="779" y="342" width="6.6" height="6.6" fill="#0006ff"/>
<rect x="785" y="342" width="6.6" height="6.6" fill="#0004ff"/>
<rect x="791" y="342" width="6.6" height="6.6" fill="#0002ff"/>
<rect x="797" y="342" width="12.6" height="6.6" fill="#0000ff"/>
<rect x="809" y="342" width="6.6" height="6.6" fill="#0600ff"/>
<rect x="815" y="342" width="6.6" height="6.6" fill="#0f00ff"/>
<rect x="821" y="342" width="6.6" height="6.6" fill="#1a00ff"/>
<rect x="827" y="342" width="6.6" height="6.6" fill="#2600ff"/>
<rect x="833" y="342" width="6.6" height="6.6" fill="#3200ff"/>
<rect x="839" y="342" width="6.6" height="6.6" fill="#4000ff"/>
<rect x="845" y="342" width="6.6" height="6.6" fill="#4e00ff"/>
<rect x="851" y="342" width="6.6" height="6.6" fill="#5d00ff"/>
<rect x="857" y="342" width="6.6" height="6.6" fill="#6c00ff"/>
<rect x="863" y="342" width="6.6" height="6.6" fill="#7c00ff"/>
<rect x="869" y="342" width="6.6" height="6.6" fill="#8e00ff"/>
<rect x="875" y="342" width="6.6" height="6.6" fill="#9f00ff"/>
<rect x="779" y="348" width="6.6" height="6.6" fill="#0001ff"/>
<rect x="785" y="348" width="18.6" height="6.6" fill="#0000ff"/>
<rect x="803" y="348" width="6.6" height="6.6" fill="#0100ff"/>
<rect x="809" y="348" width="6.6" height="6.6" fill="#0900ff"/>
<rect x="815" y="348" width="6.6" height="6.6" fill="#1300ff"/>
<rect x="821" y="348" width="6.6" height="6.6" fill="#1e00ff"/>
<rect x="827" y="348" width="6.6" height="6.6" fill="#2900ff"/>
<rect x="833" y="348" width="6.6" height="6.6" fill="#3600ff"/>
<rect x="839" y="348" width="6.6" height="6.6" fill="#4300ff"/>
<rect x="845" y="348" width="6.6" height="6.6" fill="#5100ff"/>
<rect x="851" y="348" width="6.6" height="6.6" fill="#5f00ff"/>
<rect x="857" y="348" width="6.6" height="6.6" fill="#6e00ff"/>
<rect x="785" y="354" width="18.6" height="6.6" fill="#0000ff"/>
<rect x="803" y="354" width="6.6" height="6.6" fill="#0400ff"/>
<rect x="809" y="354" width="6.6" height="6.6" fill="#0c00ff"/>
<rect x="815" y="354" width="6.6" height="6.6" fill="#1600ff"/>
<rect x="821" y="354" width="6.6" height="6.6" fill="#2100ff"/>
<rect x="827" y="354" width="6.6" height="6.6" fill="#2c00ff"/>
<rect x="833" y="354" width="6.6" height="6.6" fill="#3900ff"/>
<rect x="839" y="354" width="6.6" height="6.6" fill="#4600ff"/>
<rect x="791" y="360" width="12.6" height="6.6" fill="#0000ff"/>
<rect x="803" y="360" width="6.6" height="6.6" fill="#0700ff"/>
<rect x="809" y="360" width="6.6" height="6.6" fill="#1000ff"/>
<rect x="815" y="360" width="6.6" height="6.6" fill="#1900ff"/>
<rect x="821" y="360" width="6.6" height="6.6" fill="#2400ff"/>
<rect x="827" y="360" width="6.6" height="6.6" fill="#3000ff"/>
<rect x="797" y="366" width="6.6" height="6.6" fill="#0000ff"/>
<rect x="803" y="366" width="6.6" height="6.6" fill="#0700ff"/>
<rect x="809" y="366" width="6.6" height="6.6" fill="#1000ff"/>
<rect x="815" y="366" width="6.6" height="6.6" fill="#1a00ff"/>
<rect x="821" y="366" width="6.6" height="6.6" fill="#2500ff"/>
<rect x="827" y="366" width="6.6" height="6.6" fill="#3000ff"/>
<rect x="803" y="372" width="6.6" height="6.6" fill="#0700ff"/>
<rect x="809" y="372" width="6.6" height="6.6" fill="#1000ff"/>
<rect x="815" y="372" width="6.6" height="6.6" fill="#1a00ff"/>
<rect x="821" y="372" width="6.6" height="6.6" fill="#2500ff"/>
<rect x="827" y="372" width="6.6" height="6.6" fill="#3000ff"/>
</g></g>
</defs>
<g opacity=".999">
<rect width="1200" height="595" fill="#333333"/>
<rect width="1200" height="3.4" fill="#2a2a2a"/>
<text x="15.8" y="40.3" font-size="27" fill="#f4f4f4" textLength="171.5" lengthAdjust="spacingAndGlyphs">ColorChecker</text>
<text x="17" y="60" font-size="11.5" fill="#f0f0f0" textLength="239" lengthAdjust="spacingAndGlyphs">Display analysis is performed with the X-Rite/</text>
<text x="17" y="75" font-size="11.5" fill="#f0f0f0" textLength="196.5" lengthAdjust="spacingAndGlyphs">Pantone ColorChecker<tspan font-size="7" dy="-3.6">®</tspan><tspan dy="3.6"> target colors.</tspan></text>
<rect x="14.5" y="105.5" width="240.0" height="216.0" fill="#262626"/>
<line x1="14.5" y1="105.5" x2="14.5" y2="324.0" stroke="#888888" stroke-width="1"/>
<text x="14.5" y="337" font-size="10" fill="#d6d6d6" text-anchor="middle">0</text>
<line x1="46.5" y1="105.5" x2="46.5" y2="324.0" stroke="#888888" stroke-width="1"/>
<text x="46.5" y="337" font-size="10" fill="#d6d6d6" text-anchor="middle">2</text>
<line x1="78.5" y1="105.5" x2="78.5" y2="324.0" stroke="#888888" stroke-width="1"/>
<text x="78.5" y="337" font-size="10" fill="#d6d6d6" text-anchor="middle">4</text>
<line x1="110.5" y1="105.5" x2="110.5" y2="324.0" stroke="#888888" stroke-width="1"/>
<text x="110.5" y="337" font-size="10" fill="#d6d6d6" text-anchor="middle">6</text>
<line x1="142.5" y1="105.5" x2="142.5" y2="324.0" stroke="#888888" stroke-width="1"/>
<text x="142.5" y="337" font-size="10" fill="#d6d6d6" text-anchor="middle">8</text>
<line x1="174.5" y1="105.5" x2="174.5" y2="324.0" stroke="#888888" stroke-width="1"/>
<text x="174.5" y="337" font-size="10" fill="#d6d6d6" text-anchor="middle">10</text>
<line x1="206.5" y1="105.5" x2="206.5" y2="324.0" stroke="#888888" stroke-width="1"/>
<text x="206.5" y="337" font-size="10" fill="#d6d6d6" text-anchor="middle">12</text>
<line x1="238.5" y1="105.5" x2="238.5" y2="324.0" stroke="#888888" stroke-width="1"/>
<text x="238.5" y="337" font-size="10" fill="#d6d6d6" text-anchor="middle">14</text>
<path d="M14.5 321.5H254.5V105.5H14.5" fill="none" stroke="#888888" stroke-width="1"/>
<text x="135" y="101.5" font-size="10" fill="#d6d6d6" text-anchor="middle" textLength="58.5" lengthAdjust="spacingAndGlyphs">DeltaE 2000</text>
<rect x="14.5" y="106.0" width="11.6" height="6" rx="1.2" fill="#000" opacity=".85"/>
<rect x="15.0" y="106.8" width="10.1" height="4.4" rx="1" fill="#e8e020"/>
<rect x="15.0" y="106.8" width="10.1" height="4.4" rx="1" fill="url(#gbar)"/>
<rect x="14.5" y="113.2" width="7.7" height="6" rx="1.2" fill="#000" opacity=".85"/>
<rect x="15.0" y="114.0" width="6.2" height="4.4" rx="1" fill="#d028c8"/>
<rect x="15.0" y="114.0" width="6.2" height="4.4" rx="1" fill="url(#gbar)"/>
<rect x="14.5" y="120.4" width="22.8" height="6" rx="1.2" fill="#000" opacity=".85"/>
<rect x="15.0" y="121.2" width="21.3" height="4.4" rx="1" fill="#20c8d8"/>
<rect x="15.0" y="121.2" width="21.3" height="4.4" rx="1" fill="url(#gbar)"/>
<rect x="14.5" y="127.6" width="10.3" height="6" rx="1.2" fill="#000" opacity=".85"/>
<rect x="15.0" y="128.4" width="8.8" height="4.4" rx="1" fill="#1828d0"/>
<rect x="15.0" y="128.4" width="8.8" height="4.4" rx="1" fill="url(#gbar)"/>
<rect x="14.5" y="134.8" width="10.6" height="6" rx="1.2" fill="#000" opacity=".85"/>
<rect x="15.0" y="135.6" width="9.1" height="4.4" rx="1" fill="#28c828"/>
<rect x="15.0" y="135.6" width="9.1" height="4.4" rx="1" fill="url(#gbar)"/>
<rect x="14.5" y="142.0" width="6.3" height="6" rx="1.2" fill="#000" opacity=".85"/>
<rect x="15.0" y="142.8" width="4.8" height="4.4" rx="1" fill="#c02020"/>
<rect x="15.0" y="142.8" width="4.8" height="4.4" rx="1" fill="url(#gbar)"/>
<rect x="14.5" y="149.2" width="22.0" height="6" rx="1.2" fill="#000" opacity=".85"/>
<rect x="15.0" y="150.0" width="20.5" height="4.4" rx="1" fill="#2898b8"/>
<rect x="15.0" y="150.0" width="20.5" height="4.4" rx="1" fill="url(#gbar)"/>
<rect x="14.5" y="156.4" width="14.6" height="6" rx="1.2" fill="#000" opacity=".85"/>
<rect x="15.0" y="157.2" width="13.1" height="4.4" rx="1" fill="#c05890"/>
<rect x="15.0" y="157.2" width="13.1" height="4.4" rx="1" fill="url(#gbar)"/>
<rect x="14.5" y="163.6" width="11.7" height="6" rx="1.2" fill="#000" opacity=".85"/>
<rect x="15.0" y="164.4" width="10.2" height="4.4" rx="1" fill="#d8c850"/>
<rect x="15.0" y="164.4" width="10.2" height="4.4" rx="1" fill="url(#gbar)"/>
<rect x="14.5" y="170.8" width="11.9" height="6" rx="1.2" fill="#000" opacity=".85"/>
<rect x="15.0" y="171.6" width="10.4" height="4.4" rx="1" fill="#b84040"/>
<rect x="15.0" y="171.6" width="10.4" height="4.4" rx="1" fill="url(#gbar)"/>
<rect x="14.5" y="178.0" width="5.8" height="6" rx="1.2" fill="#000" opacity=".85"/>
<rect x="15.0" y="178.8" width="4.3" height="4.4" rx="1" fill="#508850"/>
<rect x="15.0" y="178.8" width="4.3" height="4.4" rx="1" fill="url(#gbar)"/>
<rect x="14.5" y="185.2" width="22.0" height="6" rx="1.2" fill="#000" opacity=".85"/>
<rect x="15.0" y="186.0" width="20.5" height="4.4" rx="1" fill="#3838a0"/>
<rect x="15.0" y="186.0" width="20.5" height="4.4" rx="1" fill="url(#gbar)"/>
<rect x="14.5" y="192.4" width="10.6" height="6" rx="1.2" fill="#000" opacity=".85"/>
<rect x="15.0" y="193.2" width="9.1" height="4.4" rx="1" fill="#d8a860"/>
<rect x="15.0" y="193.2" width="9.1" height="4.4" rx="1" fill="url(#gbar)"/>
<rect x="14.5" y="199.6" width="12.7" height="6" rx="1.2" fill="#000" opacity=".85"/>
<rect x="15.0" y="200.4" width="11.2" height="4.4" rx="1" fill="#a8c050"/>
<rect x="15.0" y="200.4" width="11.2" height="4.4" rx="1" fill="url(#gbar)"/>
<rect x="14.5" y="206.8" width="19.7" height="6" rx="1.2" fill="#000" opacity=".85"/>
<rect x="15.0" y="207.6" width="18.2" height="4.4" rx="1" fill="#58407c"/>
<rect x="15.0" y="207.6" width="18.2" height="4.4" rx="1" fill="url(#gbar)"/>
<rect x="14.5" y="214.0" width="9.6" height="6" rx="1.2" fill="#000" opacity=".85"/>
<rect x="15.0" y="214.8" width="8.1" height="4.4" rx="1" fill="#c06058"/>
<rect x="15.0" y="214.8" width="8.1" height="4.4" rx="1" fill="url(#gbar)"/>
<rect x="14.5" y="221.2" width="16.5" height="6" rx="1.2" fill="#000" opacity=".85"/>
<rect x="15.0" y="222.0" width="15.0" height="4.4" rx="1" fill="#4050a8"/>
<rect x="15.0" y="222.0" width="15.0" height="4.4" rx="1" fill="url(#gbar)"/>
<rect x="14.5" y="228.4" width="8.6" height="6" rx="1.2" fill="#000" opacity=".85"/>
<rect x="15.0" y="229.2" width="7.1" height="4.4" rx="1" fill="#d08050"/>
<rect x="15.0" y="229.2" width="7.1" height="4.4" rx="1" fill="url(#gbar)"/>
<rect x="14.5" y="235.6" width="24.3" height="6" rx="1.2" fill="#000" opacity=".85"/>
<rect x="15.0" y="236.4" width="22.8" height="4.4" rx="1" fill="#68b098"/>
<rect x="15.0" y="236.4" width="22.8" height="4.4" rx="1" fill="url(#gbar)"/>
<rect x="14.5" y="242.8" width="18.2" height="6" rx="1.2" fill="#000" opacity=".85"/>
<rect x="15.0" y="243.6" width="16.7" height="4.4" rx="1" fill="#8080b8"/>
<rect x="15.0" y="243.6" width="16.7" height="4.4" rx="1" fill="url(#gbar)"/>
<rect x="14.5" y="250.0" width="8.4" height="6" rx="1.2" fill="#000" opacity=".85"/>
<rect x="15.0" y="250.8" width="6.9" height="4.4" rx="1" fill="#506838"/>
<rect x="15.0" y="250.8" width="6.9" height="4.4" rx="1" fill="url(#gbar)"/>
<rect x="14.5" y="257.2" width="26.0" height="6" rx="1.2" fill="#000" opacity=".85"/>
<rect x="15.0" y="258.0" width="24.5" height="4.4" rx="1" fill="#5878a0"/>
<rect x="15.0" y="258.0" width="24.5" height="4.4" rx="1" fill="url(#gbar)"/>
<rect x="14.5" y="264.4" width="19.7" height="6" rx="1.2" fill="#000" opacity=".85"/>
<rect x="15.0" y="265.2" width="18.2" height="4.4" rx="1" fill="#b89078"/>
<rect x="15.0" y="265.2" width="18.2" height="4.4" rx="1" fill="url(#gbar)"/>
<rect x="14.5" y="271.6" width="19.9" height="6" rx="1.2" fill="#000" opacity=".85"/>
<rect x="15.0" y="272.4" width="18.4" height="4.4" rx="1" fill="#705848"/>
<rect x="15.0" y="272.4" width="18.4" height="4.4" rx="1" fill="url(#gbar)"/>
<rect x="14.5" y="278.8" width="23.6" height="6" rx="1.2" fill="#000" opacity=".85"/>
<rect x="15.0" y="279.6" width="22.1" height="4.4" rx="1" fill="#080808"/>
<rect x="15.0" y="279.6" width="22.1" height="4.4" rx="1" fill="url(#gbar)"/>
<rect x="14.5" y="286.0" width="37.2" height="6" rx="1.2" fill="#000" opacity=".85"/>
<rect x="15.0" y="286.8" width="35.7" height="4.4" rx="1" fill="#a0a0a0"/>
<rect x="15.0" y="286.8" width="35.7" height="4.4" rx="1" fill="url(#gbar)"/>
<rect x="14.5" y="293.2" width="40.7" height="6" rx="1.2" fill="#000" opacity=".85"/>
<rect x="15.0" y="294.0" width="39.2" height="4.4" rx="1" fill="#bcbcbc"/>
<rect x="15.0" y="294.0" width="39.2" height="4.4" rx="1" fill="url(#gbar)"/>
<rect x="14.5" y="300.4" width="44.3" height="6" rx="1.2" fill="#000" opacity=".85"/>
<rect x="15.0" y="301.2" width="42.8" height="4.4" rx="1" fill="#d4d4d4"/>
<rect x="15.0" y="301.2" width="42.8" height="4.4" rx="1" fill="url(#gbar)"/>
<rect x="14.5" y="307.6" width="46.1" height="6" rx="1.2" fill="#000" opacity=".85"/>
<rect x="15.0" y="308.4" width="44.6" height="4.4" rx="1" fill="#e6e6e6"/>
<rect x="15.0" y="308.4" width="44.6" height="4.4" rx="1" fill="url(#gbar)"/>
<rect x="14.5" y="314.8" width="45.8" height="6" rx="1.2" fill="#000" opacity=".85"/>
<rect x="15.0" y="315.6" width="44.3" height="4.4" rx="1" fill="#ffffff"/>
<rect x="15.0" y="315.6" width="44.3" height="4.4" rx="1" fill="url(#gbar)"/>
<text x="139.5" y="365.2" font-size="19.5" fill="#f2f2f2" text-anchor="middle" textLength="157.5" lengthAdjust="spacingAndGlyphs">Avg dE2000: 1.2</text>
<text x="140" y="392.5" font-size="19.5" fill="#f2f2f2" text-anchor="middle" textLength="163.5" lengthAdjust="spacingAndGlyphs">Max dE2000: 2.8</text>
<rect x="288" y="31.5" width="109" height="229.6" fill="#262626"/>
<line x1="285.5" y1="31.5" x2="397" y2="31.5" stroke="#888888" stroke-width="1"/>
<text x="284" y="35.1" font-size="10" fill="#d6d6d6" text-anchor="end">4</text>
<line x1="285.5" y1="60.2" x2="397" y2="60.2" stroke="#888888" stroke-width="1"/>
<text x="284" y="63.8" font-size="10" fill="#d6d6d6" text-anchor="end">3</text>
<line x1="285.5" y1="88.9" x2="397" y2="88.9" stroke="#888888" stroke-width="1"/>
<text x="284" y="92.5" font-size="10" fill="#d6d6d6" text-anchor="end">2</text>
<line x1="285.5" y1="117.6" x2="397" y2="117.6" stroke="#888888" stroke-width="1"/>
<text x="284" y="121.2" font-size="10" fill="#d6d6d6" text-anchor="end">1</text>
<line x1="285.5" y1="146.3" x2="397" y2="146.3" stroke="#888888" stroke-width="1"/>
<text x="284" y="149.9" font-size="10" fill="#d6d6d6" text-anchor="end">0</text>
<line x1="285.5" y1="175.0" x2="397" y2="175.0" stroke="#888888" stroke-width="1"/>
<text x="284" y="178.6" font-size="10" fill="#d6d6d6" text-anchor="end">-1</text>
<line x1="285.5" y1="203.7" x2="397" y2="203.7" stroke="#888888" stroke-width="1"/>
<text x="284" y="207.3" font-size="10" fill="#d6d6d6" text-anchor="end">-2</text>
<line x1="285.5" y1="232.4" x2="397" y2="232.4" stroke="#888888" stroke-width="1"/>
<text x="284" y="236.0" font-size="10" fill="#d6d6d6" text-anchor="end">-3</text>
<line x1="285.5" y1="261.1" x2="397" y2="261.1" stroke="#888888" stroke-width="1"/>
<text x="284" y="264.7" font-size="10" fill="#d6d6d6" text-anchor="end">-4</text>
<path d="M288 31.5V261.1M397 31.5V261.1" fill="none" stroke="#888888" stroke-width="1"/>
<text x="336.5" y="27.5" font-size="10.2" fill="#d6d6d6" text-anchor="middle" textLength="29.8" lengthAdjust="spacingAndGlyphs">DeltaL</text>
<rect x="298.3" y="129.1" width="87.5" height="17.2" rx="1.5" fill="url(#gblk)"/>
<rect x="298.8" y="129.6" width="86.5" height="16.2" rx="1.5" fill="none" stroke="#3a3a3a" stroke-width=".8" opacity=".8"/>
<rect x="429" y="31.5" width="109.5" height="229.6" fill="#262626"/>
<line x1="426.5" y1="31.5" x2="538.5" y2="31.5" stroke="#888888" stroke-width="1"/>
<text x="425" y="35.1" font-size="10" fill="#d6d6d6" text-anchor="end">4</text>
<line x1="426.5" y1="60.2" x2="538.5" y2="60.2" stroke="#888888" stroke-width="1"/>
<text x="425" y="63.8" font-size="10" fill="#d6d6d6" text-anchor="end">3</text>
<line x1="426.5" y1="88.9" x2="538.5" y2="88.9" stroke="#888888" stroke-width="1"/>
<text x="425" y="92.5" font-size="10" fill="#d6d6d6" text-anchor="end">2</text>
<line x1="426.5" y1="117.6" x2="538.5" y2="117.6" stroke="#888888" stroke-width="1"/>
<text x="425" y="121.2" font-size="10" fill="#d6d6d6" text-anchor="end">1</text>
<line x1="426.5" y1="146.3" x2="538.5" y2="146.3" stroke="#888888" stroke-width="1"/>
<text x="425" y="149.9" font-size="10" fill="#d6d6d6" text-anchor="end">0</text>
<line x1="426.5" y1="175.0" x2="538.5" y2="175.0" stroke="#888888" stroke-width="1"/>
<text x="425" y="178.6" font-size="10" fill="#d6d6d6" text-anchor="end">-1</text>
<line x1="426.5" y1="203.7" x2="538.5" y2="203.7" stroke="#888888" stroke-width="1"/>
<text x="425" y="207.3" font-size="10" fill="#d6d6d6" text-anchor="end">-2</text>
<line x1="426.5" y1="232.4" x2="538.5" y2="232.4" stroke="#888888" stroke-width="1"/>
<text x="425" y="236.0" font-size="10" fill="#d6d6d6" text-anchor="end">-3</text>
<line x1="426.5" y1="261.1" x2="538.5" y2="261.1" stroke="#888888" stroke-width="1"/>
<text x="425" y="264.7" font-size="10" fill="#d6d6d6" text-anchor="end">-4</text>
<path d="M429 31.5V261.1M538.5 31.5V261.1" fill="none" stroke="#888888" stroke-width="1"/>
<text x="477.75" y="27.5" font-size="10.2" fill="#d6d6d6" text-anchor="middle" textLength="31" lengthAdjust="spacingAndGlyphs">DeltaC</text>
<rect x="439.8" y="106.7" width="87.80000000000001" height="39.6" rx="1.5" fill="url(#gblk)"/>
<rect x="440.3" y="107.2" width="86.80000000000001" height="38.6" rx="1.5" fill="none" stroke="#3a3a3a" stroke-width=".8" opacity=".8"/>
<rect x="570.5" y="31.5" width="110.5" height="229.6" fill="#262626"/>
<line x1="568.0" y1="31.5" x2="681" y2="31.5" stroke="#888888" stroke-width="1"/>
<text x="566.5" y="35.1" font-size="10" fill="#d6d6d6" text-anchor="end">4</text>
<line x1="568.0" y1="60.2" x2="681" y2="60.2" stroke="#888888" stroke-width="1"/>
<text x="566.5" y="63.8" font-size="10" fill="#d6d6d6" text-anchor="end">3</text>
<line x1="568.0" y1="88.9" x2="681" y2="88.9" stroke="#888888" stroke-width="1"/>
<text x="566.5" y="92.5" font-size="10" fill="#d6d6d6" text-anchor="end">2</text>
<line x1="568.0" y1="117.6" x2="681" y2="117.6" stroke="#888888" stroke-width="1"/>
<text x="566.5" y="121.2" font-size="10" fill="#d6d6d6" text-anchor="end">1</text>
<line x1="568.0" y1="146.3" x2="681" y2="146.3" stroke="#888888" stroke-width="1"/>
<text x="566.5" y="149.9" font-size="10" fill="#d6d6d6" text-anchor="end">0</text>
<line x1="568.0" y1="175.0" x2="681" y2="175.0" stroke="#888888" stroke-width="1"/>
<text x="566.5" y="178.6" font-size="10" fill="#d6d6d6" text-anchor="end">-1</text>
<line x1="568.0" y1="203.7" x2="681" y2="203.7" stroke="#888888" stroke-width="1"/>
<text x="566.5" y="207.3" font-size="10" fill="#d6d6d6" text-anchor="end">-2</text>
<line x1="568.0" y1="232.4" x2="681" y2="232.4" stroke="#888888" stroke-width="1"/>
<text x="566.5" y="236.0" font-size="10" fill="#d6d6d6" text-anchor="end">-3</text>
<line x1="568.0" y1="261.1" x2="681" y2="261.1" stroke="#888888" stroke-width="1"/>
<text x="566.5" y="264.7" font-size="10" fill="#d6d6d6" text-anchor="end">-4</text>
<path d="M570.5 31.5V261.1M681 31.5V261.1" fill="none" stroke="#888888" stroke-width="1"/>
<text x="619.75" y="27.5" font-size="10.2" fill="#d6d6d6" text-anchor="middle" textLength="31.8" lengthAdjust="spacingAndGlyphs">DeltaH</text>
<rect x="581" y="145.5" width="88.5" height="1.4" fill="#000"/>
<text x="9.8" y="429.6" font-size="20" fill="#f2f2f2" textLength="159" lengthAdjust="spacingAndGlyphs">Current Reading</text>
<text x="10" y="458.8" font-size="17.3" fill="#f2f2f2" textLength="65" lengthAdjust="spacingAndGlyphs">x: 0.222</text>
<text x="10" y="486.7" font-size="17.3" fill="#f2f2f2" textLength="76" lengthAdjust="spacingAndGlyphs">y: 0.2187</text>
<text x="10" y="514.3" font-size="17.3" fill="#f2f2f2" textLength="61.5" lengthAdjust="spacingAndGlyphs">fL: 0.02</text>
<text x="10" y="542.1" font-size="17.3" fill="#f2f2f2" textLength="95.5" lengthAdjust="spacingAndGlyphs">cd/m²: 0.07</text>
<rect x="269.5" y="269.5" width="425.5" height="110" fill="#000"/>
<rect x="269.5" y="379" width="425.5" height="10.8" fill="#5c5c5c"/>
<rect x="281.5" y="380.2" width="114.5" height="8.6" rx="4.3" fill="#434343"/>
<rect x="270.2" y="379.3" width="9.6" height="10.2" rx="1.5" fill="#8c8c8c"/>
<path d="M277.2 381.4L273 384.4L277.2 387.4Z" fill="#444"/>
<rect x="685.5" y="379.5" width="9.5" height="10" rx="1.5" fill="#8a8a8a"/>
<path d="M688.5 381.5L692.5 384.5L688.5 387.5Z" fill="#444"/>
<rect x="282.0" y="274" width="42.6" height="40" fill="#fdfcff"/>
<rect x="282.0" y="314" width="42.6" height="39.7" fill="#fcfcfd"/>
<rect x="282.5" y="274.5" width="41.6" height="78.7" fill="none" stroke="#e8e8e8" stroke-width="1" opacity=".75"/>
<text x="303.3" y="364.3" font-size="9.1" fill="#f4f4f4" text-anchor="middle" stroke="#f4f4f4" stroke-width=".25">White</text>
<rect x="330.9" y="274" width="42.6" height="40" fill="#e5e3e8"/>
<rect x="330.9" y="314" width="42.6" height="39.7" fill="#e4e4e5"/>
<rect x="331.4" y="274.5" width="41.6" height="78.7" fill="none" stroke="#e8e8e8" stroke-width="1" opacity=".75"/>
<text x="352.2" y="364.3" font-size="9.1" fill="#f4f4f4" text-anchor="middle" stroke="#f4f4f4" stroke-width=".25">Gray 80</text>
<rect x="379.9" y="274" width="42.6" height="40" fill="#d2d0d5"/>
<rect x="379.9" y="314" width="42.6" height="39.7" fill="#d0d0d1"/>
<rect x="380.4" y="274.5" width="41.6" height="78.7" fill="none" stroke="#e8e8e8" stroke-width="1" opacity=".75"/>
<text x="401.2" y="364.3" font-size="9.1" fill="#f4f4f4" text-anchor="middle" stroke="#f4f4f4" stroke-width=".25">Gray 65</text>
<rect x="428.9" y="274" width="42.6" height="40" fill="#bdbbc0"/>
<rect x="428.9" y="314" width="42.6" height="39.7" fill="#bababb"/>
<rect x="429.4" y="274.5" width="41.6" height="78.7" fill="none" stroke="#e8e8e8" stroke-width="1" opacity=".75"/>
<text x="450.2" y="364.3" font-size="9.1" fill="#f4f4f4" text-anchor="middle" stroke="#f4f4f4" stroke-width=".25">Gray 50</text>
<rect x="477.8" y="274" width="42.6" height="40" fill="#a4a3a7"/>
<rect x="477.8" y="314" width="42.6" height="39.7" fill="#a1a1a2"/>
<rect x="478.3" y="274.5" width="41.6" height="78.7" fill="none" stroke="#e8e8e8" stroke-width="1" opacity=".75"/>
<text x="499.1" y="364.3" font-size="9.1" fill="#f4f4f4" text-anchor="middle" stroke="#f4f4f4" stroke-width=".25">Gray 35</text>
<rect x="526.8" y="274" width="42.6" height="40" fill="#010206"/>
<rect x="526.8" y="314" width="42.6" height="39.7" fill="#000000"/>
<rect x="527.2" y="274.5" width="41.6" height="78.7" fill="none" stroke="#e8e8e8" stroke-width="1" opacity=".75"/>
<text x="548.0" y="364.3" font-size="9.1" fill="#f4f4f4" text-anchor="middle" stroke="#f4f4f4" stroke-width=".25">Black</text>
<rect x="575.7" y="274" width="42.6" height="40" fill="#7c5648"/>
<rect x="575.7" y="314" width="42.6" height="39.7" fill="#795345"/>
<rect x="576.2" y="274.5" width="41.6" height="78.7" fill="none" stroke="#e8e8e8" stroke-width="1" opacity=".75"/>
<text x="597.0" y="364.3" font-size="9.1" fill="#f4f4f4" text-anchor="middle" stroke="#f4f4f4" stroke-width=".25">Dark Skin</text>
<rect x="624.7" y="274" width="42.6" height="40" fill="#c99a86"/>
<rect x="624.7" y="314" width="42.6" height="39.7" fill="#c69683"/>
<rect x="625.2" y="274.5" width="41.6" height="78.7" fill="none" stroke="#e8e8e8" stroke-width="1" opacity=".75"/>
<text x="646.0" y="364.3" font-size="9.1" fill="#f4f4f4" text-anchor="middle" stroke="#f4f4f4" stroke-width=".25">Light Skin</text>
<rect x="673.6" y="274" width="21.4" height="40" fill="#5e7ead"/>
<rect x="673.6" y="314" width="21.4" height="39.7" fill="#6080ad"/>
<path d="M695.0 274.5H674.1V353.2H695.0" fill="none" stroke="#e8e8e8" stroke-width="1" opacity=".75"/>
<svg x="673.6" y="350" width="21.4" height="20" overflow="hidden"><text x="21.3" y="14.3" font-size="9.1" fill="#f4f4f4" text-anchor="middle" stroke="#f4f4f4" stroke-width=".25">Blue Sky</text></svg>
<text x="0" y="0" font-size="8.6" fill="#f4f4f4" text-anchor="middle" stroke="#f4f4f4" stroke-width=".25" transform="translate(279 293) rotate(-90)">Actual</text>
<text x="0" y="0" font-size="8.6" fill="#f4f4f4" text-anchor="middle" stroke="#f4f4f4" stroke-width=".25" transform="translate(279 337) rotate(-90)">Target</text>
<rect x="700" y="9.5" width="500" height="380" fill="#000"/>
<rect x="705.5" y="14.5" width="488.5" height="370" fill="#2e2e2e"/>
<rect x="726.5" y="30.5" width="465.5" height="334.7" fill="#262626"/>
<g id="cied">
<g clip-path="url(#cloc)"><use href="#ciem"/></g>
<path d="M821.9 363.8L821.8 363.8L821.8 363.9L821.6 363.9L821.5 363.9L821.3 363.9L821.0 363.9L820.7 363.8L820.4 363.8L820.1 363.6L819.8 363.5L819.5 363.3L819.0 363.0L818.5 362.7L818.0 362.4L817.3 361.9L816.5 361.4L815.6 360.9L814.6 360.3L813.5 359.6L812.2 358.7L810.7 357.8L809.1 356.9L807.3 355.6L805.2 353.9L802.6 351.6L799.7 348.8L796.8 345.7L794.1 342.7L792.0 340.0L790.1 337.4L788.2 334.5L786.1 331.1L783.7 327.2L781.3 323.0L778.7 318.2L775.9 312.8L773.0 306.9L769.8 300.5L766.6 293.4L763.4 285.7L760.1 277.2L756.9 268.1L753.6 258.4L750.4 248.0L747.2 237.0L744.1 225.3L741.0 213.2L738.3 201.1L735.7 188.6L733.4 175.9L731.4 163.2L729.8 150.9L728.5 138.8L727.7 126.9L727.3 115.3L727.4 104.4L728.0 94.0L729.1 84.0L730.8 74.7L732.9 66.3L735.7 58.8L739.0 52.1L742.7 46.4L746.8 41.6L751.3 38.1L756.1 35.6L761.2 33.9L766.5 32.9L771.8 32.8L777.4 33.4L783.0 34.6L788.6 36.0L794.3 37.6L799.9 39.6L805.6 41.8L811.1 44.1L816.6 46.4L821.9 48.8L827.1 51.2L832.4 53.8L837.5 56.4L842.6 59.1L847.7 61.9L852.7 64.7L857.8 67.6L862.8 70.6L867.8 73.6L872.9 76.7L877.8 79.8L882.8 83.0L887.8 86.2L892.7 89.4L897.7 92.7L902.7 96.0L907.6 99.4L912.6 102.8L917.5 106.2L922.5 109.6L927.5 113.0L932.5 116.5L937.4 120.0L942.4 123.5L947.3 126.9L952.2 130.4L957.2 133.9L962.1 137.4L967.0 140.9L971.9 144.4L976.8 147.8L981.6 151.3L986.4 154.7L991.2 158.1L995.9 161.5L1000.6 164.9L1005.3 168.2L1009.9 171.5L1014.5 174.8L1019.0 178.1L1023.4 181.3L1027.8 184.4L1032.2 187.5L1036.4 190.5L1040.6 193.5L1044.7 196.5L1048.7 199.3L1052.6 202.1L1056.4 204.9L1060.1 207.5L1063.6 210.0L1067.0 212.5L1070.3 214.8L1073.5 217.1L1076.6 219.3L1079.6 221.5L1082.5 223.5L1085.3 225.5L1087.8 227.3L1090.0 228.9L1092.3 230.5L1095.1 232.5L1098.4 234.9L1102.2 237.6L1106.0 240.3L1109.3 242.7L1112.0 244.7L1114.4 246.3L1116.5 247.8L1118.4 249.2L1120.2 250.5L1121.8 251.7L1123.3 252.7L1124.6 253.7L1125.8 254.5L1126.8 255.2L1127.7 255.9L1128.5 256.4L1129.2 256.9L1129.7 257.3L1130.2 257.6L1130.7 258.0L1131.4 258.5L1132.2 259.1L1132.8 259.5L1133.3 259.9ZM1102.9 238.1L872.4 90.4L808.5 341.8Z" fill="url(#gdark)" fill-rule="evenodd"/>
</g>
<rect x="867.4" y="85.4" width="10" height="10" fill="#fff" fill-opacity=".10" stroke="#fff" stroke-opacity="0.78" stroke-width="1.25"/>
<rect x="1097.9" y="233.1" width="10" height="10" fill="#fff" fill-opacity=".10" stroke="#fff" stroke-opacity="0.78" stroke-width="1.25"/>
<rect x="803.5" y="336.8" width="10" height="10" fill="#fff" fill-opacity=".10" stroke="#fff" stroke-opacity="0.78" stroke-width="1.25"/>
<rect x="894.1" y="229.7" width="9.6" height="9.6" fill="#fff" fill-opacity=".25" stroke="#111" stroke-width="1.7"/>
<rect x="942.7" y="217.3" width="10" height="10" fill="#fff" fill-opacity=".10" stroke="#fff" stroke-opacity="0.78" stroke-width="1.25"/>
<rect x="930.7" y="219.6" width="10" height="10" fill="#fff" fill-opacity=".10" stroke="#fff" stroke-opacity="0.78" stroke-width="1.25"/>
<rect x="858.5" y="254.1" width="10" height="10" fill="#fff" fill-opacity=".10" stroke="#fff" stroke-opacity="0.78" stroke-width="1.25"/>
<rect x="907.6" y="190.3" width="10" height="10" fill="#fff" fill-opacity=".10" stroke="#fff" stroke-opacity="0.78" stroke-width="1.25"/>
<rect x="868.7" y="259.3" width="10" height="10" fill="#fff" fill-opacity=".10" stroke="#fff" stroke-opacity="0.78" stroke-width="1.25"/>
<rect x="865.5" y="218.6" width="10" height="10" fill="#fff" fill-opacity=".10" stroke="#fff" stroke-opacity="0.78" stroke-width="1.25"/>
<rect x="1004.2" y="198.8" width="10" height="10" fill="#fff" fill-opacity=".10" stroke="#fff" stroke-opacity="0.78" stroke-width="1.25"/>
<rect x="839.5" y="282.9" width="10" height="10" fill="#fff" fill-opacity=".10" stroke="#fff" stroke-opacity="0.78" stroke-width="1.25"/>
<rect x="973.8" y="234.8" width="10" height="10" fill="#fff" fill-opacity=".10" stroke="#fff" stroke-opacity="0.78" stroke-width="1.25"/>
<rect x="879.4" y="270.2" width="10" height="10" fill="#fff" fill-opacity=".10" stroke="#fff" stroke-opacity="0.78" stroke-width="1.25"/>
<rect x="928.9" y="161.2" width="10" height="10" fill="#fff" fill-opacity=".10" stroke="#fff" stroke-opacity="0.78" stroke-width="1.25"/>
<rect x="982.9" y="183.0" width="10" height="10" fill="#fff" fill-opacity=".10" stroke="#fff" stroke-opacity="0.78" stroke-width="1.25"/>
<rect x="827.7" y="303.3" width="10" height="10" fill="#fff" fill-opacity=".10" stroke="#fff" stroke-opacity="0.78" stroke-width="1.25"/>
<rect x="891.2" y="164.9" width="10" height="10" fill="#fff" fill-opacity=".10" stroke="#fff" stroke-opacity="0.78" stroke-width="1.25"/>
<rect x="1019.2" y="232.1" width="10" height="10" fill="#fff" fill-opacity=".10" stroke="#fff" stroke-opacity="0.78" stroke-width="1.25"/>
<rect x="969.8" y="171.2" width="10" height="10" fill="#fff" fill-opacity=".10" stroke="#fff" stroke-opacity="0.78" stroke-width="1.25"/>
<rect x="927.5" y="262.0" width="10" height="10" fill="#fff" fill-opacity=".10" stroke="#fff" stroke-opacity="0.78" stroke-width="1.25"/>
<rect x="830.9" y="253.4" width="10" height="10" fill="#fff" fill-opacity=".10" stroke="#fff" stroke-opacity="0.78" stroke-width="1.25"/>
<rect x="831.8" y="227.5" width="10" height="10" fill="#fff" fill-opacity=".10" stroke="#fff" stroke-opacity="0.78" stroke-width="1.25"/>
<rect x="906.7" y="299.2" width="10" height="10" fill="#fff" fill-opacity=".10" stroke="#fff" stroke-opacity="0.78" stroke-width="1.25"/>
<rect x="963.9" y="146.3" width="10" height="10" fill="#fff" fill-opacity=".10" stroke="#fff" stroke-opacity="0.78" stroke-width="1.25"/>
<circle cx="876.0" cy="94.3" r="3.05" fill="#38c838" stroke="#141414" stroke-width="1"/>
<circle cx="1102.9" cy="238.3" r="3.05" fill="#d01818" stroke="#141414" stroke-width="1"/>
<circle cx="898.1" cy="236.3" r="3.05" fill="#9a9a9a" stroke="#141414" stroke-width="1"/>
<circle cx="950.2" cy="222.2" r="3.05" fill="#6e5a52" stroke="#141414" stroke-width="1"/>
<circle cx="934.9" cy="225.9" r="3.05" fill="#a89088" stroke="#141414" stroke-width="1"/>
<circle cx="861.5" cy="261.9" r="3.05" fill="#7088a8" stroke="#141414" stroke-width="1"/>
<circle cx="913.7" cy="195.3" r="3.05" fill="#4c5a44" stroke="#141414" stroke-width="1"/>
<circle cx="872.2" cy="266.5" r="3.05" fill="#8484a8" stroke="#141414" stroke-width="1"/>
<circle cx="869.9" cy="226.2" r="3.05" fill="#80a8a0" stroke="#141414" stroke-width="1"/>
<circle cx="1011.3" cy="203.8" r="3.05" fill="#c08a5c" stroke="#141414" stroke-width="1"/>
<circle cx="841.8" cy="291.7" r="3.05" fill="#5868a0" stroke="#141414" stroke-width="1"/>
<circle cx="979.7" cy="240.5" r="3.05" fill="#a86870" stroke="#141414" stroke-width="1"/>
<circle cx="882.6" cy="279.4" r="3.05" fill="#685878" stroke="#141414" stroke-width="1"/>
<circle cx="935.7" cy="168.0" r="3.05" fill="#90a060" stroke="#141414" stroke-width="1"/>
<circle cx="987.9" cy="188.9" r="3.05" fill="#d6a244" stroke="#141414" stroke-width="1"/>
<circle cx="828.1" cy="312.7" r="3.05" fill="#404888" stroke="#141414" stroke-width="1"/>
<circle cx="897.1" cy="170.4" r="3.05" fill="#609060" stroke="#141414" stroke-width="1"/>
<circle cx="1029.2" cy="238.0" r="3.05" fill="#984848" stroke="#141414" stroke-width="1"/>
<circle cx="974.8" cy="176.4" r="3.05" fill="#d6c23a" stroke="#141414" stroke-width="1"/>
<circle cx="930.7" cy="269.3" r="3.05" fill="#a06090" stroke="#141414" stroke-width="1"/>
<circle cx="832.7" cy="262.7" r="3.05" fill="#4890a8" stroke="#141414" stroke-width="1"/>
<circle cx="836.8" cy="235.2" r="3.05" fill="#70d0d8" stroke="#141414" stroke-width="1"/>
<circle cx="908.9" cy="305.1" r="3.05" fill="#c060c0" stroke="#141414" stroke-width="1"/>
<circle cx="968.9" cy="153.1" r="3.05" fill="#e4e42c" stroke="#141414" stroke-width="1"/>
<circle cx="848.5" cy="278.5" r="3.05" fill="#000000" stroke="#141414" stroke-width="1"/>
<rect x="726.5" y="30.5" width="465.5" height="334.7" fill="none" stroke="#888888" stroke-width="1"/>
<line x1="726.5" y1="365.2" x2="726.5" y2="368.4" stroke="#888888" stroke-width="1"/>
<text x="726.5" y="380.6" font-size="10" fill="#d6d6d6" text-anchor="middle">0</text>
<line x1="723.3" y1="365.2" x2="726.5" y2="365.2" stroke="#888888" stroke-width="1"/>
<text x="722.0" y="368.8" font-size="10" fill="#d6d6d6" text-anchor="end">0</text>
<line x1="780.8" y1="365.2" x2="780.8" y2="368.4" stroke="#888888" stroke-width="1"/>
<text x="780.8" y="380.6" font-size="10" fill="#d6d6d6" text-anchor="middle">0.1</text>
<line x1="723.3" y1="325.9" x2="726.5" y2="325.9" stroke="#888888" stroke-width="1"/>
<text x="722.0" y="329.5" font-size="10" fill="#d6d6d6" text-anchor="end">0.1</text>
<line x1="836.3" y1="365.2" x2="836.3" y2="368.4" stroke="#888888" stroke-width="1"/>
<text x="836.3" y="380.6" font-size="10" fill="#d6d6d6" text-anchor="middle">0.2</text>
<line x1="723.3" y1="286.0" x2="726.5" y2="286.0" stroke="#888888" stroke-width="1"/>
<text x="722.0" y="289.6" font-size="10" fill="#d6d6d6" text-anchor="end">0.2</text>
<line x1="891.9" y1="365.2" x2="891.9" y2="368.4" stroke="#888888" stroke-width="1"/>
<text x="891.9" y="380.6" font-size="10" fill="#d6d6d6" text-anchor="middle">0.3</text>
<line x1="723.3" y1="246.0" x2="726.5" y2="246.0" stroke="#888888" stroke-width="1"/>
<text x="722.0" y="249.6" font-size="10" fill="#d6d6d6" text-anchor="end">0.3</text>
<line x1="947.4" y1="365.2" x2="947.4" y2="368.4" stroke="#888888" stroke-width="1"/>
<text x="947.4" y="380.6" font-size="10" fill="#d6d6d6" text-anchor="middle">0.4</text>
<line x1="723.3" y1="206.1" x2="726.5" y2="206.1" stroke="#888888" stroke-width="1"/>
<text x="722.0" y="209.7" font-size="10" fill="#d6d6d6" text-anchor="end">0.4</text>
<line x1="1003.0" y1="365.2" x2="1003.0" y2="368.4" stroke="#888888" stroke-width="1"/>
<text x="1003.0" y="380.6" font-size="10" fill="#d6d6d6" text-anchor="middle">0.5</text>
<line x1="723.3" y1="166.2" x2="726.5" y2="166.2" stroke="#888888" stroke-width="1"/>
<text x="722.0" y="169.8" font-size="10" fill="#d6d6d6" text-anchor="end">0.5</text>
<line x1="1058.5" y1="365.2" x2="1058.5" y2="368.4" stroke="#888888" stroke-width="1"/>
<text x="1058.5" y="380.6" font-size="10" fill="#d6d6d6" text-anchor="middle">0.6</text>
<line x1="723.3" y1="126.3" x2="726.5" y2="126.3" stroke="#888888" stroke-width="1"/>
<text x="722.0" y="129.9" font-size="10" fill="#d6d6d6" text-anchor="end">0.6</text>
<line x1="1114.0" y1="365.2" x2="1114.0" y2="368.4" stroke="#888888" stroke-width="1"/>
<text x="1114.0" y="380.6" font-size="10" fill="#d6d6d6" text-anchor="middle">0.7</text>
<line x1="723.3" y1="86.4" x2="726.5" y2="86.4" stroke="#888888" stroke-width="1"/>
<text x="722.0" y="90.0" font-size="10" fill="#d6d6d6" text-anchor="end">0.7</text>
<line x1="1169.6" y1="365.2" x2="1169.6" y2="368.4" stroke="#888888" stroke-width="1"/>
<text x="1169.6" y="380.6" font-size="10" fill="#d6d6d6" text-anchor="middle">0.8</text>
<line x1="723.3" y1="46.4" x2="726.5" y2="46.4" stroke="#888888" stroke-width="1"/>
<text x="722.0" y="50.0" font-size="10" fill="#d6d6d6" text-anchor="end">0.8</text>
<rect x="1007.5" y="344" width="184" height="19.5" fill="#343434"/>
<text x="1009.5" y="358" font-size="13.2" fill="#f0f0f0" textLength="118.5" lengthAdjust="spacingAndGlyphs">RGB Triplet: 0, 0, 0</text>
<rect x="1029.7" y="34.7" width="157.6" height="126.4" fill="#8a8a8a"/>
<g clip-path="url(#cins)">
<rect x="1030" y="35" width="157" height="126" fill="#262626"/>
<use href="#cied" transform="translate(1108.2 97.6) scale(1.2257 1.36) translate(-898.9 -234.5)"/>
<rect x="1070.7" y="-103.4" width="10" height="10" fill="#fff" fill-opacity=".10" stroke="#fff" stroke-opacity="0.6" stroke-width="1.25"/>
<rect x="1353.3" y="97.5" width="10" height="10" fill="#fff" fill-opacity=".10" stroke="#fff" stroke-opacity="0.6" stroke-width="1.25"/>
<rect x="992.4" y="238.6" width="10" height="10" fill="#fff" fill-opacity=".10" stroke="#fff" stroke-opacity="0.6" stroke-width="1.25"/>
<rect x="1103.4" y="92.8" width="9.6" height="9.6" fill="#fff" fill-opacity=".25" stroke="#111" stroke-width="1.7"/>
<rect x="1163.0" y="76.0" width="10" height="10" fill="#fff" fill-opacity=".10" stroke="#fff" stroke-opacity="0.6" stroke-width="1.25"/>
<rect x="1148.3" y="79.2" width="10" height="10" fill="#fff" fill-opacity=".10" stroke="#fff" stroke-opacity="0.6" stroke-width="1.25"/>
<rect x="1059.8" y="126.2" width="10" height="10" fill="#fff" fill-opacity=".10" stroke="#fff" stroke-opacity="0.6" stroke-width="1.25"/>
<rect x="1119.9" y="39.4" width="10" height="10" fill="#fff" fill-opacity=".10" stroke="#fff" stroke-opacity="0.6" stroke-width="1.25"/>
<rect x="1072.4" y="133.2" width="10" height="10" fill="#fff" fill-opacity=".10" stroke="#fff" stroke-opacity="0.6" stroke-width="1.25"/>
<rect x="1068.3" y="77.9" width="10" height="10" fill="#fff" fill-opacity=".10" stroke="#fff" stroke-opacity="0.6" stroke-width="1.25"/>
<rect x="1238.4" y="50.9" width="10" height="10" fill="#fff" fill-opacity=".10" stroke="#fff" stroke-opacity="0.6" stroke-width="1.25"/>
<rect x="1036.5" y="165.2" width="10" height="10" fill="#fff" fill-opacity=".10" stroke="#fff" stroke-opacity="0.6" stroke-width="1.25"/>
<rect x="1201.1" y="99.9" width="10" height="10" fill="#fff" fill-opacity=".10" stroke="#fff" stroke-opacity="0.6" stroke-width="1.25"/>
<rect x="1085.4" y="148.0" width="10" height="10" fill="#fff" fill-opacity=".10" stroke="#fff" stroke-opacity="0.6" stroke-width="1.25"/>
<rect x="1146.1" y="-0.2" width="10" height="10" fill="#fff" fill-opacity=".10" stroke="#fff" stroke-opacity="0.6" stroke-width="1.25"/>
<rect x="1212.3" y="29.4" width="10" height="10" fill="#fff" fill-opacity=".10" stroke="#fff" stroke-opacity="0.6" stroke-width="1.25"/>
<rect x="1022.0" y="193.0" width="10" height="10" fill="#fff" fill-opacity=".10" stroke="#fff" stroke-opacity="0.6" stroke-width="1.25"/>
<rect x="1099.9" y="4.8" width="10" height="10" fill="#fff" fill-opacity=".10" stroke="#fff" stroke-opacity="0.6" stroke-width="1.25"/>
<rect x="1256.7" y="96.2" width="10" height="10" fill="#fff" fill-opacity=".10" stroke="#fff" stroke-opacity="0.6" stroke-width="1.25"/>
<rect x="1196.2" y="13.4" width="10" height="10" fill="#fff" fill-opacity=".10" stroke="#fff" stroke-opacity="0.6" stroke-width="1.25"/>
<rect x="1144.4" y="136.8" width="10" height="10" fill="#fff" fill-opacity=".10" stroke="#fff" stroke-opacity="0.6" stroke-width="1.25"/>
<rect x="1026.0" y="125.2" width="10" height="10" fill="#fff" fill-opacity=".10" stroke="#fff" stroke-opacity="0.6" stroke-width="1.25"/>
<rect x="1027.1" y="89.9" width="10" height="10" fill="#fff" fill-opacity=".10" stroke="#fff" stroke-opacity="0.6" stroke-width="1.25"/>
<rect x="1118.9" y="187.4" width="10" height="10" fill="#fff" fill-opacity=".10" stroke="#fff" stroke-opacity="0.6" stroke-width="1.25"/>
<rect x="1189.0" y="-20.5" width="10" height="10" fill="#fff" fill-opacity=".10" stroke="#fff" stroke-opacity="0.6" stroke-width="1.25"/>
<circle cx="1080.1" cy="-93.0" r="3.05" fill="#38c838" stroke="#141414" stroke-width="1"/>
<circle cx="1358.3" cy="102.8" r="3.05" fill="#d01818" stroke="#141414" stroke-width="1"/>
<circle cx="1107.2" cy="100.2" r="3.05" fill="#9a9a9a" stroke="#141414" stroke-width="1"/>
<circle cx="1171.1" cy="80.9" r="3.05" fill="#6e5a52" stroke="#141414" stroke-width="1"/>
<circle cx="1152.3" cy="85.9" r="3.05" fill="#a89088" stroke="#141414" stroke-width="1"/>
<circle cx="1062.4" cy="134.9" r="3.05" fill="#7088a8" stroke="#141414" stroke-width="1"/>
<circle cx="1126.4" cy="44.4" r="3.05" fill="#4c5a44" stroke="#141414" stroke-width="1"/>
<circle cx="1075.5" cy="141.2" r="3.05" fill="#8484a8" stroke="#141414" stroke-width="1"/>
<circle cx="1072.7" cy="86.4" r="3.05" fill="#80a8a0" stroke="#141414" stroke-width="1"/>
<circle cx="1246.0" cy="55.9" r="3.05" fill="#c08a5c" stroke="#141414" stroke-width="1"/>
<circle cx="1038.2" cy="175.5" r="3.05" fill="#5868a0" stroke="#141414" stroke-width="1"/>
<circle cx="1207.2" cy="105.7" r="3.05" fill="#a86870" stroke="#141414" stroke-width="1"/>
<circle cx="1088.2" cy="158.7" r="3.05" fill="#685878" stroke="#141414" stroke-width="1"/>
<circle cx="1153.3" cy="7.2" r="3.05" fill="#90a060" stroke="#141414" stroke-width="1"/>
<circle cx="1217.3" cy="35.7" r="3.05" fill="#d6a244" stroke="#141414" stroke-width="1"/>
<circle cx="1021.4" cy="204.0" r="3.05" fill="#404888" stroke="#141414" stroke-width="1"/>
<circle cx="1106.0" cy="10.5" r="3.05" fill="#609060" stroke="#141414" stroke-width="1"/>
<circle cx="1267.9" cy="102.4" r="3.05" fill="#984848" stroke="#141414" stroke-width="1"/>
<circle cx="1201.2" cy="18.6" r="3.05" fill="#d6c23a" stroke="#141414" stroke-width="1"/>
<circle cx="1147.1" cy="145.0" r="3.05" fill="#a06090" stroke="#141414" stroke-width="1"/>
<circle cx="1027.0" cy="136.0" r="3.05" fill="#4890a8" stroke="#141414" stroke-width="1"/>
<circle cx="1032.1" cy="98.6" r="3.05" fill="#70d0d8" stroke="#141414" stroke-width="1"/>
<circle cx="1120.5" cy="193.7" r="3.05" fill="#c060c0" stroke="#141414" stroke-width="1"/>
<circle cx="1194.0" cy="-13.0" r="3.05" fill="#e4e42c" stroke="#141414" stroke-width="1"/>
<circle cx="1046.4" cy="157.5" r="3.05" fill="#000000" stroke="#141414" stroke-width="1"/>
</g>
<text x="962.5" y="27.5" font-size="10" fill="#d6d6d6" text-anchor="middle">CIE xy</text>
<rect x="920" y="19.8" width="45.4" height="46" rx="6.5" fill="#fff"/>
<g transform="translate(920 19.8)" clip-path="url(#clogo)" fill="none" stroke="#1c1c1c" stroke-linejoin="round"><path d="M13.4 6.4Q25 2.2 39.6 4.2" stroke-width="3.8" stroke-linecap="round"/><path d="M40 4.4Q41.2 8.6 33.6 11.8" stroke-width="3" stroke-linecap="round"/><path d="M14.2 5.2C14.8 9.4 19 12.6 22.8 16.2C27.2 20.4 31.8 24.6 31.4 28.8C31 33.2 26 39.4 20.6 47.2" stroke-width="8.2" stroke-linecap="butt"/></g>
<text y="62.5" font-size="56" fill="#fff" fill-opacity=".44" filter="url(#fthin)"><tspan x="976.9" textLength="25.4" lengthAdjust="spacingAndGlyphs">S</tspan><tspan x="999.6" textLength="38.9" lengthAdjust="spacingAndGlyphs">O</tspan><tspan x="1035.6" textLength="40" lengthAdjust="spacingAndGlyphs">O</tspan><tspan x="1072.6" textLength="45.8" lengthAdjust="spacingAndGlyphs">M</tspan><tspan x="1115.7" textLength="34.6" lengthAdjust="spacingAndGlyphs">A</tspan><tspan x="1148.5" textLength="24.2" lengthAdjust="spacingAndGlyphs">L</tspan></text>
<rect x="231.7" y="400.4" width="968.3" height="18.8" fill="url(#ghead)"/>
<rect x="243.3" y="419.2" width="956.7" height="16.8" fill="#3b3b3b"/>
<rect x="231.7" y="419.2" width="11.6" height="16.8" fill="url(#gsel)"/>
<rect x="243.3" y="436.0" width="956.7" height="16.9" fill="#7e7e7e"/>
<rect x="231.7" y="436.0" width="11.6" height="16.9" fill="url(#gsel)"/>
<rect x="243.3" y="452.9" width="956.7" height="17.2" fill="#3b3b3b"/>
<rect x="231.7" y="452.9" width="11.6" height="17.2" fill="url(#gsel)"/>
<rect x="243.3" y="470.1" width="956.7" height="16.5" fill="#7e7e7e"/>
<rect x="231.7" y="470.1" width="11.6" height="16.5" fill="url(#gsel)"/>
<rect x="243.3" y="486.6" width="956.7" height="17.2" fill="#3b3b3b"/>
<rect x="231.7" y="486.6" width="11.6" height="17.2" fill="url(#gsel)"/>
<rect x="243.3" y="503.8" width="956.7" height="16.8" fill="#7e7e7e"/>
<rect x="231.7" y="503.8" width="11.6" height="16.8" fill="url(#gsel)"/>
<rect x="243.3" y="520.6" width="956.7" height="17.0" fill="#3b3b3b"/>
<rect x="231.7" y="520.6" width="11.6" height="17.0" fill="url(#gsel)"/>
<rect x="231.7" y="400.4" width="11.6" height="18.8" fill="#000"/>
<rect x="243.3" y="537.6" width="956.7" height="10.6" fill="#444"/>
<rect x="256" y="539" width="419" height="8.2" rx="4.1" fill="#5c5c5c"/>
<rect x="243.3" y="538.3" width="10" height="9.8" rx="1.5" fill="#868686"/>
<path d="M250.5 540.3L246.5 543.3L250.5 546.3Z" fill="#3c3c3c"/>
<rect x="1184.5" y="538.3" width="10.5" height="9.8" rx="1.5" fill="#868686"/>
<path d="M1188 540.3L1192 543.3L1188 546.3Z" fill="#3c3c3c"/>
<rect x="1196.5" y="400.4" width="3.5" height="148" fill="#2a2a2a"/>
<svg x="0" y="0" width="1196.5" height="595" overflow="hidden">
<text x="351.5" y="414.2" font-size="11.6" fill="#f6f6f6" textLength="33.5" lengthAdjust="spacingAndGlyphs">White</text>
<text x="421" y="414.2" font-size="11.6" fill="#f6f6f6" textLength="43.5" lengthAdjust="spacingAndGlyphs">Gray 80</text>
<text x="482.5" y="414.2" font-size="11.6" fill="#f6f6f6" textLength="43.5" lengthAdjust="spacingAndGlyphs">Gray 65</text>
<text x="543.5" y="414.2" font-size="11.6" fill="#f6f6f6" textLength="43.5" lengthAdjust="spacingAndGlyphs">Gray 50</text>
<text x="605" y="414.2" font-size="11.6" fill="#f6f6f6" textLength="43.5" lengthAdjust="spacingAndGlyphs">Gray 35</text>
<text x="666.5" y="414.2" font-size="11.6" fill="#f6f6f6" textLength="29.5" lengthAdjust="spacingAndGlyphs">Black</text>
<text x="719" y="414.2" font-size="11.6" fill="#f6f6f6" textLength="53" lengthAdjust="spacingAndGlyphs">Dark Skin</text>
<text x="780" y="414.2" font-size="11.6" fill="#f6f6f6" textLength="54" lengthAdjust="spacingAndGlyphs">Light Skin</text>
<text x="841.5" y="414.2" font-size="11.6" fill="#f6f6f6" textLength="47.5" lengthAdjust="spacingAndGlyphs">Blue Sky</text>
<text x="903" y="414.2" font-size="11.6" fill="#f6f6f6" textLength="40" lengthAdjust="spacingAndGlyphs">Foliage</text>
<text x="964" y="414.2" font-size="11.6" fill="#f6f6f6" textLength="67" lengthAdjust="spacingAndGlyphs">Blue Flower</text>
<text x="1038.5" y="414.2" font-size="11.6" fill="#f6f6f6" textLength="72" lengthAdjust="spacingAndGlyphs">Bluish Green</text>
<text x="1118" y="414.2" font-size="11.6" fill="#f6f6f6" textLength="41.5" lengthAdjust="spacingAndGlyphs">Orange</text>
<text x="1180" y="414.2" font-size="11.6" fill="#f6f6f6" textLength="74" lengthAdjust="spacingAndGlyphs">Purplish Blue</text>
<text x="247" y="431.9" font-size="12.2" fill="#f6f6f6" textLength="51" lengthAdjust="spacingAndGlyphs">x: CIE31</text>
<text x="351.5" y="431.9" font-size="12.2" fill="#f6f6f6" textLength="43.2" lengthAdjust="spacingAndGlyphs">0.3115</text>
<text x="421" y="431.9" font-size="12.2" fill="#f6f6f6" textLength="43.2" lengthAdjust="spacingAndGlyphs">0.3114</text>
<text x="482.5" y="431.9" font-size="12.2" fill="#f6f6f6" textLength="43.2" lengthAdjust="spacingAndGlyphs">0.3112</text>
<text x="543.5" y="431.9" font-size="12.2" fill="#f6f6f6" textLength="43.2" lengthAdjust="spacingAndGlyphs">0.3111</text>
<text x="605" y="431.9" font-size="12.2" fill="#f6f6f6" textLength="43.2" lengthAdjust="spacingAndGlyphs">0.3109</text>
<text x="666.5" y="431.9" font-size="12.2" fill="#f6f6f6" textLength="43.2" lengthAdjust="spacingAndGlyphs">0.2220</text>
<text x="719" y="431.9" font-size="12.2" fill="#f6f6f6" textLength="43.2" lengthAdjust="spacingAndGlyphs">0.4051</text>
<text x="780" y="431.9" font-size="12.2" fill="#f6f6f6" textLength="43.2" lengthAdjust="spacingAndGlyphs">0.3775</text>
<text x="841.5" y="431.9" font-size="12.2" fill="#f6f6f6" textLength="43.2" lengthAdjust="spacingAndGlyphs">0.2454</text>
<text x="903" y="431.9" font-size="12.2" fill="#f6f6f6" textLength="43.2" lengthAdjust="spacingAndGlyphs">0.3394</text>
<text x="964" y="431.9" font-size="12.2" fill="#f6f6f6" textLength="43.2" lengthAdjust="spacingAndGlyphs">0.2647</text>
<text x="1038.5" y="431.9" font-size="12.2" fill="#f6f6f6" textLength="43.2" lengthAdjust="spacingAndGlyphs">0.2605</text>
<text x="1118" y="431.9" font-size="12.2" fill="#f6f6f6" textLength="43.2" lengthAdjust="spacingAndGlyphs">0.5151</text>
<text x="1180" y="431.9" font-size="12.2" fill="#f6f6f6" textLength="43.2" lengthAdjust="spacingAndGlyphs">0.2100</text>
<text x="247" y="448.8" font-size="12.2" fill="#f6f6f6" textLength="51" lengthAdjust="spacingAndGlyphs">y: CIE31</text>
<text x="351.5" y="448.8" font-size="12.2" fill="#f6f6f6" textLength="43.2" lengthAdjust="spacingAndGlyphs">0.3247</text>
<text x="421" y="448.8" font-size="12.2" fill="#f6f6f6" textLength="43.2" lengthAdjust="spacingAndGlyphs">0.3244</text>
<text x="482.5" y="448.8" font-size="12.2" fill="#f6f6f6" textLength="43.2" lengthAdjust="spacingAndGlyphs">0.3241</text>
<text x="543.5" y="448.8" font-size="12.2" fill="#f6f6f6" textLength="43.2" lengthAdjust="spacingAndGlyphs">0.3241</text>
<text x="605" y="448.8" font-size="12.2" fill="#f6f6f6" textLength="43.2" lengthAdjust="spacingAndGlyphs">0.3239</text>
<text x="666.5" y="448.8" font-size="12.2" fill="#f6f6f6" textLength="43.2" lengthAdjust="spacingAndGlyphs">0.2187</text>
<text x="719" y="448.8" font-size="12.2" fill="#f6f6f6" textLength="43.2" lengthAdjust="spacingAndGlyphs">0.3597</text>
<text x="780" y="448.8" font-size="12.2" fill="#f6f6f6" textLength="43.2" lengthAdjust="spacingAndGlyphs">0.3505</text>
<text x="841.5" y="448.8" font-size="12.2" fill="#f6f6f6" textLength="43.2" lengthAdjust="spacingAndGlyphs">0.2603</text>
<text x="903" y="448.8" font-size="12.2" fill="#f6f6f6" textLength="43.2" lengthAdjust="spacingAndGlyphs">0.4270</text>
<text x="964" y="448.8" font-size="12.2" fill="#f6f6f6" textLength="43.2" lengthAdjust="spacingAndGlyphs">0.2487</text>
<text x="1038.5" y="448.8" font-size="12.2" fill="#f6f6f6" textLength="43.2" lengthAdjust="spacingAndGlyphs">0.3497</text>
<text x="1118" y="448.8" font-size="12.2" fill="#f6f6f6" textLength="43.2" lengthAdjust="spacingAndGlyphs">0.4059</text>
<text x="1180" y="448.8" font-size="12.2" fill="#f6f6f6" textLength="43.2" lengthAdjust="spacingAndGlyphs">0.1880</text>
<text x="247" y="465.8" font-size="12.2" fill="#f6f6f6" textLength="8" lengthAdjust="spacingAndGlyphs">Y</text>
<text x="351.5" y="465.8" font-size="12.2" fill="#f6f6f6" textLength="59.3" lengthAdjust="spacingAndGlyphs">109.4483</text>
<text x="421" y="465.8" font-size="12.2" fill="#f6f6f6" textLength="51.3" lengthAdjust="spacingAndGlyphs">87.0323</text>
<text x="482.5" y="465.8" font-size="12.2" fill="#f6f6f6" textLength="51.3" lengthAdjust="spacingAndGlyphs">70.1416</text>
<text x="543.5" y="465.8" font-size="12.2" fill="#f6f6f6" textLength="51.3" lengthAdjust="spacingAndGlyphs">54.1073</text>
<text x="605" y="465.8" font-size="12.2" fill="#f6f6f6" textLength="51.3" lengthAdjust="spacingAndGlyphs">37.7463</text>
<text x="666.5" y="465.8" font-size="12.2" fill="#f6f6f6" textLength="43.2" lengthAdjust="spacingAndGlyphs">0.0724</text>
<text x="719" y="465.8" font-size="12.2" fill="#f6f6f6" textLength="51.3" lengthAdjust="spacingAndGlyphs">11.4027</text>
<text x="780" y="465.8" font-size="12.2" fill="#f6f6f6" textLength="51.3" lengthAdjust="spacingAndGlyphs">38.1916</text>
<text x="841.5" y="465.8" font-size="12.2" fill="#f6f6f6" textLength="51.3" lengthAdjust="spacingAndGlyphs">20.6786</text>
<text x="903" y="465.8" font-size="12.2" fill="#f6f6f6" textLength="51.3" lengthAdjust="spacingAndGlyphs">14.1927</text>
<text x="964" y="465.8" font-size="12.2" fill="#f6f6f6" textLength="51.3" lengthAdjust="spacingAndGlyphs">25.4323</text>
<text x="1038.5" y="465.8" font-size="12.2" fill="#f6f6f6" textLength="51.3" lengthAdjust="spacingAndGlyphs">46.1363</text>
<text x="1118" y="465.8" font-size="12.2" fill="#f6f6f6" textLength="51.3" lengthAdjust="spacingAndGlyphs">31.3359</text>
<text x="1180" y="465.8" font-size="12.2" fill="#f6f6f6" textLength="51.3" lengthAdjust="spacingAndGlyphs">12.8041</text>
<text x="247" y="482.7" font-size="12.2" fill="#f6f6f6" textLength="94" lengthAdjust="spacingAndGlyphs">Target x:CIE31</text>
<text x="351.5" y="482.7" font-size="12.2" fill="#f6f6f6" textLength="43.2" lengthAdjust="spacingAndGlyphs">0.3127</text>
<text x="421" y="482.7" font-size="12.2" fill="#f6f6f6" textLength="43.2" lengthAdjust="spacingAndGlyphs">0.3127</text>
<text x="482.5" y="482.7" font-size="12.2" fill="#f6f6f6" textLength="43.2" lengthAdjust="spacingAndGlyphs">0.3127</text>
<text x="543.5" y="482.7" font-size="12.2" fill="#f6f6f6" textLength="43.2" lengthAdjust="spacingAndGlyphs">0.3127</text>
<text x="605" y="482.7" font-size="12.2" fill="#f6f6f6" textLength="43.2" lengthAdjust="spacingAndGlyphs">0.3127</text>
<text x="666.5" y="482.7" font-size="12.2" fill="#f6f6f6" textLength="43.2" lengthAdjust="spacingAndGlyphs">0.3127</text>
<text x="719" y="482.7" font-size="12.2" fill="#f6f6f6" textLength="43.2" lengthAdjust="spacingAndGlyphs">0.4006</text>
<text x="780" y="482.7" font-size="12.2" fill="#f6f6f6" textLength="43.2" lengthAdjust="spacingAndGlyphs">0.3789</text>
<text x="841.5" y="482.7" font-size="12.2" fill="#f6f6f6" textLength="43.2" lengthAdjust="spacingAndGlyphs">0.2489</text>
<text x="903" y="482.7" font-size="12.2" fill="#f6f6f6" textLength="43.2" lengthAdjust="spacingAndGlyphs">0.3373</text>
<text x="964" y="482.7" font-size="12.2" fill="#f6f6f6" textLength="43.2" lengthAdjust="spacingAndGlyphs">0.2674</text>
<text x="1038.5" y="482.7" font-size="12.2" fill="#f6f6f6" textLength="43.2" lengthAdjust="spacingAndGlyphs">0.2615</text>
<text x="1118" y="482.7" font-size="12.2" fill="#f6f6f6" textLength="43.2" lengthAdjust="spacingAndGlyphs">0.5113</text>
<text x="1180" y="482.7" font-size="12.2" fill="#f6f6f6" textLength="43.2" lengthAdjust="spacingAndGlyphs">0.2150</text>
<text x="247" y="499.5" font-size="12.2" fill="#f6f6f6" textLength="94" lengthAdjust="spacingAndGlyphs">Target y:CIE31</text>
<text x="351.5" y="499.5" font-size="12.2" fill="#f6f6f6" textLength="43.2" lengthAdjust="spacingAndGlyphs">0.3290</text>
<text x="421" y="499.5" font-size="12.2" fill="#f6f6f6" textLength="43.2" lengthAdjust="spacingAndGlyphs">0.3290</text>
<text x="482.5" y="499.5" font-size="12.2" fill="#f6f6f6" textLength="43.2" lengthAdjust="spacingAndGlyphs">0.3290</text>
<text x="543.5" y="499.5" font-size="12.2" fill="#f6f6f6" textLength="43.2" lengthAdjust="spacingAndGlyphs">0.3290</text>
<text x="605" y="499.5" font-size="12.2" fill="#f6f6f6" textLength="43.2" lengthAdjust="spacingAndGlyphs">0.3290</text>
<text x="666.5" y="499.5" font-size="12.2" fill="#f6f6f6" textLength="43.2" lengthAdjust="spacingAndGlyphs">0.3290</text>
<text x="719" y="499.5" font-size="12.2" fill="#f6f6f6" textLength="43.2" lengthAdjust="spacingAndGlyphs">0.3595</text>
<text x="780" y="499.5" font-size="12.2" fill="#f6f6f6" textLength="43.2" lengthAdjust="spacingAndGlyphs">0.3537</text>
<text x="841.5" y="499.5" font-size="12.2" fill="#f6f6f6" textLength="43.2" lengthAdjust="spacingAndGlyphs">0.2672</text>
<text x="903" y="499.5" font-size="12.2" fill="#f6f6f6" textLength="43.2" lengthAdjust="spacingAndGlyphs">0.4270</text>
<text x="964" y="499.5" font-size="12.2" fill="#f6f6f6" textLength="43.2" lengthAdjust="spacingAndGlyphs">0.2542</text>
<text x="1038.5" y="499.5" font-size="12.2" fill="#f6f6f6" textLength="43.2" lengthAdjust="spacingAndGlyphs">0.3561</text>
<text x="1118" y="499.5" font-size="12.2" fill="#f6f6f6" textLength="43.2" lengthAdjust="spacingAndGlyphs">0.4058</text>
<text x="1180" y="499.5" font-size="12.2" fill="#f6f6f6" textLength="43.2" lengthAdjust="spacingAndGlyphs">0.1950</text>
<text x="247" y="516.5" font-size="12.2" fill="#f6f6f6" textLength="55" lengthAdjust="spacingAndGlyphs">Target Y</text>
<text x="351.5" y="516.5" font-size="12.2" fill="#f6f6f6" textLength="59.3" lengthAdjust="spacingAndGlyphs">109.4483</text>
<text x="421" y="516.5" font-size="12.2" fill="#f6f6f6" textLength="51.3" lengthAdjust="spacingAndGlyphs">86.6062</text>
<text x="482.5" y="516.5" font-size="12.2" fill="#f6f6f6" textLength="51.3" lengthAdjust="spacingAndGlyphs">69.7839</text>
<text x="543.5" y="516.5" font-size="12.2" fill="#f6f6f6" textLength="51.3" lengthAdjust="spacingAndGlyphs">53.7414</text>
<text x="605" y="516.5" font-size="12.2" fill="#f6f6f6" textLength="51.3" lengthAdjust="spacingAndGlyphs">37.4220</text>
<text x="666.5" y="516.5" font-size="12.2" fill="#f6f6f6" textLength="43.2" lengthAdjust="spacingAndGlyphs">0.0000</text>
<text x="719" y="516.5" font-size="12.2" fill="#f6f6f6" textLength="51.3" lengthAdjust="spacingAndGlyphs">10.8123</text>
<text x="780" y="516.5" font-size="12.2" fill="#f6f6f6" textLength="51.3" lengthAdjust="spacingAndGlyphs">37.4316</text>
<text x="841.5" y="516.5" font-size="12.2" fill="#f6f6f6" textLength="51.3" lengthAdjust="spacingAndGlyphs">20.6254</text>
<text x="903" y="516.5" font-size="12.2" fill="#f6f6f6" textLength="51.3" lengthAdjust="spacingAndGlyphs">14.3603</text>
<text x="964" y="516.5" font-size="12.2" fill="#f6f6f6" textLength="51.3" lengthAdjust="spacingAndGlyphs">25.2862</text>
<text x="1038.5" y="516.5" font-size="12.2" fill="#f6f6f6" textLength="51.3" lengthAdjust="spacingAndGlyphs">45.5859</text>
<text x="1118" y="516.5" font-size="12.2" fill="#f6f6f6" textLength="51.3" lengthAdjust="spacingAndGlyphs">31.0646</text>
<text x="1180" y="516.5" font-size="12.2" fill="#f6f6f6" textLength="51.3" lengthAdjust="spacingAndGlyphs">12.6012</text>
<text x="247" y="533.4" font-size="12.2" fill="#f6f6f6" textLength="54" lengthAdjust="spacingAndGlyphs">ΔE 2000</text>
<text x="351.5" y="533.4" font-size="12.2" fill="#f6f6f6" textLength="43.2" lengthAdjust="spacingAndGlyphs">2.7993</text>
<text x="421" y="533.4" font-size="12.2" fill="#f6f6f6" textLength="43.2" lengthAdjust="spacingAndGlyphs">2.8180</text>
<text x="482.5" y="533.4" font-size="12.2" fill="#f6f6f6" textLength="43.2" lengthAdjust="spacingAndGlyphs">2.7046</text>
<text x="543.5" y="533.4" font-size="12.2" fill="#f6f6f6" textLength="43.2" lengthAdjust="spacingAndGlyphs">2.4832</text>
<text x="605" y="533.4" font-size="12.2" fill="#f6f6f6" textLength="43.2" lengthAdjust="spacingAndGlyphs">2.2618</text>
<text x="666.5" y="533.4" font-size="12.2" fill="#f6f6f6" textLength="43.2" lengthAdjust="spacingAndGlyphs">1.4123</text>
<text x="719" y="533.4" font-size="12.2" fill="#f6f6f6" textLength="43.2" lengthAdjust="spacingAndGlyphs">1.1799</text>
<text x="780" y="533.4" font-size="12.2" fill="#f6f6f6" textLength="43.2" lengthAdjust="spacingAndGlyphs">1.1673</text>
<text x="841.5" y="533.4" font-size="12.2" fill="#f6f6f6" textLength="43.2" lengthAdjust="spacingAndGlyphs">1.5628</text>
<text x="903" y="533.4" font-size="12.2" fill="#f6f6f6" textLength="43.2" lengthAdjust="spacingAndGlyphs">0.4598</text>
<text x="964" y="533.4" font-size="12.2" fill="#f6f6f6" textLength="43.2" lengthAdjust="spacingAndGlyphs">1.0742</text>
<text x="1038.5" y="533.4" font-size="12.2" fill="#f6f6f6" textLength="43.2" lengthAdjust="spacingAndGlyphs">1.4588</text>
<text x="1118" y="533.4" font-size="12.2" fill="#f6f6f6" textLength="43.2" lengthAdjust="spacingAndGlyphs">0.4764</text>
<text x="1180" y="533.4" font-size="12.2" fill="#f6f6f6" textLength="43.2" lengthAdjust="spacingAndGlyphs">1.0311</text>
</svg>
<rect x="0" y="551.5" width="1200" height="43.5" fill="#2b2b2b"/>
<rect x="1.0" y="556.7" width="31.2" height="42" rx="3" fill="url(#gbtn)"/>
<rect x="1.5" y="557.2" width="30.2" height="41" rx="2.6" fill="none" stroke="#c8c8c8" stroke-width=".8" opacity=".6"/>
<rect x="4.2" y="559.8" width="24.8" height="22.3" rx="2" fill="#000" opacity=".35"/>
<rect x="4.7" y="560.3" width="23.8" height="21.3" rx="1.6" fill="#ffffff"/>
<text x="16.6" y="592.0" font-size="6.25" fill="#303030" text-anchor="middle" font-weight="bold">White</text>
<rect x="34.2" y="556.7" width="31.2" height="42" rx="3" fill="url(#gbtn)"/>
<rect x="34.7" y="557.2" width="30.2" height="41" rx="2.6" fill="none" stroke="#c8c8c8" stroke-width=".8" opacity=".6"/>
<rect x="37.4" y="559.8" width="24.8" height="22.3" rx="2" fill="#000" opacity=".35"/>
<rect x="37.9" y="560.3" width="23.8" height="21.3" rx="1.6" fill="#e9e9e9"/>
<text x="49.8" y="592.0" font-size="6.25" fill="#303030" text-anchor="middle" font-weight="bold">Gray 80</text>
<rect x="67.5" y="556.7" width="31.2" height="42" rx="3" fill="url(#gbtn)"/>
<rect x="68.0" y="557.2" width="30.2" height="41" rx="2.6" fill="none" stroke="#c8c8c8" stroke-width=".8" opacity=".6"/>
<rect x="70.7" y="559.8" width="24.8" height="22.3" rx="2" fill="#000" opacity=".35"/>
<rect x="71.2" y="560.3" width="23.8" height="21.3" rx="1.6" fill="#d3d3d3"/>
<text x="83.1" y="592.0" font-size="6.25" fill="#303030" text-anchor="middle" font-weight="bold">Gray 65</text>
<rect x="100.7" y="556.7" width="31.2" height="42" rx="3" fill="url(#gbtn)"/>
<rect x="101.2" y="557.2" width="30.2" height="41" rx="2.6" fill="none" stroke="#c8c8c8" stroke-width=".8" opacity=".6"/>
<rect x="103.9" y="559.8" width="24.8" height="22.3" rx="2" fill="#000" opacity=".35"/>
<rect x="104.4" y="560.3" width="23.8" height="21.3" rx="1.6" fill="#bcbcbc"/>
<text x="116.3" y="592.0" font-size="6.25" fill="#303030" text-anchor="middle" font-weight="bold">Gray 50</text>
<rect x="133.9" y="556.7" width="31.2" height="42" rx="3" fill="url(#gbtn)"/>
<rect x="134.4" y="557.2" width="30.2" height="41" rx="2.6" fill="none" stroke="#c8c8c8" stroke-width=".8" opacity=".6"/>
<rect x="137.1" y="559.8" width="24.8" height="22.3" rx="2" fill="#000" opacity=".35"/>
<rect x="137.6" y="560.3" width="23.8" height="21.3" rx="1.6" fill="#a3a3a3"/>
<text x="149.5" y="592.0" font-size="6.25" fill="#303030" text-anchor="middle" font-weight="bold">Gray 35</text>
<rect x="167.1" y="556.7" width="31.2" height="42" rx="3" fill="url(#gbtnsel)"/>
<rect x="170.3" y="559.8" width="24.8" height="22.3" rx="2" fill="#000" opacity=".35"/>
<rect x="170.8" y="560.3" width="23.8" height="21.3" rx="1.6" fill="#000000"/>
<text x="182.8" y="592.0" font-size="6.6" fill="#ffffff" text-anchor="middle" font-weight="bold">Black</text>
<rect x="200.4" y="556.7" width="31.2" height="42" rx="3" fill="url(#gbtn)"/>
<rect x="200.9" y="557.2" width="30.2" height="41" rx="2.6" fill="none" stroke="#c8c8c8" stroke-width=".8" opacity=".6"/>
<rect x="203.6" y="559.8" width="24.8" height="22.3" rx="2" fill="#000" opacity=".35"/>
<rect x="204.1" y="560.3" width="23.8" height="21.3" rx="1.6" fill="#7a5547"/>
<text x="216.0" y="592.0" font-size="6.25" fill="#303030" text-anchor="middle" font-weight="bold">Dark Skin</text>
<rect x="233.6" y="556.7" width="31.2" height="42" rx="3" fill="url(#gbtn)"/>
<rect x="234.1" y="557.2" width="30.2" height="41" rx="2.6" fill="none" stroke="#c8c8c8" stroke-width=".8" opacity=".6"/>
<rect x="236.8" y="559.8" width="24.8" height="22.3" rx="2" fill="#000" opacity=".35"/>
<rect x="237.3" y="560.3" width="23.8" height="21.3" rx="1.6" fill="#c99a86"/>
<text x="249.2" y="592.0" font-size="6.25" fill="#303030" text-anchor="middle" font-weight="bold">Light Skin</text>
<rect x="266.8" y="556.7" width="31.2" height="42" rx="3" fill="url(#gbtn)"/>
<rect x="267.3" y="557.2" width="30.2" height="41" rx="2.6" fill="none" stroke="#c8c8c8" stroke-width=".8" opacity=".6"/>
<rect x="270.0" y="559.8" width="24.8" height="22.3" rx="2" fill="#000" opacity=".35"/>
<rect x="270.5" y="560.3" width="23.8" height="21.3" rx="1.6" fill="#6080b0"/>
<text x="282.5" y="592.0" font-size="6.25" fill="#303030" text-anchor="middle" font-weight="bold">Blue Sky</text>
<rect x="300.1" y="556.7" width="31.2" height="42" rx="3" fill="url(#gbtn)"/>
<rect x="300.6" y="557.2" width="30.2" height="41" rx="2.6" fill="none" stroke="#c8c8c8" stroke-width=".8" opacity=".6"/>
<rect x="303.3" y="559.8" width="24.8" height="22.3" rx="2" fill="#000" opacity=".35"/>
<rect x="303.8" y="560.3" width="23.8" height="21.3" rx="1.6" fill="#5a7040"/>
<text x="315.7" y="592.0" font-size="6.25" fill="#303030" text-anchor="middle" font-weight="bold">Foliage</text>
<rect x="333.3" y="556.7" width="31.2" height="42" rx="3" fill="url(#gbtn)"/>
<rect x="333.8" y="557.2" width="30.2" height="41" rx="2.6" fill="none" stroke="#c8c8c8" stroke-width=".8" opacity=".6"/>
<rect x="336.5" y="559.8" width="24.8" height="15.2" rx="2" fill="#000" opacity=".35"/>
<rect x="337.0" y="560.3" width="23.8" height="14.2" rx="1.6" fill="#8a86c8"/>
<text x="348.9" y="584.6" font-size="6.25" fill="#303030" text-anchor="middle" font-weight="bold">Blue</text>
<text x="348.9" y="591.8" font-size="6.25" fill="#303030" text-anchor="middle" font-weight="bold">Flower</text>
<rect x="366.5" y="556.7" width="31.2" height="42" rx="3" fill="url(#gbtn)"/>
<rect x="367.0" y="557.2" width="30.2" height="41" rx="2.6" fill="none" stroke="#c8c8c8" stroke-width=".8" opacity=".6"/>
<rect x="369.7" y="559.8" width="24.8" height="15.2" rx="2" fill="#000" opacity=".35"/>
<rect x="370.2" y="560.3" width="23.8" height="14.2" rx="1.6" fill="#6ec6ae"/>
<text x="382.1" y="584.6" font-size="6.25" fill="#303030" text-anchor="middle" font-weight="bold">Bluish</text>
<text x="382.1" y="591.8" font-size="6.25" fill="#303030" text-anchor="middle" font-weight="bold">Green</text>
<rect x="399.8" y="556.7" width="31.2" height="42" rx="3" fill="url(#gbtn)"/>
<rect x="400.3" y="557.2" width="30.2" height="41" rx="2.6" fill="none" stroke="#c8c8c8" stroke-width=".8" opacity=".6"/>
<rect x="403.0" y="559.8" width="24.8" height="22.3" rx="2" fill="#000" opacity=".35"/>
<rect x="403.5" y="560.3" width="23.8" height="21.3" rx="1.6" fill="#e88a3a"/>
<text x="415.4" y="592.0" font-size="6.25" fill="#303030" text-anchor="middle" font-weight="bold">Orange</text>
<rect x="433.0" y="556.7" width="31.2" height="42" rx="3" fill="url(#gbtn)"/>
<rect x="433.5" y="557.2" width="30.2" height="41" rx="2.6" fill="none" stroke="#c8c8c8" stroke-width=".8" opacity=".6"/>
<rect x="436.2" y="559.8" width="24.8" height="15.2" rx="2" fill="#000" opacity=".35"/>
<rect x="436.7" y="560.3" width="23.8" height="14.2" rx="1.6" fill="#4a5cc0"/>
<text x="435.4" y="584.6" font-size="6.25" fill="#303030" font-weight="bold" textLength="25.4" lengthAdjust="spacingAndGlyphs">Purplish</text>
<text x="435.4" y="591.8" font-size="6.25" fill="#303030" font-weight="bold">Blue</text>
<rect x="466.2" y="556.7" width="31.2" height="42" rx="3" fill="url(#gbtn)"/>
<rect x="466.7" y="557.2" width="30.2" height="41" rx="2.6" fill="none" stroke="#c8c8c8" stroke-width=".8" opacity=".6"/>
<rect x="469.4" y="559.8" width="24.8" height="15.2" rx="2" fill="#000" opacity=".35"/>
<rect x="469.9" y="560.3" width="23.8" height="14.2" rx="1.6" fill="#d05a68"/>
<text x="466.8" y="584.6" font-size="6.25" fill="#303030" font-weight="bold" textLength="29.6" lengthAdjust="spacingAndGlyphs">Moderate</text>
<text x="466.8" y="591.8" font-size="6.25" fill="#303030" font-weight="bold">Red</text>
<rect x="499.4" y="556.7" width="31.2" height="42" rx="3" fill="url(#gbtn)"/>
<rect x="499.9" y="557.2" width="30.2" height="41" rx="2.6" fill="none" stroke="#c8c8c8" stroke-width=".8" opacity=".6"/>
<rect x="502.6" y="559.8" width="24.8" height="22.3" rx="2" fill="#000" opacity=".35"/>
<rect x="503.1" y="560.3" width="23.8" height="21.3" rx="1.6" fill="#5c3a7a"/>
<text x="515.1" y="592.0" font-size="6.25" fill="#303030" text-anchor="middle" font-weight="bold">Purple</text>
<rect x="532.7" y="556.7" width="31.2" height="42" rx="3" fill="url(#gbtn)"/>
<rect x="533.2" y="557.2" width="30.2" height="41" rx="2.6" fill="none" stroke="#c8c8c8" stroke-width=".8" opacity=".6"/>
<rect x="535.9" y="559.8" width="24.8" height="15.2" rx="2" fill="#000" opacity=".35"/>
<rect x="536.4" y="560.3" width="23.8" height="14.2" rx="1.6" fill="#aaca52"/>
<text x="548.3" y="584.6" font-size="6.25" fill="#303030" text-anchor="middle" font-weight="bold">Yellow</text>
<text x="548.3" y="591.8" font-size="6.25" fill="#303030" text-anchor="middle" font-weight="bold">Green</text>
<rect x="565.9" y="556.7" width="31.2" height="42" rx="3" fill="url(#gbtn)"/>
<rect x="566.4" y="557.2" width="30.2" height="41" rx="2.6" fill="none" stroke="#c8c8c8" stroke-width=".8" opacity=".6"/>
<rect x="569.1" y="559.8" width="24.8" height="15.2" rx="2" fill="#000" opacity=".35"/>
<rect x="569.6" y="560.3" width="23.8" height="14.2" rx="1.6" fill="#f0a840"/>
<text x="581.5" y="584.6" font-size="6.25" fill="#303030" text-anchor="middle" font-weight="bold">Orange</text>
<text x="581.5" y="591.8" font-size="6.25" fill="#303030" text-anchor="middle" font-weight="bold">Yellow</text>
<rect x="599.1" y="556.7" width="31.2" height="42" rx="3" fill="url(#gbtn)"/>
<rect x="599.6" y="557.2" width="30.2" height="41" rx="2.6" fill="none" stroke="#c8c8c8" stroke-width=".8" opacity=".6"/>
<rect x="602.3" y="559.8" width="24.8" height="22.3" rx="2" fill="#000" opacity=".35"/>
<rect x="602.8" y="560.3" width="23.8" height="21.3" rx="1.6" fill="#3038a8"/>
<text x="614.8" y="592.0" font-size="6.25" fill="#303030" text-anchor="middle" font-weight="bold">Blue</text>
<rect x="632.4" y="556.7" width="31.2" height="42" rx="3" fill="url(#gbtn)"/>
<rect x="632.9" y="557.2" width="30.2" height="41" rx="2.6" fill="none" stroke="#c8c8c8" stroke-width=".8" opacity=".6"/>
<rect x="635.6" y="559.8" width="24.8" height="22.3" rx="2" fill="#000" opacity=".35"/>
<rect x="636.1" y="560.3" width="23.8" height="21.3" rx="1.6" fill="#52a050"/>
<text x="648.0" y="592.0" font-size="6.25" fill="#303030" text-anchor="middle" font-weight="bold">Green</text>
<rect x="665.6" y="556.7" width="31.2" height="42" rx="3" fill="url(#gbtn)"/>
<rect x="666.1" y="557.2" width="30.2" height="41" rx="2.6" fill="none" stroke="#c8c8c8" stroke-width=".8" opacity=".6"/>
<rect x="668.8" y="559.8" width="24.8" height="22.3" rx="2" fill="#000" opacity=".35"/>
<rect x="669.3" y="560.3" width="23.8" height="21.3" rx="1.6" fill="#c03038"/>
<text x="681.2" y="592.0" font-size="6.25" fill="#303030" text-anchor="middle" font-weight="bold">Red</text>
<rect x="698.8" y="556.7" width="31.2" height="42" rx="3" fill="url(#gbtn)"/>
<rect x="699.3" y="557.2" width="30.2" height="41" rx="2.6" fill="none" stroke="#c8c8c8" stroke-width=".8" opacity=".6"/>
<rect x="702.0" y="559.8" width="24.8" height="22.3" rx="2" fill="#000" opacity=".35"/>
<rect x="702.5" y="560.3" width="23.8" height="21.3" rx="1.6" fill="#f0d040"/>
<text x="714.4" y="592.0" font-size="6.25" fill="#303030" text-anchor="middle" font-weight="bold">Yellow</text>
<rect x="732.1" y="556.7" width="31.2" height="42" rx="3" fill="url(#gbtn)"/>
<rect x="732.6" y="557.2" width="30.2" height="41" rx="2.6" fill="none" stroke="#c8c8c8" stroke-width=".8" opacity=".6"/>
<rect x="735.3" y="559.8" width="24.8" height="22.3" rx="2" fill="#000" opacity=".35"/>
<rect x="735.8" y="560.3" width="23.8" height="21.3" rx="1.6" fill="#c050a0"/>
<text x="747.7" y="592.0" font-size="6.25" fill="#303030" text-anchor="middle" font-weight="bold">Magenta</text>
<rect x="765.3" y="556.7" width="31.2" height="42" rx="3" fill="url(#gbtn)"/>
<rect x="765.8" y="557.2" width="30.2" height="41" rx="2.6" fill="none" stroke="#c8c8c8" stroke-width=".8" opacity=".6"/>
<rect x="768.5" y="559.8" width="24.8" height="22.3" rx="2" fill="#000" opacity=".35"/>
<rect x="769.0" y="560.3" width="23.8" height="21.3" rx="1.6" fill="#2090c0"/>
<text x="780.9" y="592.0" font-size="6.25" fill="#303030" text-anchor="middle" font-weight="bold">Cyan</text>
<rect x="798.5" y="556.7" width="31.2" height="42" rx="3" fill="url(#gbtn)"/>
<rect x="799.0" y="557.2" width="30.2" height="41" rx="2.6" fill="none" stroke="#c8c8c8" stroke-width=".8" opacity=".6"/>
<rect x="801.7" y="559.8" width="24.8" height="22.3" rx="2" fill="#000" opacity=".35"/>
<rect x="802.2" y="560.3" width="23.8" height="21.3" rx="1.6" fill="#ff0000"/>
<text x="814.1" y="592.0" font-size="6.25" fill="#303030" text-anchor="middle" font-weight="bold">100% Red</text>
<rect x="831.7" y="556.7" width="31.2" height="42" rx="3" fill="url(#gbtn)"/>
<rect x="832.2" y="557.2" width="30.2" height="41" rx="2.6" fill="none" stroke="#c8c8c8" stroke-width=".8" opacity=".6"/>
<rect x="834.9" y="559.8" width="24.8" height="15.2" rx="2" fill="#000" opacity=".35"/>
<rect x="835.4" y="560.3" width="23.8" height="14.2" rx="1.6" fill="#00ff00"/>
<text x="847.4" y="584.6" font-size="6.25" fill="#303030" text-anchor="middle" font-weight="bold">100%</text>
<text x="847.4" y="591.8" font-size="6.25" fill="#303030" text-anchor="middle" font-weight="bold">Green</text>
<rect x="865.0" y="556.7" width="31.2" height="42" rx="3" fill="url(#gbtn)"/>
<rect x="865.5" y="557.2" width="30.2" height="41" rx="2.6" fill="none" stroke="#c8c8c8" stroke-width=".8" opacity=".6"/>
<rect x="868.2" y="559.8" width="24.8" height="15.2" rx="2" fill="#000" opacity=".35"/>
<rect x="868.7" y="560.3" width="23.8" height="14.2" rx="1.6" fill="#0010e8"/>
<text x="880.6" y="584.6" font-size="6.25" fill="#303030" text-anchor="middle" font-weight="bold">100%</text>
<text x="880.6" y="591.8" font-size="6.25" fill="#303030" text-anchor="middle" font-weight="bold">Blue</text>
<rect x="898.2" y="556.7" width="31.2" height="42" rx="3" fill="url(#gbtn)"/>
<rect x="898.7" y="557.2" width="30.2" height="41" rx="2.6" fill="none" stroke="#c8c8c8" stroke-width=".8" opacity=".6"/>
<rect x="901.4" y="559.8" width="24.8" height="15.2" rx="2" fill="#000" opacity=".35"/>
<rect x="901.9" y="560.3" width="23.8" height="14.2" rx="1.6" fill="#00ffff"/>
<text x="913.8" y="584.6" font-size="6.25" fill="#303030" text-anchor="middle" font-weight="bold">100%</text>
<text x="913.8" y="591.8" font-size="6.25" fill="#303030" text-anchor="middle" font-weight="bold">Cyan</text>
<rect x="931.4" y="556.7" width="31.2" height="42" rx="3" fill="url(#gbtn)"/>
<rect x="931.9" y="557.2" width="30.2" height="41" rx="2.6" fill="none" stroke="#c8c8c8" stroke-width=".8" opacity=".6"/>
<rect x="934.6" y="559.8" width="24.8" height="15.2" rx="2" fill="#000" opacity=".35"/>
<rect x="935.1" y="560.3" width="23.8" height="14.2" rx="1.6" fill="#ff00ff"/>
<text x="947.1" y="584.6" font-size="6.25" fill="#303030" text-anchor="middle" font-weight="bold">100%</text>
<text x="947.1" y="591.8" font-size="6.25" fill="#303030" text-anchor="middle" font-weight="bold">Magenta</text>
<rect x="964.7" y="556.7" width="31.2" height="42" rx="3" fill="url(#gbtn)"/>
<rect x="965.2" y="557.2" width="30.2" height="41" rx="2.6" fill="none" stroke="#c8c8c8" stroke-width=".8" opacity=".6"/>
<rect x="967.9" y="559.8" width="24.8" height="15.2" rx="2" fill="#000" opacity=".35"/>
<rect x="968.4" y="560.3" width="23.8" height="14.2" rx="1.6" fill="#ffff00"/>
<text x="980.3" y="584.6" font-size="6.25" fill="#303030" text-anchor="middle" font-weight="bold">100%</text>
<text x="980.3" y="591.8" font-size="6.25" fill="#303030" text-anchor="middle" font-weight="bold">Yellow</text>
<rect x="998" y="556.7" width="29" height="12" fill="url(#gctl2)"/>
<path d="M1009 564.5L1012.5 560L1016 564.5Z" fill="#4a4a4a"/>
<rect x="998" y="569.7" width="29" height="26" fill="url(#gctl2)"/>
<rect x="1004" y="573.2" width="18" height="18.6" rx="2.2" fill="#b2b2b2" stroke="#2a2a2a" stroke-width="1.5"/>
<rect x="1008.6" y="577.6" width="9" height="8.8" fill="#000"/>
<rect x="1028.5" y="556.7" width="28.0" height="18.3" fill="url(#gctl2)"/>
<circle cx="1043.0" cy="566" r="6.5" fill="#9c9c9c" opacity=".5"/>
<rect x="1057.5" y="556.7" width="27.5" height="18.3" fill="url(#gctl2)"/>
<circle cx="1071.8" cy="566" r="6.5" fill="#9c9c9c" opacity=".5"/>
<rect x="1086" y="556.7" width="27.5" height="18.3" fill="url(#gctl2)"/>
<circle cx="1100.2" cy="566" r="6.5" fill="#9c9c9c" opacity=".5"/>
<rect x="1114.5" y="556.7" width="27.0" height="18.3" fill="url(#gctl2)"/>
<circle cx="1128.5" cy="566" r="6.5" fill="#9c9c9c" opacity=".5"/>
<rect x="1040.3" y="563.3" width="5.2" height="5.2" fill="#2a2a2a"/>
<path d="M1069.6 562.2L1075.6 566L1069.6 569.8Z" fill="#2a2a2a"/>
<text x="1100.2" y="569.2" font-size="8" fill="#2a2a2a" text-anchor="middle" font-weight="bold">[+]</text>
<text x="1128.4" y="569.6" font-size="10" fill="#2a2a2a" text-anchor="middle" font-weight="bold">∞</text>
<rect x="1142.5" y="556.7" width="57.5" height="18.3" fill="url(#gctld)"/>
<circle cx="1157" cy="566" r="5.5" fill="#2a2a2a"/><circle cx="1185" cy="566" r="6.5" fill="#3c3c3c"/>
<rect x="1154.5" y="562.5" width="5" height="7" rx="1.5" fill="none" stroke="#444" stroke-width="1.2"/>
<rect x="1028.5" y="576.3" width="85.5" height="20" rx="2" fill="url(#gctl)"/>
<rect x="1115.5" y="576.3" width="84" height="20" rx="2" fill="url(#gctl)"/>
<circle cx="1047" cy="585.8" r="6.6" fill="#c4c4c4" opacity=".7"/>
<circle cx="1181.5" cy="585.8" r="6.6" fill="#c4c4c4" opacity=".7"/>
<text x="1047.5" y="589.8" font-size="12" fill="#444" text-anchor="middle">«</text>
<text x="1181.5" y="589.8" font-size="12" fill="#444" text-anchor="middle">»</text>
<text x="1080.2" y="590.4" font-size="14.6" fill="#3c3c3c" text-anchor="middle" textLength="31.5" lengthAdjust="spacingAndGlyphs" stroke="#3c3c3c" stroke-width=".35">Back</text>
<text x="1147.2" y="590.4" font-size="14.6" fill="#3c3c3c" text-anchor="middle" textLength="32" lengthAdjust="spacingAndGlyphs" stroke="#3c3c3c" stroke-width=".35">Next</text>
<g fill="#000" fill-opacity="0.45" stroke="#000" stroke-opacity="0.45" stroke-width=".5" font-family="'Liberation Sans','Noto Sans CJK SC',sans-serif"><text x="978.2" y="558.5999999999999" font-size="35">知</text><text x="1016.2" y="558.5999999999999" font-size="35">乎</text><text x="1099.2" y="558.5999999999999" font-size="35">南</text><text x="1134.2" y="558.5999999999999" font-size="35">飞</text><text x="1065.6" y="555.8" font-size="32.5" textLength="36" lengthAdjust="spacingAndGlyphs">@</text></g>
<g fill="#fff" fill-opacity="1" stroke="#fff" stroke-opacity="1" stroke-width=".5" font-family="'Liberation Sans','Noto Sans CJK SC',sans-serif"><text x="977.2" y="557.3" font-size="35">知</text><text x="1015.2" y="557.3" font-size="35">乎</text><text x="1098.2" y="557.3" font-size="35">南</text><text x="1133.2" y="557.3" font-size="35">飞</text><text x="1064.6" y="554.5" font-size="32.5" textLength="36" lengthAdjust="spacingAndGlyphs">@</text></g>
</g></svg></body></html>
